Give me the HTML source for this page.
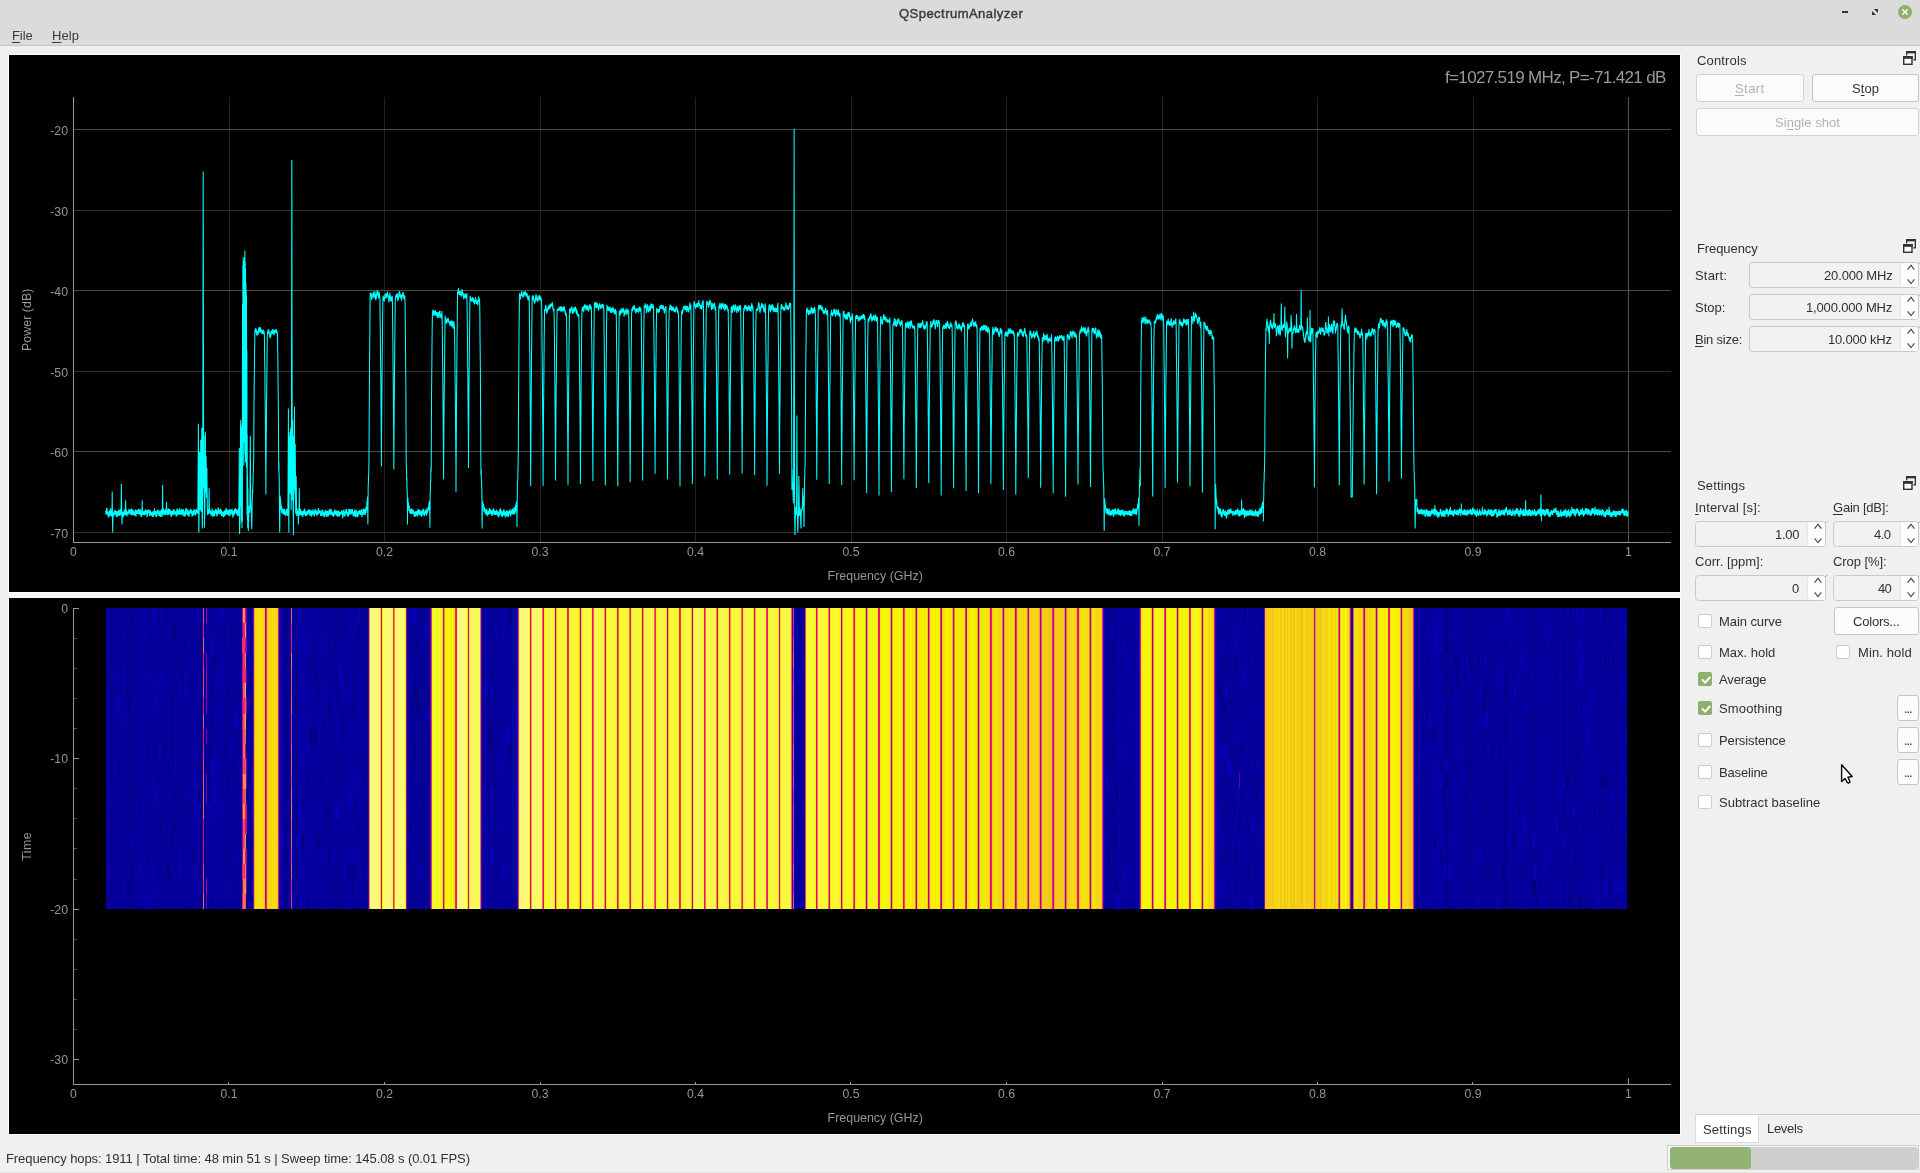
<!DOCTYPE html>
<html lang="en"><head><meta charset="utf-8"><title>QSpectrumAnalyzer</title>
<style>
html,body{margin:0;padding:0}
body{width:1920px;height:1173px;overflow:hidden;background:#f0f0f0;position:relative;font-family:"Liberation Sans", sans-serif;}
.abs,.t,.plot,.btn,.spin,.spinbtn,.cb,.line,.tab,.bar{position:absolute;box-sizing:border-box}
.t{white-space:nowrap;line-height:1;will-change:transform}
.plot{will-change:transform}

.t u{text-decoration:underline;text-underline-offset:1.5px;text-decoration-thickness:1px}
#titlebar{position:absolute;left:0;top:0;width:1920px;height:45px;background:#dbdbdb;border-bottom:1px solid #c5c5c5;box-sizing:content-box}
.btn{background:#fbfbfb;border:1px solid #d2d2d2;border-radius:3px}
.btn.act{border-color:#c4c4c4;background:#fcfcfc}
.spin{background:#f1f1f1;border:1px solid #c9c9c9;border-radius:3.5px}
.spinbtn{background:#fefefe;border-left:1px solid #e4e4e4;border-radius:3px 2px 2px 3px}
.cb{background:#fefefe;border:1px solid #cdcdcd;border-radius:2px}
.cb.on{background:#8fb06d;border-color:#8fb06d}
.line{background:#c9c9c9}
.ttl{-webkit-text-stroke:0.45px #3c3c3c}
</style></head><body>
<div id="titlebar"></div>
<span class="t ttl" id="t1" style="top:7.00px;font-size:13px;color:#3c3c3c;left:898.50px;letter-spacing:0.467px;">QSpectrumAnalyzer</span>
<span class="t " id="t2" style="top:28.70px;font-size:13px;color:#3a3a3a;left:12.30px;letter-spacing:-0.090px;"><u>F</u>ile</span>
<span class="t " id="t3" style="top:28.70px;font-size:13px;color:#3a3a3a;left:52.30px;letter-spacing:0.083px;"><u>H</u>elp</span>
<svg class="abs" style="left:1835px;top:2px" width="85" height="22" viewBox="1835 2 85 22"><rect x="1842" y="11" width="6" height="2" fill="#333"/><path d="M1873.9 9H1878V13.1z M1872 10.9V15H1876.1z" fill="#333"/><circle cx="1905" cy="12" r="7" fill="#8fb06d"/><path d="M1902.3 9.3l5.4 5.4m0-5.4l-5.4 5.4" stroke="#fff" stroke-width="1.4"/></svg>
<div class="abs" style="left:8px;top:54px;width:1673px;height:539px;background:#fff"></div>
<div class="abs" style="left:8px;top:597px;width:1673px;height:538px;background:#fff"></div>
<div class="abs" style="left:8px;top:593px;width:1673px;height:4px;background:repeating-conic-gradient(#fbfbfb 0% 25%,#f0f0f0 0% 50%) 0 0/2px 2px"></div>
<svg class="plot" style="left:9px;top:55px" width="1671" height="537" viewBox="9 55 1671 537">
<rect x="9" y="55" width="1671" height="537" fill="#000"/>
<g shape-rendering="crispEdges" stroke-width="1" fill="none"><path d="M229.5 97V542" stroke="#222222"/><path d="M384.5 97V542" stroke="#222222"/><path d="M540.5 97V542" stroke="#222222"/><path d="M695.5 97V542" stroke="#222222"/><path d="M851.5 97V542" stroke="#222222"/><path d="M1006.5 97V542" stroke="#222222"/><path d="M1162.5 97V542" stroke="#222222"/><path d="M1317.5 97V542" stroke="#222222"/><path d="M1473.5 97V542" stroke="#222222"/><path d="M1628.5 97V542" stroke="#545454"/><path d="M74 129.5H1671" stroke="#4a4a4a"/><path d="M74 210.5H1671" stroke="#2e2e2e"/><path d="M74 290.5H1671" stroke="#4a4a4a"/><path d="M74 371.5H1671" stroke="#2e2e2e"/><path d="M74 451.5H1671" stroke="#4a4a4a"/><path d="M74 532.5H1671" stroke="#2e2e2e"/></g>
<g shape-rendering="crispEdges" stroke="#969696" stroke-width="1" fill="none"><path d="M73.5 97V543"/><path d="M73 542.5H1671"/></g>
<g fill="#969696" font-family='"Liberation Sans", sans-serif'><text x="68.0" y="135.0" font-size="12.3" text-anchor="end">-20</text><text x="68.0" y="216.0" font-size="12.3" text-anchor="end">-30</text><text x="68.0" y="296.0" font-size="12.3" text-anchor="end">-40</text><text x="68.0" y="377.0" font-size="12.3" text-anchor="end">-50</text><text x="68.0" y="457.0" font-size="12.3" text-anchor="end">-60</text><text x="68.0" y="538.0" font-size="12.3" text-anchor="end">-70</text><text x="73.5" y="556.0" font-size="12.2" text-anchor="middle">0</text><text x="229.0" y="556.0" font-size="12.2" text-anchor="middle">0.1</text><text x="384.5" y="556.0" font-size="12.2" text-anchor="middle">0.2</text><text x="540.0" y="556.0" font-size="12.2" text-anchor="middle">0.3</text><text x="695.5" y="556.0" font-size="12.2" text-anchor="middle">0.4</text><text x="851.0" y="556.0" font-size="12.2" text-anchor="middle">0.5</text><text x="1006.5" y="556.0" font-size="12.2" text-anchor="middle">0.6</text><text x="1162.0" y="556.0" font-size="12.2" text-anchor="middle">0.7</text><text x="1317.5" y="556.0" font-size="12.2" text-anchor="middle">0.8</text><text x="1473.0" y="556.0" font-size="12.2" text-anchor="middle">0.9</text><text x="1628.5" y="556.0" font-size="12.2" text-anchor="middle">1</text><text x="875.2" y="580.0" font-size="12.4" text-anchor="middle" textLength="95.2" lengthAdjust="spacing">Frequency (GHz)</text><text transform="translate(30.6 319.8) rotate(-90)" font-size="12.4" text-anchor="middle" textLength="62.4" lengthAdjust="spacing">Power (dB)</text><text x="1666.3" y="83.0" font-size="17" text-anchor="end" textLength="221.3" lengthAdjust="spacing" fill="#9a9a9a">f=1027.519 MHz, P=-71.421 dB</text></g>
<polyline fill="none" stroke="#00ffff" stroke-width="1.05" stroke-linejoin="bevel" points="105.8,510.9 106.0,514.9 106.2,510.3 106.3,514.1 106.5,508.3 106.7,508.3 106.8,508.3 107.0,508.3 107.2,511.8 107.3,513.5 107.5,511.3 107.7,514.1 107.8,512.5 108.0,516.3 108.2,512.0 108.3,517.4 108.5,512.1 108.7,515.4 108.8,511.8 109.0,514.8 109.2,510.6 109.3,514.1 109.5,511.0 109.7,516.5 109.8,512.0 110.0,516.3 110.2,510.3 110.3,512.9 110.5,508.4 110.7,512.3 110.8,508.5 111.0,514.0 111.2,511.6 111.3,516.4 111.5,512.5 111.7,516.0 111.8,513.5 112.0,510.6 112.2,496.1 112.2,491.4 112.3,503.5 112.5,521.2 112.7,532.1 112.7,532.5 112.8,522.6 113.0,515.9 113.2,512.8 113.3,515.8 113.5,512.2 113.7,516.3 113.8,512.3 114.0,513.7 114.2,511.1 114.3,514.6 114.5,510.9 114.7,512.8 114.8,510.2 115.0,514.5 115.2,509.7 115.3,513.4 115.5,511.8 115.7,514.1 115.8,511.3 116.0,515.4 116.2,512.3 116.3,517.1 116.5,512.2 116.7,517.3 116.8,511.2 117.0,515.4 117.2,511.0 117.3,515.5 117.5,513.0 117.7,516.5 117.8,512.5 118.0,513.6 118.2,511.6 118.3,514.1 118.5,509.5 118.7,515.4 118.8,510.9 119.0,514.7 119.2,510.2 119.3,516.0 119.5,511.3 119.7,515.1 119.8,512.1 120.0,513.7 120.2,509.9 120.3,514.1 120.5,509.4 120.7,515.2 120.8,509.2 121.0,513.5 121.2,504.5 121.3,491.1 121.4,484.1 121.5,495.9 121.7,510.4 121.8,516.0 122.0,524.3 122.0,524.4 122.2,517.6 122.3,514.6 122.5,511.7 122.7,516.3 122.8,513.6 123.0,517.2 123.2,512.8 123.3,516.6 123.5,511.7 123.7,515.9 123.8,512.0 124.0,513.5 124.2,509.6 124.3,514.6 124.5,510.2 124.7,513.7 124.8,509.6 125.0,515.2 125.2,511.3 125.3,511.6 125.5,503.2 125.6,500.3 125.7,504.9 125.8,509.1 126.0,515.5 126.2,509.5 126.3,513.8 126.5,510.5 126.7,514.8 126.8,511.4 127.0,516.5 127.2,512.7 127.3,514.3 127.5,511.8 127.7,513.7 127.8,511.9 128.0,513.4 128.2,511.1 128.3,514.5 128.5,512.2 128.7,514.5 128.8,508.9 129.0,513.6 129.2,509.6 129.3,513.5 129.5,509.7 129.7,512.6 129.8,510.1 130.0,512.6 130.2,509.7 130.3,512.9 130.5,510.5 130.7,515.1 130.8,509.2 131.0,514.3 131.2,509.0 131.3,513.2 131.5,508.5 131.7,514.7 131.8,511.2 132.0,515.4 132.2,512.2 132.3,514.5 132.5,510.3 132.7,514.8 132.8,509.5 133.0,515.0 133.2,510.2 133.3,513.5 133.5,512.2 133.7,514.8 133.8,510.7 134.0,514.7 134.2,513.1 134.3,514.6 134.5,513.1 134.7,515.9 134.8,512.4 135.0,513.5 135.2,510.5 135.3,514.5 135.5,509.4 135.7,513.5 135.8,512.7 136.0,516.6 136.2,509.9 136.3,513.3 136.5,510.5 136.7,513.2 136.8,510.2 137.0,513.6 137.2,510.6 137.3,513.9 137.5,512.2 137.7,513.1 137.8,511.1 138.0,512.4 138.2,509.0 138.3,513.6 138.5,510.0 138.7,513.9 138.8,508.8 139.0,512.9 139.2,510.0 139.3,513.3 139.5,509.7 139.7,515.1 139.8,512.1 140.0,513.2 140.2,509.4 140.3,512.9 140.5,509.2 140.7,513.6 140.8,510.7 141.0,516.9 141.2,514.3 141.3,516.8 141.5,513.5 141.7,516.6 141.8,511.3 142.0,512.4 142.2,503.1 142.2,500.3 142.3,506.5 142.5,509.9 142.7,514.9 142.8,512.2 143.0,514.2 143.2,511.4 143.3,514.4 143.5,511.4 143.7,514.6 143.8,512.2 144.0,514.8 144.2,511.1 144.3,515.4 144.5,512.2 144.7,515.1 144.8,511.4 145.0,513.6 145.2,509.9 145.3,514.3 145.5,509.5 145.7,514.5 145.8,510.7 146.0,513.2 146.2,509.8 146.3,513.4 146.5,511.7 146.7,514.2 146.8,511.0 147.0,516.9 147.2,511.9 147.3,516.7 147.5,510.1 147.7,513.3 147.8,509.8 148.0,513.4 148.2,510.3 148.3,513.0 148.5,510.1 148.7,511.6 148.8,509.6 149.0,512.9 149.2,509.5 149.3,515.9 149.5,511.2 149.7,513.8 149.8,511.8 150.0,514.2 150.2,510.5 150.3,514.4 150.5,510.9 150.7,515.8 150.8,511.8 151.0,515.2 151.2,513.7 151.3,515.8 151.5,512.4 151.7,515.3 151.8,511.9 152.0,515.4 152.2,513.1 152.3,516.3 152.5,512.0 152.7,517.0 152.8,512.8 153.0,515.9 153.2,511.1 153.3,516.9 153.5,511.5 153.7,514.3 153.8,511.6 154.0,515.1 154.2,511.2 154.3,512.6 154.5,508.3 154.7,514.5 154.8,511.3 155.0,514.6 155.2,511.3 155.3,515.4 155.5,513.3 155.7,516.4 155.8,511.0 156.0,515.1 156.2,512.7 156.3,515.2 156.5,513.1 156.7,517.2 156.8,513.6 157.0,514.8 157.2,510.1 157.3,512.8 157.5,510.4 157.7,511.7 157.8,510.5 158.0,513.9 158.2,509.6 158.3,513.8 158.5,512.2 158.7,516.1 158.8,512.2 159.0,515.6 159.2,513.5 159.3,515.3 159.5,510.8 159.7,514.6 159.8,512.5 160.0,516.3 160.2,511.0 160.3,516.9 160.5,512.3 160.7,516.8 160.8,510.8 161.0,513.5 161.2,509.8 161.3,513.5 161.5,509.3 161.7,513.3 161.8,512.2 162.0,517.0 162.2,513.5 162.3,512.2 162.5,495.1 162.6,484.9 162.7,495.3 162.8,508.5 163.0,515.4 163.2,509.6 163.3,512.8 163.5,508.3 163.7,512.3 163.8,510.1 164.0,513.7 164.2,510.0 164.3,512.6 164.5,510.3 164.7,515.1 164.8,509.9 165.0,515.2 165.2,512.5 165.3,515.2 165.5,510.1 165.7,514.9 165.8,508.6 166.0,513.0 166.2,508.8 166.3,508.5 166.5,501.9 166.5,503.0 166.7,509.8 166.8,511.0 167.0,514.5 167.2,512.0 167.3,514.4 167.5,511.9 167.7,515.3 167.8,510.0 168.0,513.1 168.2,508.0 168.3,513.6 168.5,510.1 168.7,514.4 168.8,508.9 169.0,514.8 169.2,509.2 169.3,514.3 169.5,509.1 169.7,513.1 169.8,509.9 170.0,513.9 170.2,509.8 170.3,513.7 170.5,511.3 170.7,515.1 170.8,511.4 171.0,516.0 171.2,511.6 171.3,517.0 171.5,511.1 171.7,514.6 171.8,510.4 172.0,515.6 172.2,510.4 172.3,514.6 172.5,511.4 172.7,515.1 172.8,510.5 173.0,514.4 173.2,511.6 173.3,515.3 173.5,509.3 173.7,514.0 173.8,509.3 174.0,511.0 174.2,509.3 174.3,512.2 174.5,510.9 174.7,513.8 174.8,511.0 175.0,514.8 175.2,513.1 175.3,514.5 175.5,511.3 175.7,514.9 175.8,512.1 176.0,515.5 176.2,511.3 176.3,516.7 176.5,511.6 176.7,514.6 176.8,508.8 177.0,512.9 177.2,508.6 177.3,514.4 177.5,511.0 177.7,515.6 177.8,510.6 178.0,513.1 178.2,510.0 178.3,514.6 178.5,509.7 178.7,513.5 178.8,510.2 179.0,514.8 179.2,509.8 179.3,513.0 179.5,510.2 179.7,512.9 179.8,508.0 180.0,513.4 180.2,510.6 180.3,514.9 180.5,511.7 180.7,514.8 180.8,511.0 181.0,514.8 181.2,510.4 181.3,512.5 181.5,509.7 181.7,514.3 181.8,508.9 182.0,513.0 182.2,510.5 182.3,514.4 182.5,509.6 182.7,513.8 182.8,510.2 183.0,516.5 183.2,511.1 183.3,513.7 183.5,509.2 183.7,514.1 183.8,510.5 184.0,513.5 184.2,511.5 184.3,516.1 184.5,513.1 184.7,516.1 184.8,512.3 185.0,516.5 185.2,513.3 185.3,516.6 185.5,509.6 185.7,514.0 185.8,508.6 186.0,511.8 186.2,508.0 186.3,513.1 186.5,508.7 186.7,514.3 186.8,510.0 187.0,514.6 187.2,510.6 187.3,512.2 187.5,510.0 187.7,514.9 187.9,509.2 188.0,515.5 188.2,510.7 188.4,516.0 188.5,511.5 188.7,514.8 188.9,512.2 189.0,517.1 189.2,512.1 189.4,515.3 189.5,511.3 189.7,513.1 189.9,510.0 190.0,513.3 190.2,509.5 190.4,511.8 190.5,510.5 190.7,512.5 190.9,508.7 191.0,513.7 191.2,510.1 191.4,513.0 191.5,510.5 191.7,514.0 191.9,511.5 192.0,516.8 192.2,512.8 192.4,515.8 192.5,511.2 192.7,516.1 192.9,510.9 193.0,515.5 193.2,511.6 193.4,515.3 193.5,509.5 193.7,513.3 193.9,509.7 194.0,514.6 194.2,512.3 194.4,513.3 194.5,509.5 194.7,514.1 194.9,510.4 195.0,513.1 195.2,509.5 195.4,515.4 195.5,511.2 195.7,515.5 195.9,511.3 196.0,513.1 196.2,510.7 196.4,512.9 196.5,508.9 196.7,512.4 196.9,510.2 197.0,512.2 197.2,510.4 197.4,512.5 197.5,510.5 197.7,514.0 197.9,507.8 198.0,487.5 198.2,460.4 198.4,429.2 198.4,423.7 198.5,455.5 198.7,509.7 198.8,532.5 198.9,530.9 199.0,522.3 199.2,507.9 199.4,491.4 199.5,468.6 199.6,451.9 199.7,466.0 199.9,486.1 200.0,508.6 200.2,510.0 200.4,498.0 200.5,473.0 200.7,444.5 200.7,439.8 200.9,468.6 201.0,494.8 201.2,511.8 201.4,511.0 201.5,481.2 201.7,453.2 201.8,427.7 201.9,444.4 202.0,489.7 202.2,522.3 202.3,528.5 202.4,524.2 202.5,512.4 202.7,492.7 202.9,401.8 203.0,305.6 203.2,176.0 203.2,171.4 203.4,302.8 203.5,398.5 203.7,488.5 203.9,484.6 204.0,459.0 204.1,435.8 204.2,467.0 204.4,515.8 204.4,527.7 204.5,520.6 204.7,518.1 204.9,511.9 205.0,498.3 205.2,468.6 205.4,436.4 205.4,431.8 205.5,464.6 205.7,491.4 205.9,492.3 206.0,476.2 206.1,455.9 206.2,464.2 206.4,486.3 206.5,498.0 206.7,494.9 206.9,477.3 206.9,468.0 207.0,481.9 207.2,495.7 207.4,512.1 207.5,509.7 207.7,514.9 207.9,510.7 208.0,513.7 208.2,510.6 208.4,514.1 208.5,509.5 208.7,513.5 208.9,506.9 209.0,496.7 209.1,488.2 209.2,496.5 209.4,511.1 209.5,509.7 209.7,512.6 209.9,509.6 210.0,513.8 210.2,510.2 210.4,513.5 210.5,510.7 210.7,512.6 210.9,511.7 211.0,515.7 211.2,512.8 211.4,515.3 211.5,512.8 211.7,513.9 211.9,509.5 212.0,513.7 212.2,508.4 212.4,515.2 212.5,510.9 212.7,516.6 212.9,513.4 213.0,516.9 213.2,512.0 213.4,514.4 213.5,510.5 213.7,515.9 213.9,511.7 214.0,514.2 214.2,510.8 214.4,516.3 214.5,511.2 214.7,516.1 214.9,512.0 215.0,512.8 215.2,511.1 215.4,512.3 215.5,509.1 215.7,513.5 215.9,510.4 216.0,512.3 216.2,510.5 216.4,513.8 216.5,509.5 216.7,515.4 216.9,511.3 217.0,516.5 217.2,512.1 217.4,515.5 217.5,511.7 217.7,513.1 217.9,507.8 218.0,513.2 218.2,507.5 218.4,511.2 218.5,509.5 218.7,511.6 218.9,509.6 219.0,514.0 219.2,511.3 219.4,514.3 219.5,510.4 219.7,513.0 219.9,510.2 220.0,514.1 220.2,508.9 220.4,512.5 220.5,508.4 220.7,514.0 220.9,511.0 221.0,514.5 221.2,510.0 221.4,516.0 221.5,510.3 221.7,515.4 221.9,512.5 222.0,514.4 222.2,511.9 222.4,515.8 222.5,513.0 222.7,516.4 222.9,511.4 223.0,516.2 223.2,514.0 223.4,517.2 223.5,512.5 223.7,516.1 223.9,511.3 224.0,515.5 224.2,511.5 224.4,516.3 224.5,510.2 224.7,516.4 224.9,511.2 225.0,514.5 225.2,511.5 225.4,514.1 225.5,509.7 225.7,514.9 225.9,509.2 226.0,514.2 226.2,507.8 226.4,513.2 226.5,509.5 226.7,513.4 226.9,509.6 227.0,513.0 227.2,510.6 227.4,515.0 227.5,511.0 227.7,514.7 227.9,510.4 228.0,513.7 228.2,509.5 228.4,514.6 228.5,510.8 228.7,514.8 228.9,510.8 229.0,516.4 229.2,511.9 229.4,515.5 229.5,510.1 229.7,513.1 229.9,509.1 230.0,511.9 230.2,510.5 230.4,513.2 230.5,510.1 230.7,515.2 230.9,510.9 231.0,513.9 231.2,509.7 231.4,513.8 231.5,510.4 231.7,513.1 231.9,509.0 232.0,512.8 232.2,509.6 232.4,513.6 232.5,511.4 232.7,516.5 232.9,511.0 233.0,517.7 233.2,512.5 233.4,515.8 233.5,510.8 233.7,515.7 233.9,511.0 234.0,515.1 234.2,510.2 234.4,514.4 234.5,509.2 234.7,512.0 234.9,508.7 235.0,512.3 235.2,509.2 235.4,512.1 235.5,508.3 235.7,513.4 235.9,508.8 236.0,512.2 236.2,509.1 236.4,512.8 236.5,510.1 236.7,514.0 236.9,511.1 237.0,514.0 237.2,511.9 237.4,515.9 237.5,510.3 237.7,513.3 237.9,510.4 238.0,513.4 238.2,508.6 238.4,514.2 238.5,511.0 238.7,516.1 238.9,506.4 239.0,487.7 239.2,474.9 239.3,447.9 239.4,501.9 239.5,528.9 239.6,534.1 239.7,528.4 239.9,521.1 240.0,523.7 240.2,480.4 240.4,492.5 240.5,430.1 240.7,419.7 240.7,429.6 240.9,425.4 241.0,506.7 241.2,427.1 241.4,519.9 241.5,438.8 241.7,522.9 241.9,432.1 242.0,528.3 242.2,423.5 242.4,521.5 242.5,304.4 242.7,403.9 242.9,265.6 243.0,442.7 243.2,257.3 243.4,441.4 243.5,266.1 243.7,465.8 243.9,274.8 244.0,396.9 244.2,260.9 244.4,442.1 244.5,257.6 244.7,412.6 244.9,250.5 245.0,453.9 245.2,261.6 245.4,462.5 245.5,268.4 245.7,420.1 245.9,282.8 246.0,447.6 246.2,290.0 246.4,467.5 246.5,295.8 246.7,431.9 246.9,351.1 247.0,515.1 247.2,434.6 247.4,520.0 247.5,475.3 247.7,527.8 247.9,488.5 248.0,528.3 248.2,523.0 248.3,530.9 248.4,528.9 248.5,512.8 248.7,521.7 248.9,509.6 249.0,513.2 249.2,505.5 249.4,511.9 249.5,510.1 249.7,512.8 249.9,506.8 250.0,486.8 250.2,459.3 250.3,435.8 250.4,448.7 250.5,475.4 250.7,499.2 250.9,505.7 251.0,509.1 251.2,508.5 251.4,517.1 251.5,521.6 251.7,528.7 251.7,529.3 251.9,521.6 252.0,514.6 252.2,503.4 252.4,498.3 252.5,489.5 252.7,493.2 252.9,483.7 253.0,483.0 253.2,473.1 253.4,472.1 253.5,462.4 253.7,456.8 253.9,423.8 254.0,402.9 254.2,383.6 254.4,369.3 254.5,353.7 254.7,344.0 254.9,330.8 255.0,332.9 255.2,328.9 255.4,331.2 255.5,328.3 255.7,332.0 255.9,328.3 256.0,330.2 256.2,329.7 256.4,333.2 256.5,329.8 256.7,334.8 256.9,333.2 257.0,336.2 257.2,331.4 257.4,333.5 257.5,331.3 257.7,334.1 257.9,331.8 258.0,332.7 258.2,331.0 258.4,334.5 258.5,328.8 258.7,331.7 258.9,327.5 259.0,331.2 259.2,326.7 259.4,331.2 259.5,327.5 259.7,332.4 259.9,328.6 260.0,332.1 260.2,329.1 260.4,330.9 260.5,327.4 260.7,330.1 260.9,328.7 261.0,332.3 261.2,330.0 261.4,333.3 261.5,331.4 261.7,333.9 261.9,330.9 262.0,333.7 262.2,330.4 262.4,332.9 262.5,330.4 262.7,332.8 262.9,329.5 263.0,333.6 263.2,329.6 263.4,333.2 263.5,330.8 263.7,334.4 263.9,330.8 264.0,333.9 264.2,332.0 264.4,334.6 264.5,343.5 264.7,361.3 264.9,373.0 265.0,390.7 265.2,405.4 265.4,424.0 265.5,442.0 265.7,464.0 265.9,494.6 265.9,493.4 266.0,463.6 266.2,441.4 266.4,423.7 266.5,405.6 266.7,391.2 266.9,372.8 267.0,360.7 267.2,342.9 267.4,334.4 267.5,331.4 267.7,332.8 267.9,331.0 268.0,332.5 268.2,329.4 268.4,333.2 268.5,329.5 268.7,333.7 268.9,329.2 269.0,333.1 269.2,332.0 269.4,334.8 269.5,332.8 269.7,337.4 269.9,334.4 270.0,337.5 270.2,335.9 270.4,338.3 270.5,333.8 270.7,337.0 270.9,331.4 271.0,334.9 271.2,330.8 271.4,333.2 271.5,330.5 271.7,333.8 271.9,330.4 272.0,332.0 272.2,330.5 272.4,334.1 272.5,329.6 272.7,332.8 272.9,329.3 273.0,333.7 273.2,329.9 273.4,332.1 273.5,329.6 273.7,333.4 273.9,331.9 274.0,335.4 274.2,331.2 274.4,333.4 274.5,330.0 274.7,332.2 274.9,330.6 275.0,332.3 275.2,329.9 275.4,331.6 275.5,330.0 275.7,333.2 275.9,329.9 276.0,332.8 276.2,329.1 276.4,331.8 276.5,330.9 276.7,333.5 276.9,330.2 277.0,333.3 277.2,332.5 277.4,336.6 277.5,333.4 277.7,349.9 277.9,361.1 278.0,378.0 278.2,392.1 278.4,411.9 278.5,434.6 278.7,470.8 278.9,462.8 279.0,472.5 279.2,475.8 279.4,499.1 279.5,514.4 279.7,532.3 279.7,532.5 279.9,518.0 280.0,507.0 280.2,495.4 280.4,503.8 280.5,498.4 280.7,505.4 280.9,502.6 281.0,509.6 281.2,505.6 281.4,508.4 281.5,505.6 281.7,513.2 281.9,507.8 282.0,510.1 282.2,510.1 282.4,512.6 282.5,509.9 282.7,513.4 282.9,509.3 283.0,513.7 283.2,508.4 283.4,514.6 283.5,510.7 283.7,514.5 283.9,511.9 284.0,513.8 284.2,509.8 284.4,513.8 284.5,509.1 284.7,514.2 284.9,510.6 285.0,515.3 285.2,512.8 285.4,516.0 285.5,511.5 285.7,515.6 285.9,512.3 286.0,514.9 286.2,510.4 286.4,514.1 286.5,508.9 286.7,512.5 286.9,508.8 287.0,512.4 287.2,511.3 287.4,516.0 287.5,510.8 287.7,515.2 287.9,510.7 288.0,497.5 288.2,462.6 288.4,424.1 288.4,408.4 288.5,466.9 288.7,513.0 288.9,531.6 288.9,532.5 289.0,511.0 289.2,435.8 289.2,468.4 289.4,472.9 289.5,492.7 289.7,485.6 289.9,455.2 290.0,431.8 290.0,449.9 290.2,478.8 290.4,493.7 290.5,471.9 290.7,440.5 290.7,427.7 290.9,457.0 291.0,488.2 291.2,510.3 291.4,473.5 291.5,376.9 291.7,274.1 291.8,160.1 291.9,200.1 292.0,321.5 292.2,417.7 292.4,500.6 292.5,471.9 292.7,439.1 292.8,419.7 292.9,447.1 293.0,481.8 293.2,513.1 293.4,520.1 293.5,533.8 293.5,534.9 293.7,435.8 293.7,501.7 293.9,489.6 294.0,494.1 294.2,474.6 294.4,440.5 294.5,406.8 294.5,426.9 294.7,467.8 294.9,490.6 295.0,483.1 295.2,455.5 295.2,443.8 295.4,466.8 295.5,488.7 295.7,513.7 295.9,502.2 296.0,492.6 296.2,476.1 296.2,478.5 296.4,495.6 296.5,505.3 296.7,515.9 296.9,510.5 297.0,511.4 297.2,508.6 297.4,511.4 297.5,510.7 297.7,514.2 297.9,511.9 298.0,513.5 298.2,517.4 298.4,524.4 298.4,524.3 298.5,515.5 298.7,513.9 298.9,508.7 299.0,511.9 299.2,497.0 299.3,488.2 299.4,496.9 299.5,507.5 299.7,515.7 299.9,509.3 300.0,513.9 300.2,509.9 300.4,512.1 300.5,508.7 300.7,514.0 300.9,510.2 301.0,515.3 301.2,511.6 301.4,515.0 301.5,510.9 301.7,515.4 301.9,511.6 302.0,514.9 302.2,511.3 302.4,516.3 302.5,512.2 302.7,516.9 302.9,512.5 303.0,515.5 303.2,511.1 303.4,513.4 303.5,511.0 303.7,514.9 303.9,510.0 304.0,513.3 304.2,509.5 304.4,511.8 304.5,508.6 304.7,513.9 304.9,509.3 305.0,514.5 305.2,512.7 305.4,516.0 305.5,511.8 305.7,516.2 305.9,511.9 306.0,515.0 306.2,511.9 306.4,516.0 306.5,511.4 306.7,515.2 306.9,510.9 307.0,514.5 307.2,511.0 307.4,514.9 307.5,510.7 307.7,513.9 307.9,511.5 308.0,514.5 308.2,510.0 308.4,512.9 308.5,509.4 308.7,512.6 308.9,509.9 309.0,512.2 309.2,509.3 309.4,513.8 309.5,510.4 309.7,515.7 309.9,512.1 310.0,515.8 310.2,512.2 310.4,515.0 310.5,510.4 310.7,514.5 310.9,509.7 311.0,515.3 311.2,510.8 311.4,515.8 311.5,511.6 311.7,516.8 311.9,512.5 312.0,514.0 312.2,511.4 312.4,514.7 312.5,511.7 312.7,513.5 312.9,509.3 313.0,513.9 313.2,511.7 313.4,513.8 313.5,510.9 313.7,514.3 313.9,511.8 314.0,515.9 314.2,512.6 314.4,516.3 314.5,511.0 314.7,513.6 314.9,509.3 315.0,512.7 315.2,510.8 315.4,513.8 315.5,509.1 315.7,513.0 315.9,510.0 316.0,514.3 316.2,511.0 316.4,515.4 316.5,512.4 316.7,515.8 316.9,511.6 317.0,515.4 317.2,512.2 317.4,514.5 317.5,510.9 317.7,514.9 317.9,510.9 318.0,513.1 318.2,508.4 318.4,511.6 318.5,508.0 318.7,513.6 318.9,510.1 319.0,512.0 319.2,510.2 319.4,512.2 319.5,510.3 319.7,513.1 319.9,510.5 320.0,513.2 320.2,510.5 320.4,514.1 320.5,510.4 320.7,516.0 320.9,513.2 321.0,515.6 321.2,513.8 321.4,515.3 321.5,512.8 321.7,515.6 321.9,510.3 322.0,515.9 322.2,511.5 322.4,513.0 322.5,509.6 322.7,514.2 322.9,510.1 323.0,515.3 323.2,512.9 323.4,515.3 323.5,511.7 323.7,516.8 323.9,513.3 324.0,516.8 324.2,512.2 324.4,517.2 324.5,512.2 324.7,514.6 324.9,511.6 325.0,515.8 325.2,510.9 325.4,514.5 325.5,509.8 325.7,514.1 325.9,510.8 326.0,514.6 326.2,512.0 326.4,517.1 326.5,513.4 326.7,515.4 326.9,510.8 327.0,516.7 327.2,513.0 327.4,515.6 327.5,511.1 327.7,516.0 327.9,511.5 328.0,514.3 328.2,512.4 328.4,516.4 328.5,511.6 328.7,514.5 328.9,510.5 329.0,514.4 329.2,509.1 329.4,512.0 329.5,510.4 329.7,514.1 329.9,511.2 330.0,515.2 330.2,512.0 330.4,514.2 330.5,509.6 330.7,512.6 330.9,508.9 331.0,513.2 331.2,509.6 331.4,514.1 331.5,511.7 331.7,514.9 331.9,511.2 332.0,514.9 332.2,511.9 332.4,515.9 332.5,513.4 332.7,516.0 332.9,512.5 333.0,516.0 333.2,513.4 333.4,516.0 333.5,512.6 333.7,516.9 333.9,511.8 334.0,514.4 334.2,511.1 334.4,514.8 334.5,509.9 334.7,514.0 334.9,509.4 335.0,514.1 335.2,510.4 335.4,514.3 335.5,512.1 335.7,513.4 335.9,511.0 336.0,515.6 336.2,511.8 336.4,514.7 336.5,510.6 336.7,514.6 336.9,512.5 337.0,515.4 337.2,511.9 337.4,516.7 337.5,510.8 337.7,515.2 337.9,512.4 338.0,516.4 338.2,514.5 338.4,516.3 338.5,511.0 338.7,514.6 338.9,510.6 339.0,514.8 339.2,512.3 339.4,516.5 339.5,513.2 339.7,515.8 339.9,512.0 340.0,514.8 340.2,512.5 340.4,514.7 340.5,511.9 340.7,514.0 340.9,512.4 341.0,514.3 341.2,512.3 341.4,513.2 341.5,510.9 341.7,513.3 341.9,510.0 342.0,513.8 342.2,510.6 342.4,514.6 342.5,513.5 342.7,518.6 342.9,514.4 343.0,516.6 343.2,512.5 343.4,515.4 343.5,510.4 343.7,514.4 343.9,509.6 344.0,513.5 344.2,512.3 344.4,515.7 344.5,511.7 344.7,516.6 344.9,513.3 345.0,516.2 345.2,512.5 345.4,514.3 345.5,510.6 345.7,513.1 345.9,509.8 346.0,512.4 346.2,509.0 346.4,512.0 346.5,509.0 346.7,514.2 346.9,512.0 347.0,514.6 347.2,512.5 347.4,516.2 347.5,511.8 347.7,515.7 347.9,512.6 348.0,516.8 348.2,512.1 348.4,516.1 348.5,509.5 348.7,515.2 348.9,508.8 349.0,512.9 349.2,508.8 349.4,513.5 349.5,510.3 349.7,514.7 349.9,509.3 350.0,514.3 350.2,509.7 350.4,512.6 350.5,509.3 350.7,513.3 350.9,511.3 351.0,514.6 351.2,511.2 351.4,513.7 351.5,509.3 351.7,512.3 351.9,509.2 352.0,512.1 352.2,509.4 352.4,513.4 352.5,509.1 352.7,512.6 352.9,511.6 353.0,516.3 353.2,512.0 353.4,515.3 353.5,512.1 353.7,516.1 353.9,511.2 354.0,515.7 354.2,511.4 354.4,514.7 354.5,510.3 354.7,513.1 354.9,509.6 355.0,516.4 355.2,511.2 355.4,517.6 355.5,512.3 355.7,516.4 355.9,512.0 356.0,515.2 356.2,510.1 356.4,515.9 356.5,510.4 356.7,516.4 356.9,512.6 357.0,516.7 357.2,512.4 357.4,515.8 357.5,513.1 357.7,517.2 357.9,511.4 358.0,516.6 358.2,511.0 358.4,513.9 358.5,511.8 358.7,514.5 358.9,511.1 359.0,513.4 359.2,511.2 359.4,513.1 359.5,510.0 359.7,513.8 359.9,510.1 360.0,514.5 360.2,510.5 360.4,514.8 360.5,512.5 360.7,515.1 360.9,512.5 361.0,514.2 361.2,510.4 361.4,512.0 361.5,509.3 361.7,514.4 361.9,513.1 362.0,517.5 362.2,513.3 362.4,515.0 362.5,512.6 362.7,513.4 362.9,509.6 363.0,513.5 363.2,508.6 363.4,514.7 363.5,510.7 363.7,512.4 363.9,509.0 364.0,514.4 364.2,508.9 364.4,513.0 364.5,510.3 364.7,514.0 364.9,509.0 365.0,515.0 365.2,508.8 365.4,514.6 365.5,510.1 365.7,513.0 365.9,507.1 366.0,512.9 366.2,506.8 366.4,510.9 366.5,506.6 366.7,509.4 366.9,502.3 367.0,504.3 367.2,500.3 367.4,504.4 367.5,496.7 367.7,510.8 367.9,524.4 367.9,524.2 368.0,506.1 368.2,486.5 368.4,483.9 368.5,475.5 368.7,474.4 368.9,463.4 369.0,458.9 369.2,416.9 369.4,390.1 369.5,365.3 369.7,347.5 369.9,327.0 370.0,312.6 370.2,292.9 370.4,295.6 370.5,293.3 370.7,294.5 370.9,293.2 371.0,293.9 371.2,292.9 371.4,297.5 371.5,294.4 371.7,299.9 371.9,295.8 372.0,299.3 372.2,295.6 372.4,297.3 372.5,295.3 372.7,296.8 372.9,293.3 373.0,294.8 373.2,291.9 373.4,294.5 373.5,292.6 373.7,296.1 373.9,295.0 374.0,298.4 374.2,293.6 374.4,296.6 374.5,293.4 374.7,294.9 374.9,291.0 375.0,297.1 375.2,293.9 375.4,297.7 375.5,296.3 375.7,300.1 375.9,296.7 376.0,299.7 376.2,294.6 376.4,298.4 376.5,294.1 376.7,295.6 376.9,291.8 377.0,293.0 377.2,290.0 377.4,294.0 377.5,291.4 377.7,294.2 377.9,290.9 378.0,296.1 378.2,293.2 378.4,298.4 378.5,295.3 378.7,297.3 378.9,294.5 379.0,296.5 379.2,292.0 379.4,296.7 379.5,293.8 379.7,298.3 379.9,296.5 380.0,311.1 380.2,322.3 380.4,340.7 380.5,354.1 380.7,371.5 380.9,387.6 381.0,408.2 381.2,429.5 381.4,458.4 381.4,466.4 381.5,437.3 381.7,415.4 381.9,394.6 382.0,377.8 382.2,359.9 382.4,345.7 382.5,327.2 382.7,314.7 382.9,297.0 383.0,299.1 383.2,295.6 383.4,300.8 383.5,296.8 383.7,300.8 383.9,298.4 384.0,300.9 384.2,298.3 384.4,301.4 384.5,298.1 384.7,299.3 384.9,294.4 385.0,297.8 385.2,293.8 385.4,295.2 385.5,293.3 385.7,297.8 385.9,295.1 386.0,298.5 386.2,294.9 386.4,297.7 386.5,293.6 386.7,296.5 386.9,294.4 387.0,295.6 387.2,293.5 387.4,294.6 387.5,291.4 387.7,295.8 387.9,294.2 388.0,297.8 388.2,295.0 388.4,298.1 388.5,296.1 388.7,301.4 388.9,299.2 389.0,302.6 389.2,296.5 389.4,298.1 389.5,295.3 389.7,296.4 389.9,292.6 390.0,296.6 390.2,295.0 390.4,300.3 390.5,297.2 390.7,301.2 390.9,296.4 391.0,300.1 391.2,296.8 391.4,301.4 391.5,297.9 391.7,300.8 391.9,297.0 392.0,300.7 392.2,295.7 392.4,298.3 392.5,310.4 392.7,327.2 392.9,342.2 393.0,361.6 393.2,377.1 393.4,397.9 393.5,417.4 393.7,441.9 393.8,469.6 393.9,459.2 394.0,431.2 394.2,407.6 394.4,388.9 394.5,369.6 394.7,353.3 394.9,334.5 395.0,321.7 395.2,303.7 395.4,297.4 395.5,296.6 395.7,298.9 395.9,294.7 396.0,297.1 396.2,295.0 396.4,296.9 396.5,293.9 396.7,296.4 396.9,294.0 397.0,295.5 397.2,292.9 397.4,298.4 397.5,296.2 397.7,300.2 397.9,299.8 398.0,301.3 398.2,298.2 398.4,300.1 398.5,295.0 398.7,298.0 398.9,293.2 399.0,295.6 399.2,291.9 399.4,292.7 399.5,291.0 399.7,294.4 399.9,292.8 400.0,297.0 400.2,296.2 400.4,298.0 400.5,294.4 400.7,298.1 400.9,294.5 401.0,297.5 401.2,294.7 401.4,300.2 401.5,297.2 401.7,300.6 401.9,295.6 402.0,297.8 402.2,294.8 402.4,295.3 402.5,292.9 402.7,296.4 402.9,293.6 403.0,295.7 403.2,291.9 403.4,296.6 403.5,294.6 403.7,298.7 403.9,294.8 404.0,298.5 404.2,296.7 404.4,299.1 404.5,295.3 404.7,299.9 404.9,296.1 405.0,300.0 405.2,312.9 405.4,331.7 405.5,346.9 405.7,368.2 405.9,388.4 406.0,419.2 406.2,460.5 406.4,468.7 406.5,467.9 406.7,481.0 406.9,478.5 407.0,490.2 407.2,488.9 407.4,506.7 407.5,524.4 407.5,506.7 407.7,509.5 407.9,497.7 408.0,506.3 408.2,502.3 408.4,507.4 408.5,502.4 408.7,508.6 408.9,507.7 409.0,511.0 409.2,505.2 409.4,511.1 409.5,509.4 409.7,512.9 409.9,509.1 410.0,512.4 410.2,509.5 410.4,513.8 410.5,511.5 410.7,513.3 410.9,508.4 411.0,514.0 411.2,510.0 411.4,512.4 411.5,509.6 411.7,513.9 411.9,509.1 412.0,512.8 412.2,509.9 412.4,512.7 412.5,510.7 412.7,512.9 412.9,509.5 413.0,514.1 413.2,510.5 413.4,513.3 413.5,510.3 413.7,512.7 413.9,511.4 414.0,515.7 414.2,511.9 414.4,516.7 414.5,512.7 414.7,516.7 414.9,511.7 415.0,515.9 415.2,512.0 415.4,515.5 415.5,512.4 415.7,516.5 415.9,511.0 416.0,515.4 416.2,511.4 416.4,514.5 416.5,512.5 416.7,515.1 416.9,511.1 417.0,514.4 417.2,512.1 417.4,516.6 417.5,510.5 417.7,515.0 417.9,510.7 418.0,512.5 418.2,509.1 418.4,513.3 418.5,510.1 418.7,514.5 418.9,510.8 419.0,514.8 419.2,509.4 419.4,514.7 419.5,509.4 419.7,514.4 419.9,511.4 420.0,515.5 420.2,512.7 420.4,515.7 420.5,511.8 420.7,515.6 420.9,511.3 421.0,513.3 421.2,510.0 421.4,515.4 421.5,511.5 421.7,516.6 421.9,514.5 422.0,516.8 422.2,512.3 422.4,514.3 422.5,511.1 422.7,512.6 422.9,509.0 423.0,513.8 423.2,508.9 423.4,513.0 423.5,509.3 423.7,514.7 423.9,511.9 424.0,515.5 424.2,511.5 424.4,516.2 424.5,512.8 424.7,515.3 424.9,512.4 425.0,514.0 425.2,510.2 425.4,513.6 425.5,509.4 425.7,512.8 425.9,510.3 426.0,514.3 426.2,510.3 426.4,514.9 426.5,511.0 426.7,515.7 426.9,510.4 427.0,512.4 427.2,507.7 427.4,513.0 427.5,510.8 427.7,511.6 427.9,509.7 428.0,510.2 428.2,508.3 428.4,510.5 428.5,505.9 428.7,510.1 428.9,502.6 429.0,507.5 429.2,502.7 429.4,506.1 429.5,500.5 429.7,511.1 429.9,523.5 429.9,527.7 430.0,514.6 430.2,491.4 430.4,489.9 430.5,480.5 430.7,482.0 430.9,469.5 431.0,466.7 431.2,471.6 431.4,428.2 431.5,398.9 431.7,378.4 431.9,357.7 432.0,343.5 432.2,326.6 432.4,316.6 432.5,311.5 432.7,312.9 432.9,309.8 433.0,313.3 433.2,309.7 433.4,313.6 433.5,311.5 433.7,315.5 433.9,312.0 434.0,315.7 434.2,311.0 434.4,314.2 434.5,311.8 434.7,315.4 434.9,311.9 435.0,314.4 435.2,309.7 435.4,314.2 435.5,311.2 435.7,314.3 435.9,312.0 436.0,315.6 436.2,312.3 436.4,315.9 436.5,312.3 436.7,314.7 436.9,312.0 437.0,316.1 437.2,314.4 437.4,318.1 437.5,314.8 437.7,317.5 437.9,313.2 438.0,316.0 438.2,312.1 438.4,315.1 438.5,313.8 438.7,316.4 438.9,315.2 439.0,318.3 439.2,313.3 439.4,315.7 439.5,311.0 439.7,315.2 439.9,310.7 440.0,314.4 440.2,312.7 440.4,317.3 440.5,314.2 440.7,316.7 440.9,314.3 441.0,318.4 441.2,315.7 441.4,318.7 441.5,314.5 441.7,314.8 441.9,310.9 442.0,314.3 442.2,322.1 442.4,339.0 442.5,352.5 442.7,372.2 442.9,386.2 443.0,403.7 443.2,420.4 443.4,441.7 443.5,465.9 443.6,479.3 443.7,456.4 443.9,433.1 444.0,414.8 444.2,395.5 444.4,380.0 444.5,363.2 444.7,350.9 444.9,334.0 445.0,323.1 445.2,315.8 445.4,320.0 445.5,317.6 445.7,319.9 445.9,317.7 446.0,321.7 446.2,320.7 446.4,324.0 446.5,320.7 446.7,323.1 446.9,319.6 447.0,322.8 447.2,320.0 447.4,321.5 447.5,318.8 447.7,321.6 447.9,317.7 448.0,321.8 448.2,318.5 448.4,322.0 448.5,318.5 448.7,322.4 448.9,321.4 449.0,323.3 449.2,321.4 449.4,323.4 449.5,321.8 449.7,324.0 449.9,321.6 450.0,325.9 450.2,322.5 450.4,325.9 450.5,321.2 450.7,324.5 450.9,320.6 451.0,323.8 451.2,321.8 451.4,325.0 451.5,322.5 451.7,326.8 451.9,323.4 452.0,324.8 452.2,320.9 452.4,324.7 452.5,320.8 452.7,325.3 452.9,325.2 453.0,328.1 453.2,326.3 453.4,328.8 453.5,323.5 453.7,325.9 453.9,320.9 454.0,325.0 454.2,322.9 454.4,329.0 454.5,327.3 454.7,344.6 454.9,355.9 455.0,373.4 455.2,386.1 455.4,403.8 455.5,420.1 455.7,440.0 455.9,461.1 456.0,492.2 456.0,488.8 456.2,451.6 456.4,425.9 456.5,401.9 456.7,382.3 456.9,360.5 457.0,343.7 457.2,324.7 457.4,309.4 457.5,292.2 457.7,294.5 457.9,290.5 458.0,292.5 458.2,289.6 458.4,290.1 458.5,288.1 458.7,293.8 458.9,291.4 459.0,294.8 459.2,292.8 459.4,294.1 459.5,291.0 459.7,295.3 459.9,292.0 460.0,293.9 460.2,291.1 460.4,295.2 460.5,291.8 460.7,294.6 460.9,292.7 461.0,296.0 461.2,291.9 461.4,296.7 461.5,293.0 461.7,294.4 461.9,289.3 462.0,293.0 462.2,289.4 462.4,292.1 462.5,291.5 462.7,294.5 462.9,292.6 463.0,296.1 463.2,292.9 463.4,297.1 463.5,294.1 463.7,299.3 463.9,295.1 464.0,297.5 464.2,295.2 464.4,298.1 464.5,295.4 464.7,298.2 464.9,293.3 465.0,295.4 465.2,293.9 465.4,296.4 465.5,294.1 465.7,297.3 465.9,295.2 466.0,298.5 466.2,295.3 466.4,297.7 466.5,294.4 466.7,297.9 466.9,293.0 467.0,300.4 467.2,312.8 467.4,330.3 467.5,345.3 467.7,364.3 467.9,380.2 468.0,400.6 468.2,420.8 468.4,445.6 468.5,468.0 468.5,451.1 468.7,425.3 468.9,403.3 469.0,385.7 469.2,366.0 469.4,352.2 469.5,335.0 469.7,321.6 469.9,303.8 470.0,299.4 470.2,295.8 470.4,297.1 470.5,295.7 470.7,300.3 470.9,298.1 471.0,300.6 471.2,299.4 471.4,301.1 471.5,299.3 471.7,301.8 471.9,298.5 472.0,301.4 472.2,298.3 472.4,300.6 472.5,296.9 472.7,301.3 472.9,297.6 473.0,301.4 473.2,298.1 473.4,301.8 473.5,298.4 473.7,302.4 473.9,300.0 474.0,302.9 474.2,301.3 474.4,304.4 474.5,300.9 474.7,304.0 474.9,300.4 475.0,302.4 475.2,299.1 475.4,299.8 475.5,297.0 475.7,300.8 475.9,298.5 476.0,301.6 476.2,300.4 476.4,304.3 476.5,302.0 476.7,303.2 476.9,301.0 477.0,303.7 477.2,300.5 477.4,304.0 477.5,302.7 477.7,305.5 477.9,303.3 478.0,304.0 478.2,299.3 478.4,302.1 478.5,296.6 478.7,301.2 478.9,297.4 479.0,300.2 479.2,299.5 479.4,300.9 479.5,299.1 479.7,304.8 479.9,316.3 480.0,335.9 480.2,351.6 480.4,373.5 480.5,395.3 480.7,427.5 480.9,475.5 481.0,470.1 481.2,469.4 481.4,481.1 481.5,479.8 481.7,487.9 481.9,491.6 482.0,516.7 482.2,528.5 482.2,523.1 482.4,508.1 482.5,500.8 482.7,504.1 482.9,502.4 483.0,504.3 483.2,503.9 483.4,504.3 483.5,504.5 483.7,509.4 483.9,507.2 484.0,512.0 484.2,506.6 484.4,510.7 484.5,510.8 484.7,511.7 484.9,508.2 485.0,512.8 485.2,509.0 485.4,514.5 485.5,510.4 485.7,513.2 485.9,510.3 486.0,512.1 486.2,510.8 486.4,514.3 486.5,509.2 486.7,513.8 486.9,509.1 487.0,515.6 487.2,511.6 487.4,516.2 487.5,511.5 487.7,514.4 487.9,512.6 488.0,514.6 488.2,511.1 488.4,514.9 488.5,511.3 488.7,514.1 488.9,510.7 489.0,513.4 489.2,508.4 489.4,513.7 489.5,508.2 489.7,512.5 489.9,510.4 490.0,513.9 490.2,509.1 490.4,513.0 490.5,510.2 490.7,512.8 490.9,509.4 491.0,514.1 491.2,509.9 491.4,514.2 491.5,511.5 491.7,515.0 491.9,510.7 492.0,516.1 492.2,511.6 492.4,515.2 492.5,511.0 492.7,515.3 492.9,509.6 493.0,513.9 493.2,510.2 493.4,512.6 493.5,508.3 493.7,513.8 493.9,509.7 494.0,511.6 494.2,509.8 494.4,514.4 494.5,511.2 494.7,515.0 494.9,510.9 495.0,515.2 495.2,511.4 495.4,515.1 495.5,511.6 495.7,514.4 495.9,510.4 496.0,513.8 496.2,511.9 496.4,514.8 496.5,510.0 496.7,514.8 496.9,509.6 497.0,514.8 497.2,511.1 497.4,512.7 497.5,511.6 497.7,515.9 497.9,512.9 498.0,516.1 498.2,511.6 498.4,515.3 498.5,512.5 498.7,517.5 498.9,511.8 499.0,515.8 499.2,512.2 499.4,515.1 499.5,510.3 499.7,515.3 499.9,509.7 500.0,512.7 500.2,508.3 500.4,512.9 500.5,508.7 500.7,513.2 500.9,509.1 501.0,514.8 501.2,511.3 501.4,515.7 501.5,511.6 501.7,516.7 501.9,511.5 502.0,515.0 502.2,511.4 502.4,516.7 502.5,512.2 502.7,516.6 502.9,512.6 503.0,514.6 503.2,510.5 503.4,515.3 503.5,510.6 503.7,514.9 503.9,509.0 504.0,512.2 504.2,511.4 504.4,513.5 504.5,511.3 504.7,515.3 504.9,512.9 505.0,516.0 505.2,513.7 505.4,517.6 505.5,511.7 505.7,516.2 505.9,512.2 506.0,514.9 506.2,511.2 506.4,514.8 506.5,510.2 506.7,516.4 506.9,510.9 507.0,515.9 507.2,512.3 507.4,513.6 507.5,511.1 507.7,513.3 507.9,511.2 508.0,516.4 508.2,510.8 508.4,517.0 508.5,512.7 508.7,514.6 508.9,512.7 509.0,514.2 509.2,512.1 509.4,514.2 509.5,510.6 509.7,513.8 509.9,509.0 510.0,513.7 510.2,511.0 510.4,515.5 510.5,511.4 510.7,516.4 510.9,511.8 511.0,514.9 511.2,511.4 511.4,512.8 511.5,510.2 511.7,513.8 511.9,510.4 512.0,513.9 512.2,508.4 512.4,513.2 512.5,509.5 512.7,512.9 512.9,510.9 513.0,514.7 513.2,508.8 513.4,514.1 513.5,510.8 513.7,513.3 513.9,508.5 514.0,513.5 514.2,507.5 514.4,511.7 514.5,507.0 514.7,514.5 514.9,510.2 515.0,511.0 515.2,508.0 515.4,512.7 515.5,504.8 515.7,510.9 515.9,505.1 516.0,506.8 516.2,502.2 516.4,506.1 516.5,501.3 516.7,502.9 516.9,515.9 517.0,526.9 517.0,521.3 517.2,499.9 517.4,492.1 517.5,481.2 517.7,481.4 517.9,471.0 518.0,471.4 518.2,459.8 518.4,439.2 518.5,402.4 518.7,377.4 518.9,352.8 519.0,335.7 519.2,316.9 519.4,304.2 519.5,293.2 519.7,297.0 519.9,294.1 520.0,297.2 520.2,296.0 520.4,299.5 520.5,295.5 520.7,296.2 520.9,294.2 521.0,295.8 521.2,292.8 521.4,294.4 521.5,291.3 521.7,295.7 521.9,291.2 522.0,294.9 522.2,294.5 522.4,297.6 522.5,294.5 522.7,297.5 522.9,295.7 523.0,297.3 523.2,294.9 523.4,297.1 523.5,292.1 523.7,294.7 523.9,292.4 524.0,294.1 524.2,291.6 524.4,293.4 524.5,291.4 524.7,295.6 524.9,292.1 525.0,294.1 525.2,291.5 525.4,293.5 525.5,291.4 525.7,295.0 525.9,292.6 526.0,296.4 526.2,294.1 526.4,295.9 526.5,293.6 526.7,296.8 526.9,293.1 527.0,296.2 527.2,294.0 527.4,298.5 527.5,296.0 527.7,298.4 527.9,296.4 528.0,300.4 528.2,297.1 528.4,300.1 528.5,296.9 528.7,299.7 528.9,295.7 529.0,296.9 529.2,295.3 529.4,314.1 529.5,327.7 529.7,349.1 529.9,364.7 530.0,385.7 530.2,406.0 530.4,429.9 530.5,455.5 530.7,486.0 530.7,473.9 530.9,442.9 531.0,420.2 531.2,397.2 531.4,379.3 531.5,358.2 531.7,342.6 531.9,322.0 532.0,308.1 532.2,295.9 532.4,299.4 532.5,296.2 532.7,297.7 532.9,295.0 533.0,298.4 533.2,295.5 533.4,300.6 533.5,297.2 533.7,300.3 533.9,300.1 534.0,301.6 534.2,300.3 534.4,302.6 534.5,301.0 534.7,303.6 534.9,300.3 535.0,302.7 535.2,298.5 535.4,301.4 535.5,296.8 535.7,298.8 535.9,294.5 536.0,296.3 536.2,294.2 536.4,297.7 536.5,297.3 536.7,300.3 536.9,297.3 537.0,301.4 537.2,299.6 537.4,301.4 537.5,298.6 537.7,301.6 537.9,297.9 538.0,299.7 538.2,295.5 538.4,298.3 538.5,295.8 538.7,298.9 538.9,295.4 539.0,300.6 539.2,295.5 539.4,299.6 539.5,295.3 539.7,297.6 539.9,296.6 540.0,299.6 540.2,296.0 540.4,300.1 540.5,297.7 540.7,300.0 540.9,296.9 541.0,301.1 541.2,299.4 541.4,301.4 541.5,299.6 541.7,308.9 541.9,322.7 542.0,343.8 542.2,358.3 542.4,378.5 542.5,396.9 542.7,418.4 542.9,440.1 543.0,468.2 543.1,485.7 543.2,461.6 543.4,436.4 543.5,413.5 543.7,393.9 543.9,374.6 544.0,358.8 544.2,338.4 544.4,326.3 544.5,309.9 544.7,310.5 544.9,309.0 545.0,311.2 545.2,308.6 545.4,310.4 545.5,305.5 545.7,307.7 545.9,304.7 546.0,309.8 546.2,306.9 546.4,312.7 546.5,308.8 546.7,313.8 546.9,310.8 547.0,313.5 547.2,310.7 547.4,311.8 547.5,308.7 547.7,311.5 547.9,307.5 548.0,308.8 548.2,306.6 548.4,309.7 548.5,305.4 548.7,308.7 548.9,305.4 549.0,309.2 549.2,306.1 549.4,308.7 549.5,305.3 549.7,308.9 549.9,304.3 550.0,307.4 550.2,303.7 550.4,307.8 550.5,304.1 550.7,306.9 550.9,303.8 551.0,306.0 551.2,304.8 551.4,306.5 551.5,304.8 551.7,306.0 551.9,303.0 552.0,306.5 552.2,302.2 552.4,304.3 552.5,302.2 552.7,307.8 552.9,305.4 553.0,309.4 553.2,308.2 553.4,311.4 553.5,309.4 553.7,311.4 553.9,308.6 554.0,312.0 554.2,319.0 554.4,336.1 554.5,349.7 554.7,367.3 554.9,383.5 555.0,402.9 555.2,422.1 555.4,445.9 555.5,477.5 555.5,480.4 555.7,448.1 555.9,424.3 556.0,405.9 556.2,386.0 556.4,370.9 556.5,353.7 556.7,340.8 556.9,321.9 557.0,311.4 557.2,309.9 557.4,311.3 557.5,308.4 557.7,310.7 557.9,309.3 558.0,310.9 558.2,308.8 558.4,309.8 558.5,307.8 558.7,310.1 558.9,309.2 559.0,310.8 559.2,308.9 559.4,310.3 559.5,307.2 559.7,309.1 559.9,306.2 560.0,308.1 560.2,306.1 560.4,310.9 560.5,308.0 560.7,310.2 560.9,308.7 561.0,311.7 561.2,307.8 561.4,309.8 561.5,306.6 561.7,311.1 561.9,308.0 562.0,310.0 562.2,307.0 562.4,309.6 562.5,308.2 562.7,311.4 562.9,308.1 563.0,311.4 563.2,307.4 563.4,309.9 563.5,307.7 563.7,308.5 563.9,306.0 564.0,310.7 564.2,306.2 564.4,309.3 564.5,307.5 564.7,311.1 564.9,310.0 565.0,312.7 565.2,310.4 565.4,315.4 565.5,311.7 565.7,315.7 565.9,312.7 566.0,315.7 566.2,312.8 566.4,315.9 566.5,315.6 566.7,332.2 566.9,346.0 567.0,363.9 567.2,378.5 567.4,396.9 567.5,414.5 567.7,435.8 567.9,459.5 568.0,484.8 568.0,470.2 568.2,442.1 568.4,421.6 568.5,401.0 568.7,384.5 568.9,366.3 569.0,350.9 569.2,333.4 569.4,318.9 569.5,308.8 569.7,312.3 569.9,308.5 570.0,311.3 570.2,310.2 570.4,313.0 570.5,309.3 570.7,310.7 570.9,309.1 571.0,310.8 571.2,307.2 571.4,309.3 571.5,306.4 571.7,309.2 571.9,306.7 572.0,310.9 572.2,309.2 572.4,313.9 572.5,311.2 572.7,313.7 572.9,310.4 573.0,313.8 573.2,308.6 573.4,312.8 573.5,308.9 573.7,312.3 573.9,308.3 574.0,312.4 574.2,307.1 574.4,311.5 574.5,308.3 574.7,310.6 574.9,307.5 575.0,309.7 575.2,306.7 575.4,309.7 575.5,306.9 575.7,310.8 575.9,308.6 576.0,312.5 576.2,309.2 576.4,314.2 576.5,309.0 576.7,313.6 576.9,310.5 577.0,313.3 577.2,310.6 577.4,315.4 577.5,312.4 577.7,315.8 577.9,314.7 578.0,316.8 578.2,314.0 578.4,316.7 578.5,315.2 578.7,316.7 578.9,314.0 579.0,322.6 579.2,335.0 579.4,352.1 579.5,366.1 579.7,384.8 579.9,401.2 580.0,421.4 580.2,442.8 580.4,470.2 580.4,484.0 580.5,457.9 580.7,433.8 580.9,411.9 581.0,394.1 581.2,374.7 581.4,360.5 581.5,342.0 581.7,328.2 581.9,311.6 582.0,310.0 582.2,307.5 582.4,309.7 582.5,307.2 582.7,311.0 582.9,307.2 583.0,310.2 583.2,306.4 583.4,311.0 583.5,307.9 583.7,312.2 583.9,308.5 584.0,309.3 584.2,305.5 584.4,308.7 584.5,304.7 584.7,306.9 584.9,304.4 585.0,307.7 585.2,304.8 585.4,307.8 585.5,304.7 585.7,308.7 585.9,306.8 586.0,310.5 586.2,307.0 586.4,308.5 586.5,305.8 586.7,309.5 586.9,306.3 587.0,307.9 587.2,305.0 587.4,307.8 587.5,306.1 587.7,310.0 587.9,306.4 588.0,311.0 588.2,308.7 588.4,311.6 588.5,307.7 588.7,310.7 588.9,306.7 589.0,310.0 589.2,305.4 589.4,307.0 589.5,304.5 589.7,305.8 589.9,304.3 590.0,306.5 590.2,304.4 590.4,309.3 590.5,306.0 590.7,308.8 590.9,306.3 591.0,308.9 591.2,306.6 591.4,308.3 591.5,319.0 591.7,338.4 591.9,351.7 592.0,370.6 592.2,385.6 592.4,406.5 592.5,425.1 592.7,448.9 592.9,481.0 592.9,476.9 593.0,445.6 593.2,421.9 593.4,401.7 593.5,381.3 593.7,365.3 593.9,346.2 594.0,332.0 594.2,314.3 594.4,305.3 594.5,302.6 594.7,306.0 594.9,303.6 595.0,308.4 595.2,302.7 595.4,306.8 595.5,302.9 595.7,303.8 595.9,301.8 596.0,304.9 596.2,302.7 596.4,307.9 596.5,305.2 596.7,307.1 596.9,302.8 597.0,307.3 597.2,303.3 597.4,305.9 597.5,304.5 597.7,308.1 597.9,305.1 598.0,308.5 598.2,307.0 598.4,310.8 598.5,308.1 598.7,310.5 598.9,307.2 599.0,308.7 599.2,304.3 599.4,307.0 599.5,303.4 599.7,307.0 599.9,304.3 600.0,306.1 600.2,305.5 600.4,306.8 600.5,305.1 600.7,308.9 600.9,305.3 601.0,308.4 601.2,305.9 601.4,307.7 601.5,304.5 601.7,306.5 601.9,304.1 602.0,307.0 602.2,304.4 602.4,307.5 602.5,303.7 602.7,306.9 602.9,306.2 603.0,307.9 603.2,306.9 603.4,309.2 603.5,304.4 603.7,309.0 603.9,308.2 604.0,326.9 604.2,341.4 604.4,361.7 604.5,377.2 604.7,397.8 604.9,415.0 605.0,437.2 605.2,462.6 605.3,485.6 605.4,467.4 605.5,439.7 605.7,418.5 605.9,396.8 606.0,379.8 606.2,361.9 606.4,347.5 606.5,328.6 606.7,314.9 606.9,305.1 607.0,308.3 607.2,305.9 607.4,310.7 607.5,307.1 607.7,310.7 607.9,308.4 608.0,310.3 608.2,306.6 608.4,310.3 608.5,306.9 608.7,309.4 608.9,308.2 609.0,311.3 609.2,309.1 609.4,309.9 609.5,308.0 609.7,310.7 609.9,306.6 610.0,309.9 610.2,307.0 610.4,311.9 610.5,310.1 610.7,313.0 610.9,308.9 611.0,312.2 611.2,309.4 611.4,312.2 611.5,308.1 611.7,312.6 611.9,310.2 612.0,312.8 612.2,309.9 612.4,311.7 612.5,307.7 612.7,309.4 612.9,306.8 613.0,309.8 613.2,307.5 613.4,311.9 613.5,308.8 613.7,312.5 613.9,310.2 614.0,312.7 614.2,310.7 614.4,314.2 614.5,311.2 614.7,313.4 614.9,309.1 615.0,311.0 615.2,308.9 615.4,312.8 615.5,309.0 615.7,314.5 615.9,311.9 616.0,313.2 616.2,310.7 616.4,322.4 616.5,335.1 616.7,354.4 616.9,369.0 617.0,388.1 617.2,404.9 617.4,425.9 617.5,447.5 617.7,476.1 617.8,486.4 617.9,458.1 618.0,435.0 618.2,413.7 618.4,395.5 618.5,376.7 618.7,360.7 618.9,342.7 619.0,330.2 619.2,311.3 619.4,314.3 619.5,310.3 619.7,314.2 619.9,311.3 620.0,313.9 620.2,311.6 620.4,315.4 620.5,310.8 620.7,312.0 620.9,309.8 621.0,311.1 621.2,308.4 621.4,312.0 621.5,309.4 621.7,313.5 621.9,309.3 622.0,311.8 622.2,310.6 622.4,312.8 622.5,309.0 622.7,312.2 622.9,308.5 623.0,310.1 623.2,307.9 623.4,311.4 623.5,308.8 623.7,312.3 623.9,312.4 624.0,316.7 624.2,312.8 624.4,314.5 624.5,311.3 624.7,315.2 624.9,310.0 625.0,314.1 625.2,310.0 625.4,312.7 625.5,310.7 625.7,313.9 625.9,310.2 626.0,311.6 626.2,308.2 626.4,312.3 626.5,310.5 626.7,312.1 626.9,310.6 627.0,315.3 627.2,310.6 627.4,313.9 627.5,310.3 627.7,311.9 627.9,309.1 628.0,311.3 628.2,309.7 628.4,312.1 628.5,310.6 628.7,312.9 628.9,323.8 629.0,342.3 629.2,354.4 629.4,372.9 629.5,389.3 629.7,410.1 629.9,429.1 630.0,453.4 630.2,482.1 630.2,474.0 630.4,445.6 630.5,422.6 630.7,404.0 630.9,383.4 631.0,368.8 631.2,349.8 631.4,336.3 631.5,318.6 631.7,311.9 631.9,308.5 632.0,310.9 632.2,308.7 632.4,311.6 632.5,308.1 632.7,309.1 632.9,306.3 633.0,308.9 633.2,306.9 633.4,308.9 633.5,305.8 633.7,309.7 633.9,306.6 634.0,309.5 634.2,307.5 634.4,309.2 634.5,305.2 634.7,310.3 634.9,308.4 635.0,311.6 635.2,308.6 635.4,312.2 635.5,309.1 635.7,312.7 635.9,310.6 636.0,313.5 636.2,310.5 636.4,311.9 636.5,308.2 636.7,311.7 636.9,308.5 637.0,312.0 637.2,308.7 637.4,311.5 637.5,308.8 637.7,310.8 637.9,309.2 638.0,310.9 638.2,307.8 638.4,312.8 638.5,308.7 638.7,311.4 638.9,308.5 639.0,311.7 639.2,307.7 639.4,310.9 639.5,306.6 639.7,309.6 639.9,306.8 640.0,310.7 640.2,307.6 640.4,311.9 640.5,308.1 640.7,311.0 640.9,308.4 641.0,310.6 641.2,314.1 641.4,331.4 641.5,343.2 641.7,361.6 641.9,376.4 642.1,396.3 642.2,414.3 642.4,436.1 642.6,461.2 642.6,480.6 642.7,460.4 642.9,434.5 643.1,413.8 643.2,393.3 643.4,376.3 643.6,356.9 643.7,343.5 643.9,324.0 644.1,313.7 644.2,305.5 644.4,307.8 644.6,305.5 644.7,307.1 644.9,305.1 645.1,307.1 645.2,303.2 645.4,307.9 645.6,304.9 645.7,307.2 645.9,304.8 646.1,308.9 646.2,307.3 646.4,313.0 646.6,310.3 646.7,312.0 646.9,306.4 647.1,308.0 647.2,304.1 647.4,308.0 647.6,305.7 647.7,310.5 647.9,306.9 648.1,311.0 648.2,309.7 648.4,312.3 648.6,308.6 648.7,312.4 648.9,309.2 649.1,309.4 649.2,305.6 649.4,308.2 649.6,305.5 649.7,310.4 649.9,308.0 650.1,311.5 650.2,310.1 650.4,311.1 650.6,306.4 650.7,308.0 650.9,304.0 651.1,308.1 651.2,303.5 651.4,308.0 651.6,303.6 651.7,308.1 651.9,304.8 652.1,308.8 652.2,304.6 652.4,308.8 652.6,305.2 652.7,307.7 652.9,305.7 653.1,307.8 653.2,304.3 653.4,308.8 653.6,305.9 653.7,320.1 653.9,332.1 654.1,348.3 654.2,363.1 654.4,380.9 654.6,397.2 654.7,417.8 654.9,438.7 655.1,467.6 655.1,473.8 655.2,444.1 655.4,422.5 655.6,401.8 655.7,385.1 655.9,365.8 656.1,352.0 656.2,334.6 656.4,323.1 656.6,308.0 656.7,310.3 656.9,308.9 657.1,312.9 657.2,309.5 657.4,311.5 657.6,308.7 657.7,311.9 657.9,309.0 658.1,311.9 658.2,309.6 658.4,312.2 658.6,310.5 658.7,312.6 658.9,309.1 659.1,312.3 659.2,309.4 659.4,311.4 659.6,308.1 659.7,310.1 659.9,306.1 660.1,308.8 660.2,306.8 660.4,308.5 660.6,305.2 660.7,308.0 660.9,305.5 661.1,307.9 661.2,304.9 661.4,308.5 661.6,305.3 661.7,308.1 661.9,306.1 662.1,309.1 662.2,306.7 662.4,309.1 662.6,305.6 662.7,308.4 662.9,305.1 663.1,308.0 663.2,305.6 663.4,309.8 663.6,306.6 663.7,310.5 663.9,309.4 664.1,311.5 664.2,311.1 664.4,313.4 664.6,310.9 664.7,312.4 664.9,308.2 665.1,310.6 665.2,306.7 665.4,308.6 665.6,307.0 665.7,308.5 665.9,306.0 666.1,310.8 666.2,322.8 666.4,340.4 666.6,352.9 666.7,371.7 666.9,387.6 667.1,408.1 667.2,427.7 667.4,452.3 667.5,479.3 667.6,467.3 667.7,440.3 667.9,417.7 668.1,399.8 668.2,381.2 668.4,366.9 668.6,348.6 668.7,337.1 668.9,321.2 669.1,314.0 669.2,310.2 669.4,310.8 669.6,308.0 669.7,309.8 669.9,306.1 670.1,309.7 670.2,304.4 670.4,309.0 670.6,304.8 670.7,310.0 670.9,307.9 671.1,309.6 671.2,306.4 671.4,310.8 671.6,306.4 671.7,309.4 671.9,306.1 672.1,309.2 672.2,307.7 672.4,310.5 672.6,308.5 672.7,310.2 672.9,307.1 673.1,310.9 673.2,306.8 673.4,310.1 673.6,307.9 673.7,310.9 673.9,308.2 674.1,311.6 674.2,309.0 674.4,312.3 674.6,309.5 674.7,311.1 674.9,309.0 675.1,312.3 675.2,308.8 675.4,312.1 675.6,310.7 675.7,311.9 675.9,307.7 676.1,309.8 676.2,306.2 676.4,307.8 676.6,307.1 676.7,310.0 676.9,306.9 677.1,309.4 677.2,308.0 677.4,312.6 677.6,309.7 677.7,313.3 677.9,310.8 678.1,313.3 678.2,311.1 678.4,313.6 678.6,316.5 678.7,334.3 678.9,348.2 679.1,365.9 679.2,381.1 679.4,401.9 679.6,420.2 679.7,443.2 679.9,469.6 680.0,486.3 680.1,462.7 680.2,437.3 680.4,416.9 680.6,396.5 680.7,379.9 680.9,361.7 681.1,346.3 681.2,329.8 681.4,317.4 681.6,310.5 681.7,314.9 681.9,310.5 682.1,313.9 682.2,312.0 682.4,314.6 682.6,309.8 682.7,312.8 682.9,309.2 683.1,311.1 683.2,307.2 683.4,309.2 683.6,306.8 683.7,308.3 683.9,306.0 684.1,308.6 684.2,305.9 684.4,308.6 684.6,306.0 684.7,309.7 684.9,305.9 685.1,310.4 685.2,306.8 685.4,309.7 685.6,306.6 685.7,310.1 685.9,305.5 686.1,309.8 686.2,306.5 686.4,309.6 686.6,306.8 686.7,312.2 686.9,307.1 687.1,310.3 687.2,306.6 687.4,310.2 687.6,305.8 687.7,310.6 687.9,307.5 688.1,310.6 688.2,307.7 688.4,311.9 688.6,308.5 688.7,312.4 688.9,309.7 689.1,310.4 689.2,307.3 689.4,308.0 689.6,303.9 689.7,305.4 689.9,302.5 690.1,306.5 690.2,305.7 690.4,309.1 690.6,305.7 690.7,308.3 690.9,304.7 691.1,320.1 691.2,331.8 691.4,351.6 691.6,367.0 691.7,387.1 691.9,405.0 692.1,426.8 692.2,449.3 692.4,482.5 692.4,484.1 692.6,449.8 692.7,427.3 692.9,405.2 693.1,387.5 693.2,368.6 693.4,352.4 693.6,334.2 693.7,321.2 693.9,302.5 694.1,304.7 694.2,301.1 694.4,305.5 694.6,302.4 694.7,306.5 694.9,303.9 695.1,306.4 695.2,304.3 695.4,308.4 695.6,305.6 695.7,308.7 695.9,304.8 696.1,307.7 696.2,304.4 696.4,305.9 696.6,303.2 696.7,306.8 696.9,303.8 697.1,307.0 697.2,303.9 697.4,305.8 697.6,302.9 697.7,306.5 697.9,303.9 698.1,307.6 698.2,303.5 698.4,304.0 698.6,301.8 698.7,302.6 698.9,300.2 699.1,304.6 699.2,303.3 699.4,305.4 699.6,303.5 699.7,306.3 699.9,305.0 700.1,308.9 700.2,305.7 700.4,307.8 700.6,305.1 700.7,307.2 700.9,304.9 701.1,308.3 701.2,306.2 701.4,308.7 701.6,306.3 701.7,309.7 701.9,305.0 702.1,308.1 702.2,303.1 702.4,304.6 702.6,302.4 702.7,304.7 702.9,300.3 703.1,302.6 703.2,300.4 703.4,306.0 703.6,319.0 703.7,337.8 703.9,351.1 704.1,370.9 704.2,387.0 704.4,407.9 704.6,428.0 704.7,453.0 704.8,476.6 704.9,461.6 705.1,435.8 705.2,413.4 705.4,395.2 705.6,375.7 705.7,360.8 705.9,343.5 706.1,331.0 706.2,311.8 706.4,307.1 706.6,302.5 706.7,304.6 706.9,300.8 707.1,303.7 707.2,302.3 707.4,304.7 707.6,301.8 707.7,304.7 707.9,303.3 708.1,305.5 708.2,304.8 708.4,307.7 708.6,305.4 708.7,307.0 708.9,303.0 709.1,305.6 709.2,300.9 709.4,305.3 709.6,302.0 709.7,304.9 709.9,299.8 710.1,303.7 710.2,300.5 710.4,302.8 710.6,300.9 710.7,303.2 710.9,302.9 711.1,306.9 711.2,305.5 711.4,310.1 711.6,305.9 711.7,308.9 711.9,305.2 712.1,307.2 712.2,303.1 712.4,307.2 712.6,305.4 712.7,309.1 712.9,306.8 713.1,309.4 713.2,304.9 713.4,306.4 713.6,303.8 713.7,306.3 713.9,303.7 714.1,305.7 714.2,302.3 714.4,305.7 714.6,303.7 714.7,307.4 714.9,305.8 715.1,310.5 715.2,308.4 715.4,309.8 715.6,306.6 715.7,308.6 715.9,313.9 716.1,330.6 716.2,344.8 716.4,363.3 716.6,378.1 716.7,398.0 716.9,415.8 717.1,438.7 717.2,465.9 717.3,479.2 717.4,453.1 717.6,428.0 717.7,408.7 717.9,388.8 718.1,372.5 718.2,354.0 718.4,340.8 718.6,323.3 718.7,312.1 718.9,306.1 719.1,307.9 719.2,304.6 719.4,308.6 719.6,304.7 719.7,307.3 719.9,302.8 720.1,307.2 720.2,304.1 720.4,306.7 720.6,304.5 720.7,308.5 720.9,305.5 721.1,309.7 721.2,305.8 721.4,309.4 721.6,303.7 721.7,307.8 721.9,302.8 722.1,306.7 722.2,303.1 722.4,306.5 722.6,304.0 722.7,307.3 722.9,305.3 723.1,307.4 723.2,304.6 723.4,309.3 723.6,304.6 723.7,307.8 723.9,303.9 724.1,306.5 724.2,303.5 724.4,306.8 724.6,306.2 724.7,311.1 724.9,308.5 725.1,310.0 725.2,307.3 725.4,308.0 725.6,304.1 725.7,306.8 725.9,304.5 726.1,309.1 726.2,305.1 726.4,308.6 726.6,304.9 726.7,308.3 726.9,305.5 727.1,309.2 727.2,305.8 727.4,310.2 727.6,308.7 727.7,310.7 727.9,310.0 728.1,311.7 728.2,309.1 728.4,325.4 728.6,337.1 728.7,355.3 728.9,368.8 729.1,386.7 729.2,402.7 729.4,422.9 729.6,444.4 729.7,474.7 729.7,470.0 729.9,440.1 730.1,419.2 730.2,398.5 730.4,382.2 730.6,364.5 730.7,349.9 730.9,332.1 731.1,320.6 731.2,307.0 731.4,308.5 731.6,306.0 731.7,308.6 731.9,308.4 732.1,311.1 732.2,309.8 732.4,313.0 732.6,309.2 732.7,311.0 732.9,306.1 733.1,308.4 733.2,305.5 733.4,309.5 733.6,305.0 733.7,307.8 733.9,304.4 734.1,309.0 734.2,306.8 734.4,311.5 734.6,310.2 734.7,311.6 734.9,307.7 735.1,310.8 735.2,305.5 735.4,307.7 735.6,304.4 735.7,308.9 735.9,305.5 736.1,309.3 736.2,307.4 736.4,310.7 736.6,307.8 736.7,313.0 736.9,309.0 737.1,310.5 737.2,307.7 737.4,309.2 737.6,305.7 737.7,309.4 737.9,307.4 738.1,311.0 738.2,308.5 738.4,312.3 738.6,308.2 738.7,309.4 738.9,306.8 739.1,307.6 739.2,305.2 739.4,310.2 739.6,307.6 739.7,309.9 739.9,306.2 740.1,310.4 740.2,305.1 740.4,309.7 740.6,305.8 740.7,312.6 740.9,326.4 741.1,343.8 741.2,358.2 741.4,374.8 741.6,389.9 741.7,409.2 741.9,428.2 742.1,452.6 742.1,473.4 742.2,455.7 742.4,431.1 742.6,410.3 742.7,392.5 742.9,373.9 743.1,360.5 743.2,342.9 743.4,330.2 743.6,311.7 743.7,310.3 743.9,307.9 744.1,311.6 744.2,309.4 744.4,310.0 744.6,306.2 744.7,308.8 744.9,304.7 745.1,308.6 745.2,306.2 745.4,307.5 745.6,305.2 745.7,307.9 745.9,305.4 746.1,309.1 746.2,306.4 746.4,308.7 746.6,306.6 746.7,310.4 746.9,307.0 747.1,311.3 747.2,308.3 747.4,310.4 747.6,307.1 747.7,311.1 747.9,307.1 748.1,309.9 748.2,306.3 748.4,309.3 748.6,305.2 748.7,307.2 748.9,305.2 749.1,308.3 749.2,307.7 749.4,310.3 749.6,306.8 749.7,310.7 749.9,307.6 750.1,309.7 750.2,306.3 750.4,310.0 750.6,307.4 750.7,310.8 750.9,307.9 751.1,311.7 751.2,306.5 751.4,308.7 751.6,303.3 751.7,304.5 751.9,303.6 752.1,306.4 752.2,304.9 752.4,308.3 752.6,306.3 752.7,310.3 752.9,306.0 753.1,309.6 753.2,316.4 753.4,334.7 753.6,347.1 753.7,364.5 753.9,378.3 754.1,397.7 754.2,415.2 754.4,438.0 754.6,465.4 754.6,474.9 754.7,446.8 754.9,422.6 755.1,403.5 755.2,383.8 755.4,368.0 755.6,349.8 755.7,338.6 755.9,320.7 756.1,311.8 756.2,309.4 756.4,311.2 756.6,309.3 756.7,310.3 756.9,308.2 757.1,310.1 757.2,308.1 757.4,310.4 757.6,308.1 757.7,311.1 757.9,307.8 758.1,309.4 758.2,305.2 758.4,305.6 758.6,302.5 758.7,306.6 758.9,302.2 759.1,305.4 759.2,303.7 759.4,308.2 759.6,307.3 759.7,312.2 759.9,309.5 760.1,312.8 760.2,309.9 760.4,310.6 760.6,307.4 760.7,310.5 760.9,306.4 761.1,308.0 761.2,305.0 761.4,307.3 761.6,303.1 761.7,307.9 761.9,304.3 762.1,307.7 762.2,306.3 762.4,307.2 762.6,304.6 762.7,306.2 762.9,304.4 763.1,306.5 763.2,304.2 763.4,309.6 763.6,307.3 763.7,311.6 763.9,308.7 764.1,310.6 764.2,309.1 764.4,312.8 764.6,308.8 764.7,310.0 764.9,304.8 765.1,306.9 765.2,303.4 765.4,306.9 765.6,308.3 765.7,327.6 765.9,341.7 766.1,360.4 766.2,374.9 766.4,393.4 766.6,411.3 766.7,432.8 766.9,455.7 767.0,485.8 767.1,476.5 767.2,446.1 767.4,423.2 767.6,402.4 767.7,385.5 767.9,367.0 768.1,354.3 768.2,335.7 768.4,321.8 768.6,309.3 768.7,310.5 768.9,305.8 769.1,307.6 769.2,304.5 769.4,308.6 769.6,304.6 769.7,307.7 769.9,305.5 770.1,310.9 770.2,307.8 770.4,312.3 770.6,307.5 770.7,309.8 770.9,306.7 771.1,307.6 771.2,304.6 771.4,307.9 771.6,306.4 771.7,309.4 771.9,308.3 772.1,310.7 772.2,305.6 772.4,308.7 772.6,304.3 772.7,307.3 772.9,305.7 773.1,309.9 773.2,306.4 773.4,310.3 773.6,308.5 773.7,312.0 773.9,308.1 774.1,311.9 774.2,309.0 774.4,310.7 774.6,308.4 774.7,311.2 774.9,307.5 775.1,311.7 775.2,307.9 775.4,311.6 775.6,308.0 775.7,310.8 775.9,307.8 776.1,312.2 776.2,309.0 776.4,311.6 776.6,310.0 776.7,312.3 776.9,308.1 777.1,311.7 777.2,308.1 777.4,309.5 777.6,304.9 777.7,307.7 777.9,302.8 778.1,311.6 778.2,323.8 778.4,341.2 778.6,355.4 778.7,373.9 778.9,390.1 779.1,409.6 779.2,429.5 779.4,455.6 779.5,473.7 779.6,453.0 779.7,429.1 779.9,407.7 780.1,390.9 780.2,371.8 780.4,358.2 780.6,339.4 780.7,325.4 780.9,309.0 781.1,306.3 781.2,304.5 781.4,308.1 781.6,304.1 781.7,308.5 781.9,304.8 782.1,309.0 782.2,306.2 782.4,308.5 782.6,306.6 782.7,308.1 782.9,306.8 783.1,309.4 783.2,306.9 783.4,309.1 783.6,306.9 783.7,310.5 783.9,308.8 784.1,309.9 784.2,307.5 784.4,310.8 784.6,309.0 784.7,310.4 784.9,307.0 785.1,310.0 785.2,306.2 785.4,306.9 785.6,305.1 785.7,306.8 785.9,302.2 786.1,306.3 786.2,304.3 786.4,307.1 786.6,305.0 786.7,309.4 786.9,305.4 787.1,309.2 787.2,306.8 787.4,309.3 787.6,306.6 787.7,309.2 787.9,306.3 788.1,308.5 788.2,306.5 788.4,310.2 788.6,306.2 788.7,308.7 788.9,305.0 789.1,309.0 789.2,304.2 789.4,306.9 789.6,303.1 789.7,305.4 789.9,302.5 790.1,304.6 790.2,303.3 790.4,304.8 790.6,302.9 790.7,311.4 790.9,324.1 791.1,342.7 791.2,358.3 791.4,380.9 791.6,402.3 791.7,434.9 791.9,489.7 792.1,469.0 792.2,473.5 792.4,481.8 792.6,483.3 792.7,490.1 792.9,488.8 793.1,496.8 793.2,496.1 793.4,503.2 793.6,489.4 793.7,398.4 793.9,292.1 794.1,161.6 794.1,128.7 794.2,256.3 794.4,370.0 794.6,466.5 794.7,519.7 794.9,527.4 795.0,534.9 795.1,532.9 795.2,522.8 795.4,516.8 795.6,507.0 795.7,512.6 795.9,507.6 796.1,513.9 796.2,508.6 796.4,515.0 796.6,509.5 796.7,473.0 796.9,415.6 796.9,421.1 797.1,477.2 797.2,510.5 797.4,515.8 797.6,520.1 797.7,528.8 797.8,532.5 797.9,528.7 798.1,523.6 798.2,515.4 798.4,516.4 798.6,504.7 798.7,493.7 798.9,478.1 798.9,476.1 799.1,491.7 799.2,502.0 799.4,515.7 799.6,510.5 799.7,515.8 799.9,511.4 800.1,513.7 800.2,508.3 800.4,513.7 800.6,514.7 800.7,522.2 800.9,527.0 800.9,528.5 801.1,523.9 801.2,514.9 801.4,512.1 801.6,509.4 801.7,510.5 801.9,508.8 802.1,510.0 802.2,505.5 802.4,509.0 802.6,498.3 802.7,492.2 802.8,488.2 802.9,492.5 803.1,499.2 803.2,502.5 803.4,505.1 803.6,496.4 803.7,508.4 803.9,517.1 804.0,526.9 804.1,525.3 804.2,510.5 804.4,496.6 804.6,477.8 804.7,478.4 804.9,467.4 805.1,466.8 805.2,455.2 805.4,420.8 805.6,393.2 805.7,374.7 805.9,353.6 806.1,341.5 806.2,324.1 806.4,313.1 806.6,309.3 806.7,311.5 806.9,307.7 807.1,312.3 807.2,308.2 807.4,312.6 807.6,308.5 807.7,312.5 807.9,309.5 808.1,312.7 808.2,312.0 808.4,315.2 808.6,311.8 808.7,313.2 808.9,310.4 809.1,312.5 809.2,310.2 809.4,313.9 809.6,310.3 809.7,314.6 809.9,310.9 810.1,314.2 810.2,311.1 810.4,313.3 810.6,310.4 810.7,313.2 810.9,308.0 811.1,310.5 811.2,306.8 811.4,308.8 811.6,308.2 811.7,311.7 811.9,308.9 812.1,313.3 812.2,310.4 812.4,314.3 812.6,310.6 812.7,313.1 812.9,308.1 813.1,311.3 813.2,308.7 813.4,312.9 813.6,311.1 813.7,313.3 813.9,309.5 814.1,311.6 814.2,308.0 814.4,308.6 814.6,306.9 814.7,311.6 814.9,308.7 815.1,312.9 815.2,309.8 815.4,319.1 815.6,332.2 815.7,347.9 815.9,362.0 816.1,380.8 816.2,397.2 816.4,417.4 816.6,438.1 816.7,464.4 816.8,479.7 816.9,455.9 817.1,432.7 817.2,411.2 817.4,393.7 817.6,374.2 817.7,359.5 817.9,340.4 818.1,328.2 818.2,309.1 818.4,309.8 818.6,305.2 818.7,307.9 818.9,304.8 819.1,308.2 819.2,304.9 819.4,309.6 819.6,305.1 819.7,309.7 819.9,306.3 820.1,309.0 820.2,305.3 820.4,307.9 820.6,305.7 820.7,308.7 820.9,305.0 821.1,307.9 821.2,305.3 821.4,309.6 821.6,306.9 821.7,310.6 821.9,306.9 822.1,310.5 822.2,307.7 822.4,310.7 822.6,307.0 822.7,310.6 822.9,309.4 823.1,312.4 823.2,310.1 823.4,313.4 823.6,310.1 823.7,314.1 823.9,310.7 824.1,313.9 824.2,312.2 824.4,313.9 824.6,311.0 824.7,313.2 824.9,310.0 825.1,313.2 825.2,309.2 825.4,310.1 825.6,307.7 825.7,310.2 825.9,308.3 826.1,312.0 826.2,310.9 826.4,314.3 826.6,311.6 826.7,315.0 826.9,311.6 827.1,315.1 827.2,310.9 827.4,312.8 827.6,309.9 827.7,312.7 827.9,321.8 828.1,341.2 828.2,354.3 828.4,373.2 828.6,388.7 828.7,408.6 828.9,427.9 829.1,451.3 829.2,483.9 829.2,483.5 829.4,451.2 829.6,427.6 829.7,408.3 829.9,388.4 830.1,372.1 830.2,353.4 830.4,340.1 830.6,324.5 830.7,316.3 830.9,313.4 831.1,314.9 831.2,311.7 831.4,314.0 831.6,309.8 831.7,315.1 831.9,312.5 832.1,314.6 832.2,313.5 832.4,316.0 832.6,313.6 832.7,316.5 832.9,312.3 833.1,315.1 833.2,313.3 833.4,313.3 833.6,310.6 833.7,311.3 833.9,308.9 834.1,311.8 834.2,309.1 834.4,314.0 834.6,309.5 834.7,313.9 834.9,311.4 835.1,314.5 835.2,312.8 835.4,316.7 835.6,311.0 835.7,312.9 835.9,310.4 836.1,312.5 836.2,308.9 836.4,313.7 836.6,311.9 836.7,314.9 836.9,313.1 837.1,315.5 837.2,311.3 837.4,314.4 837.6,312.8 837.7,314.7 837.9,309.6 838.1,313.4 838.2,309.9 838.4,312.4 838.6,310.1 838.7,315.7 838.9,313.0 839.1,315.9 839.2,312.6 839.4,316.6 839.6,314.0 839.7,316.5 839.9,313.0 840.1,316.7 840.2,315.3 840.4,332.8 840.6,344.6 840.7,362.8 840.9,377.4 841.1,397.9 841.2,414.8 841.4,437.1 841.6,460.9 841.7,484.9 841.7,469.3 841.9,442.0 842.1,421.8 842.2,401.5 842.4,384.8 842.6,367.0 842.7,353.3 842.9,336.4 843.1,323.4 843.2,311.6 843.4,314.1 843.6,310.7 843.7,313.4 843.9,311.2 844.1,316.3 844.2,313.7 844.4,317.4 844.6,315.4 844.7,318.3 844.9,314.2 845.1,317.8 845.2,315.2 845.4,319.4 845.6,316.3 845.7,319.6 845.9,316.4 846.1,319.2 846.2,314.6 846.4,317.2 846.6,313.7 846.7,317.5 846.9,315.0 847.1,318.6 847.2,315.6 847.4,319.7 847.6,314.0 847.7,316.2 847.9,312.7 848.1,314.6 848.2,311.9 848.4,314.4 848.6,312.8 848.7,317.2 848.9,314.1 849.1,316.8 849.2,312.6 849.4,316.6 849.6,312.6 849.7,318.2 849.9,315.9 850.1,320.9 850.2,320.6 850.4,323.2 850.6,317.9 850.7,321.6 850.9,318.1 851.1,320.0 851.2,317.1 851.4,319.8 851.6,317.2 851.7,320.1 851.9,315.3 852.1,318.7 852.2,313.6 852.4,317.6 852.6,314.4 852.7,326.5 852.9,338.8 853.1,356.7 853.2,370.3 853.4,388.4 853.6,403.5 853.7,423.0 853.9,442.5 854.1,468.8 854.1,480.3 854.2,455.2 854.4,433.6 854.6,412.9 854.7,397.1 854.9,379.5 855.1,365.4 855.2,346.9 855.4,334.6 855.6,316.4 855.7,319.1 855.9,315.6 856.1,319.4 856.2,315.7 856.4,319.0 856.6,314.8 856.7,318.3 856.9,315.9 857.1,318.5 857.2,316.2 857.4,318.7 857.6,315.2 857.7,318.1 857.9,315.4 858.1,320.5 858.2,317.3 858.4,321.1 858.6,318.5 858.7,321.6 858.9,317.2 859.1,320.8 859.2,318.0 859.4,320.0 859.6,317.8 859.7,320.6 859.9,316.1 860.1,319.3 860.2,316.4 860.4,319.2 860.6,318.3 860.7,320.0 860.9,316.7 861.1,318.8 861.2,316.0 861.4,318.2 861.6,316.0 861.7,318.9 861.9,315.6 862.1,318.8 862.2,314.7 862.4,317.9 862.6,316.2 862.7,318.8 862.9,315.0 863.1,318.2 863.2,314.6 863.4,318.0 863.6,314.0 863.7,316.8 863.9,314.2 864.1,318.7 864.2,316.0 864.4,319.9 864.6,315.4 864.7,319.6 864.9,317.7 865.1,320.0 865.2,331.7 865.4,350.1 865.6,363.4 865.7,382.3 865.9,398.4 866.1,418.6 866.2,438.1 866.4,461.8 866.6,492.9 866.6,486.9 866.7,456.7 866.9,433.2 867.1,414.7 867.2,394.5 867.4,378.0 867.6,360.0 867.7,346.7 867.9,329.1 868.1,320.9 868.2,318.6 868.4,320.2 868.6,318.4 868.7,322.4 868.9,320.1 869.1,320.7 869.2,317.8 869.4,319.5 869.6,316.0 869.7,319.6 869.9,316.2 870.1,317.5 870.2,315.0 870.4,315.4 870.6,313.9 870.7,317.7 870.9,313.3 871.1,318.0 871.2,314.8 871.4,319.3 871.6,317.1 871.7,321.4 871.9,319.2 872.1,321.4 872.2,317.4 872.4,320.2 872.6,317.4 872.7,320.4 872.9,316.0 873.1,319.7 873.2,317.3 873.4,319.9 873.6,317.3 873.7,318.8 873.9,315.0 874.1,317.5 874.2,315.5 874.4,318.7 874.6,316.8 874.7,321.3 874.9,319.1 875.1,320.3 875.2,317.2 875.4,318.8 875.6,314.3 875.7,317.2 875.9,316.2 876.1,319.0 876.2,317.7 876.4,321.8 876.6,316.7 876.7,320.7 876.9,316.9 877.1,319.1 877.2,316.6 877.4,318.6 877.6,319.6 877.7,337.8 877.9,352.3 878.1,370.9 878.2,386.7 878.4,407.2 878.6,425.9 878.7,448.2 878.9,473.7 879.0,495.4 879.1,476.2 879.2,448.9 879.4,428.2 879.6,406.8 879.7,390.2 879.9,371.9 880.1,357.6 880.2,339.8 880.4,326.9 880.6,316.2 880.7,319.3 880.9,316.6 881.1,319.5 881.2,318.5 881.4,323.3 881.6,321.7 881.7,323.4 881.9,321.1 882.1,324.7 882.2,321.4 882.4,324.7 882.6,319.6 882.7,323.2 882.9,318.6 883.1,320.0 883.2,316.1 883.4,318.7 883.6,314.6 883.7,318.2 883.9,314.1 884.1,318.0 884.2,316.4 884.4,320.3 884.6,317.9 884.7,319.5 884.9,316.4 885.1,319.3 885.2,316.6 885.4,319.5 885.6,316.4 885.7,320.8 885.9,317.5 886.1,322.1 886.2,317.9 886.4,320.8 886.6,319.1 886.7,320.9 886.9,318.5 887.1,321.5 887.2,320.5 887.4,321.9 887.6,320.8 887.7,322.8 887.9,319.6 888.1,322.1 888.2,319.9 888.4,322.0 888.6,319.9 888.7,321.8 888.9,321.2 889.1,322.8 889.2,320.2 889.4,321.5 889.6,318.7 889.7,320.2 889.9,317.5 890.1,332.5 890.2,345.1 890.4,362.5 890.6,377.0 890.7,396.1 890.9,412.9 891.1,433.9 891.2,454.8 891.4,483.4 891.4,491.9 891.6,463.3 891.7,440.7 891.9,418.9 892.1,402.6 892.2,383.2 892.4,369.8 892.6,352.7 892.7,341.7 892.9,324.2 893.1,325.7 893.2,324.1 893.4,325.2 893.6,323.4 893.7,325.6 893.9,321.3 894.1,322.6 894.2,318.1 894.4,323.0 894.6,320.9 894.7,324.1 894.9,323.5 895.1,326.4 895.2,321.7 895.4,324.2 895.6,319.1 895.7,321.4 895.9,320.5 896.1,324.6 896.2,323.0 896.4,326.9 896.6,324.0 896.7,326.1 896.9,322.2 897.1,325.2 897.2,320.7 897.4,324.3 897.6,319.6 897.7,323.9 897.9,319.7 898.1,322.3 898.2,318.4 898.4,322.1 898.6,319.8 898.7,322.1 898.9,318.7 899.1,322.3 899.2,321.6 899.4,323.5 899.6,322.0 899.7,324.4 899.9,321.7 900.1,325.5 900.2,321.9 900.4,326.3 900.6,322.7 900.7,324.6 900.9,322.3 901.1,325.0 901.2,320.5 901.4,324.7 901.6,320.8 901.7,321.9 901.9,320.2 902.1,324.6 902.2,321.6 902.4,327.0 902.6,336.7 902.7,354.1 902.9,365.5 903.1,382.6 903.2,396.6 903.4,415.2 903.6,432.5 903.7,453.9 903.9,479.2 903.9,470.3 904.1,445.1 904.2,424.0 904.4,407.4 904.6,389.4 904.7,375.4 904.9,358.1 905.1,347.2 905.2,331.0 905.4,326.9 905.6,323.4 905.7,327.3 905.9,322.3 906.1,326.4 906.2,322.6 906.4,325.2 906.6,324.3 906.7,327.6 906.9,325.6 907.1,327.9 907.2,324.1 907.4,325.7 907.6,321.4 907.7,325.1 907.9,321.6 908.1,325.7 908.2,323.5 908.4,328.4 908.6,323.1 908.7,326.2 908.9,323.0 909.1,324.9 909.2,321.3 909.4,323.7 909.6,322.6 909.7,326.6 909.9,325.1 910.1,328.9 910.2,325.3 910.4,327.4 910.6,321.5 910.7,325.1 910.9,320.5 911.1,324.9 911.2,321.1 911.4,324.5 911.6,320.4 911.7,325.7 911.9,324.1 912.1,326.8 912.2,324.5 912.4,327.8 912.6,326.0 912.7,328.3 912.9,326.4 913.1,328.4 913.2,326.1 913.4,328.4 913.6,325.3 913.7,328.5 913.9,325.9 914.1,328.8 914.2,325.7 914.4,328.9 914.6,326.0 914.7,328.8 914.9,330.8 915.1,346.7 915.2,359.0 915.4,376.6 915.6,389.7 915.7,407.9 915.9,425.2 916.1,446.9 916.2,471.1 916.3,488.1 916.4,468.0 916.6,444.4 916.7,426.0 916.9,407.1 917.1,390.5 917.2,372.0 917.4,358.7 917.6,341.9 917.7,330.0 917.9,324.1 918.1,325.2 918.2,322.7 918.4,327.4 918.6,325.1 918.7,327.5 918.9,326.3 919.1,327.6 919.2,324.6 919.4,327.7 919.6,323.7 919.7,327.4 919.9,323.1 920.1,327.8 920.2,326.3 920.4,328.0 920.6,324.9 920.7,326.9 920.9,323.4 921.1,325.7 921.2,324.3 921.4,327.2 921.6,323.2 921.7,326.0 921.9,322.5 922.1,324.4 922.2,322.1 922.4,323.9 922.6,320.2 922.7,324.4 922.9,321.2 923.1,324.8 923.2,323.4 923.4,328.1 923.6,325.3 923.7,327.6 923.9,325.0 924.1,329.7 924.2,326.9 924.4,329.3 924.6,326.1 924.7,329.2 924.9,325.5 925.1,328.2 925.2,325.8 925.4,328.5 925.6,325.3 925.7,328.8 925.9,324.6 926.1,325.7 926.2,322.0 926.4,325.2 926.6,321.7 926.7,325.4 926.9,321.0 927.1,324.5 927.2,322.4 927.4,338.1 927.6,350.2 927.7,367.9 927.9,380.8 928.1,398.1 928.2,412.2 928.4,431.6 928.6,450.5 928.7,478.7 928.8,482.9 928.9,454.1 929.1,433.7 929.2,414.2 929.4,399.3 929.6,381.6 929.7,369.2 929.9,352.5 930.1,340.9 930.2,325.6 930.4,326.0 930.6,323.3 930.7,323.8 930.9,321.1 931.1,325.3 931.2,323.0 931.4,327.2 931.6,324.2 931.7,327.8 931.9,325.2 932.1,326.8 932.2,325.2 932.4,326.1 932.6,322.3 932.7,324.5 932.9,321.4 933.1,323.5 933.2,320.2 933.4,324.2 933.6,319.6 933.7,324.2 933.9,319.3 934.1,323.5 934.2,320.1 934.4,325.2 934.6,322.7 934.7,325.5 934.9,323.7 935.1,328.3 935.2,326.3 935.4,329.2 935.6,323.5 935.7,325.6 935.9,321.1 936.1,322.2 936.2,319.7 936.4,323.2 936.6,320.1 936.7,323.7 936.9,320.0 937.1,323.7 937.2,323.6 937.4,327.3 937.6,324.9 937.7,327.1 937.9,322.7 938.1,324.0 938.2,321.7 938.4,323.0 938.6,320.0 938.7,322.3 938.9,321.4 939.1,322.9 939.2,320.4 939.4,325.6 939.6,323.4 939.7,328.7 939.9,341.5 940.1,359.6 940.2,373.2 940.4,391.3 940.6,407.1 940.7,426.3 940.9,445.7 941.1,470.2 941.2,495.6 941.2,482.2 941.4,455.0 941.6,432.6 941.7,414.3 941.9,395.0 942.1,379.3 942.2,361.7 942.4,349.1 942.6,333.2 942.7,328.8 942.9,326.2 943.1,329.1 943.2,326.0 943.4,328.2 943.6,324.9 943.7,327.8 943.9,324.7 944.1,328.8 944.2,325.3 944.4,327.0 944.6,325.7 944.7,328.9 944.9,325.0 945.1,328.7 945.2,325.0 945.4,327.0 945.6,323.6 945.7,326.7 945.9,322.9 946.1,326.5 946.2,325.1 946.4,328.6 946.6,324.5 946.7,327.2 946.9,322.5 947.1,324.2 947.2,320.7 947.4,323.9 947.6,321.8 947.7,325.6 947.9,324.6 948.1,327.0 948.2,324.0 948.4,327.9 948.6,323.5 948.7,327.2 948.9,325.7 949.1,328.7 949.2,326.0 949.4,329.3 949.6,326.1 949.7,328.5 949.9,326.3 950.1,327.2 950.2,323.9 950.4,326.9 950.6,322.7 950.7,326.7 950.9,322.5 951.1,326.5 951.2,324.3 951.4,326.6 951.6,324.5 951.7,327.2 951.9,324.8 952.1,328.0 952.2,333.2 952.4,349.9 952.6,362.4 952.7,378.8 952.9,392.6 953.1,410.0 953.2,427.1 953.4,449.1 953.6,474.1 953.6,488.3 953.7,465.7 953.9,442.5 954.1,423.7 954.2,404.8 954.4,389.0 954.6,370.9 954.7,358.1 954.9,340.6 955.1,328.2 955.2,321.6 955.4,323.9 955.6,321.6 955.7,324.1 955.9,320.4 956.1,324.8 956.2,321.3 956.4,324.2 956.6,323.6 956.7,327.9 956.9,325.5 957.1,328.6 957.2,325.7 957.4,328.1 957.6,325.9 957.7,329.8 957.9,327.1 958.1,328.8 958.2,325.1 958.4,328.1 958.6,325.2 958.7,327.4 958.9,324.1 959.1,326.4 959.2,323.5 959.4,327.7 959.6,323.9 959.7,329.0 959.9,325.9 960.1,328.7 960.2,326.1 960.4,329.6 960.6,326.2 960.7,329.3 960.9,327.1 961.1,329.9 961.2,327.8 961.4,331.6 961.6,327.6 961.7,330.3 961.9,325.3 962.1,327.2 962.2,323.6 962.4,327.3 962.6,322.6 962.7,326.4 962.9,322.3 963.1,325.7 963.2,323.4 963.4,326.5 963.6,322.7 963.7,326.5 963.9,324.2 964.1,327.8 964.2,324.8 964.4,327.9 964.6,324.7 964.7,341.9 964.9,353.2 965.1,371.6 965.2,384.2 965.4,401.9 965.6,417.2 965.7,437.9 965.9,458.7 966.1,490.9 966.1,489.0 966.2,457.7 966.4,436.2 966.6,415.7 966.7,400.3 966.9,381.4 967.1,367.8 967.2,349.8 967.4,337.5 967.6,323.9 967.7,326.1 967.9,323.5 968.1,326.4 968.2,323.7 968.4,328.4 968.6,325.3 968.7,327.8 968.9,327.3 969.1,329.8 969.2,325.9 969.4,328.3 969.6,326.3 969.7,326.9 969.9,325.1 970.1,327.1 970.2,323.5 970.4,324.4 970.6,322.2 970.7,325.6 970.9,323.5 971.1,326.6 971.2,323.0 971.4,326.5 971.6,322.6 971.7,323.4 971.9,320.9 972.1,322.3 972.2,320.2 972.4,321.3 972.6,318.5 972.7,322.1 972.9,320.2 973.1,325.5 973.2,322.4 973.4,326.1 973.6,323.4 973.7,326.8 973.9,322.2 974.1,325.1 974.2,322.0 974.4,326.0 974.6,322.7 974.7,325.9 974.9,323.7 975.1,326.2 975.2,323.5 975.4,325.8 975.6,321.3 975.7,325.6 975.9,324.0 976.1,326.4 976.2,323.8 976.4,327.2 976.6,324.9 976.7,328.3 976.9,324.8 977.1,331.0 977.2,344.1 977.4,361.2 977.6,374.9 977.7,392.8 977.9,408.0 978.1,427.4 978.2,446.4 978.4,470.8 978.5,493.1 978.6,476.7 978.7,451.6 978.9,429.6 979.1,412.1 979.2,393.0 979.4,378.8 979.6,361.0 979.7,349.4 979.9,332.4 980.1,330.4 980.2,327.8 980.4,330.9 980.6,328.0 980.7,330.9 980.9,327.2 981.1,330.4 981.2,327.1 981.4,328.3 981.6,325.7 981.7,328.3 981.9,326.2 982.1,328.5 982.2,325.8 982.4,330.0 982.6,326.3 982.7,329.1 982.9,328.2 983.1,330.5 983.2,328.0 983.4,330.0 983.6,325.9 983.7,329.4 983.9,324.6 984.1,329.1 984.2,325.6 984.4,329.8 984.6,327.8 984.7,329.0 984.9,326.0 985.1,329.2 985.2,325.0 985.4,328.3 985.6,326.4 985.7,331.3 985.9,328.7 986.1,331.7 986.2,327.8 986.4,331.3 986.6,325.8 986.7,329.7 986.9,325.6 987.1,328.8 987.2,327.7 987.4,331.8 987.6,330.3 987.7,333.1 987.9,329.3 988.1,332.0 988.2,327.9 988.4,329.6 988.6,327.1 988.7,330.8 988.9,328.5 989.1,332.1 989.2,329.3 989.4,331.3 989.6,336.5 989.7,352.2 989.9,362.3 990.1,380.5 990.2,393.9 990.4,410.9 990.6,428.0 990.7,449.1 990.9,473.7 990.9,484.2 991.1,460.6 991.2,438.6 991.4,422.2 991.6,404.2 991.7,389.8 991.9,373.6 992.1,360.6 992.2,343.5 992.4,332.5 992.6,328.6 992.7,330.3 992.9,326.7 993.1,331.9 993.2,330.5 993.4,333.6 993.6,332.3 993.7,334.9 993.9,331.0 994.1,333.3 994.2,329.2 994.4,332.0 994.6,329.0 994.7,332.3 994.9,328.1 995.1,330.2 995.2,326.8 995.4,329.7 995.6,326.8 995.7,329.9 995.9,326.7 996.1,331.1 996.2,328.1 996.4,332.3 996.6,329.1 996.7,332.0 996.9,329.7 997.1,331.3 997.2,328.7 997.4,330.3 997.6,328.1 997.7,332.0 997.9,329.4 998.1,333.2 998.2,331.6 998.4,333.7 998.6,332.0 998.7,335.4 998.9,332.8 999.1,336.4 999.2,332.3 999.4,336.9 999.6,333.0 999.7,334.3 999.9,330.8 1000.1,333.2 1000.2,328.7 1000.4,332.2 1000.6,328.1 1000.7,333.1 1000.9,330.0 1001.1,333.8 1001.2,330.2 1001.4,333.1 1001.6,330.0 1001.7,333.6 1001.9,329.2 1002.1,347.3 1002.2,359.1 1002.4,375.8 1002.6,389.6 1002.7,407.6 1002.9,422.7 1003.1,442.1 1003.2,462.4 1003.4,490.0 1003.4,484.0 1003.6,457.0 1003.7,437.6 1003.9,418.4 1004.1,403.2 1004.2,386.1 1004.4,374.1 1004.6,358.1 1004.7,346.4 1004.9,333.3 1005.1,336.1 1005.2,332.5 1005.4,333.0 1005.6,331.4 1005.7,334.7 1005.9,332.3 1006.1,336.2 1006.2,332.8 1006.4,335.7 1006.6,332.5 1006.7,334.6 1006.9,331.8 1007.1,335.3 1007.2,332.8 1007.4,335.8 1007.6,333.5 1007.7,336.9 1007.9,331.9 1008.1,335.0 1008.2,329.8 1008.4,331.6 1008.6,328.5 1008.7,332.7 1008.9,330.2 1009.1,333.8 1009.2,330.2 1009.4,333.8 1009.6,330.7 1009.7,333.7 1009.9,328.4 1010.1,332.0 1010.2,328.3 1010.4,333.4 1010.6,329.8 1010.7,331.8 1010.9,330.2 1011.1,332.7 1011.2,330.7 1011.4,332.5 1011.6,329.8 1011.7,332.5 1011.9,330.7 1012.1,334.0 1012.2,331.0 1012.4,333.4 1012.6,330.5 1012.7,332.3 1012.9,330.5 1013.1,333.5 1013.2,330.9 1013.4,333.9 1013.6,331.2 1013.7,335.6 1013.9,333.0 1014.1,335.4 1014.2,333.6 1014.4,342.0 1014.6,351.7 1014.7,369.6 1014.9,381.1 1015.1,398.9 1015.2,414.5 1015.4,432.6 1015.6,451.4 1015.7,475.8 1015.8,494.7 1015.9,476.3 1016.1,452.9 1016.2,432.4 1016.4,416.0 1016.6,398.2 1016.7,384.2 1016.9,366.7 1017.1,354.2 1017.2,336.9 1017.4,335.3 1017.6,332.1 1017.7,335.2 1017.9,333.3 1018.1,335.3 1018.2,333.0 1018.4,336.3 1018.6,333.6 1018.7,336.6 1018.9,334.6 1019.1,335.3 1019.2,331.2 1019.4,333.3 1019.6,329.9 1019.7,332.1 1019.9,329.3 1020.1,331.2 1020.2,329.8 1020.4,332.4 1020.6,328.8 1020.7,331.5 1020.9,328.8 1021.1,333.3 1021.2,329.3 1021.4,333.0 1021.6,330.5 1021.7,332.6 1021.9,331.2 1022.1,334.8 1022.2,332.0 1022.4,335.8 1022.6,331.7 1022.7,336.8 1022.9,334.0 1023.1,336.3 1023.2,333.1 1023.4,336.7 1023.6,333.8 1023.7,334.1 1023.9,331.2 1024.1,333.3 1024.2,330.3 1024.4,331.8 1024.6,328.9 1024.7,331.2 1024.9,328.1 1025.1,333.6 1025.2,331.0 1025.4,334.1 1025.6,332.8 1025.7,336.1 1025.9,334.7 1026.1,337.5 1026.2,334.2 1026.4,337.0 1026.6,334.3 1026.7,336.4 1026.9,340.1 1027.1,355.4 1027.2,366.4 1027.4,382.5 1027.6,396.0 1027.7,413.1 1027.9,428.6 1028.1,447.6 1028.2,471.3 1028.3,478.0 1028.4,453.4 1028.6,433.4 1028.7,417.0 1028.9,400.2 1029.1,386.7 1029.2,370.2 1029.4,359.1 1029.6,342.8 1029.7,334.3 1029.9,330.5 1030.1,333.5 1030.2,330.6 1030.4,335.4 1030.6,331.4 1030.7,335.3 1030.9,331.7 1031.1,335.5 1031.2,334.2 1031.4,337.2 1031.6,334.6 1031.7,338.8 1031.9,334.2 1032.1,337.8 1032.2,333.7 1032.4,337.1 1032.6,335.2 1032.7,336.6 1032.9,333.4 1033.1,336.8 1033.2,333.5 1033.4,334.4 1033.6,331.7 1033.7,334.1 1033.9,331.0 1034.1,336.1 1034.2,335.0 1034.4,338.4 1034.6,335.9 1034.7,338.5 1034.9,334.4 1035.1,336.5 1035.2,334.5 1035.4,336.4 1035.6,332.7 1035.7,336.3 1035.9,332.1 1036.1,335.3 1036.2,333.4 1036.4,334.8 1036.6,331.4 1036.7,333.1 1036.9,330.6 1037.1,335.3 1037.2,333.0 1037.4,337.0 1037.6,334.6 1037.7,337.7 1037.9,334.6 1038.1,338.3 1038.2,336.7 1038.4,338.9 1038.6,336.6 1038.7,340.8 1038.9,338.1 1039.1,340.4 1039.2,339.0 1039.4,354.4 1039.6,365.3 1039.7,381.5 1039.9,393.9 1040.1,409.0 1040.2,423.6 1040.4,442.8 1040.6,462.9 1040.7,487.7 1040.7,478.5 1040.9,453.6 1041.1,435.9 1041.2,418.3 1041.4,405.0 1041.6,388.4 1041.7,376.5 1041.9,360.7 1042.1,349.5 1042.2,337.5 1042.4,342.2 1042.6,338.1 1042.7,341.9 1042.9,337.7 1043.1,341.4 1043.2,336.8 1043.4,338.6 1043.6,333.0 1043.7,336.9 1043.9,335.4 1044.1,339.3 1044.2,336.2 1044.4,340.4 1044.6,336.3 1044.7,338.7 1044.9,336.2 1045.1,337.7 1045.2,334.8 1045.4,338.4 1045.6,335.5 1045.7,340.3 1045.9,336.7 1046.1,339.4 1046.2,337.9 1046.4,339.0 1046.6,336.1 1046.7,340.2 1046.9,334.7 1047.1,337.7 1047.2,333.7 1047.4,338.2 1047.6,336.9 1047.7,341.8 1047.9,338.5 1048.1,343.5 1048.2,340.0 1048.4,341.0 1048.6,338.9 1048.7,340.0 1048.9,338.2 1049.1,340.8 1049.2,338.3 1049.4,340.4 1049.6,337.5 1049.7,341.5 1049.9,340.3 1050.1,341.6 1050.2,340.0 1050.4,341.8 1050.6,339.3 1050.7,340.9 1050.9,338.5 1051.1,341.1 1051.2,336.9 1051.4,338.4 1051.6,334.4 1051.7,344.1 1051.9,353.3 1052.1,371.3 1052.2,382.5 1052.4,400.4 1052.6,415.5 1052.7,434.8 1052.9,453.5 1053.1,477.9 1053.2,493.6 1053.2,473.5 1053.4,451.8 1053.6,432.4 1053.7,417.8 1053.9,400.7 1054.1,387.1 1054.2,371.0 1054.4,359.7 1054.6,342.9 1054.7,340.5 1054.9,337.1 1055.1,341.0 1055.2,337.6 1055.4,340.4 1055.6,336.2 1055.7,341.3 1055.9,337.2 1056.1,340.0 1056.2,337.2 1056.4,341.1 1056.6,337.4 1056.7,341.3 1056.9,338.4 1057.1,341.3 1057.2,337.3 1057.4,338.4 1057.6,336.0 1057.7,337.3 1057.9,335.9 1058.1,338.6 1058.2,337.5 1058.4,340.7 1058.6,338.4 1058.7,341.8 1058.9,337.4 1059.1,340.1 1059.2,336.8 1059.4,339.3 1059.6,335.2 1059.7,338.5 1059.9,335.2 1060.1,337.7 1060.2,335.8 1060.4,337.6 1060.6,336.2 1060.7,337.9 1060.9,336.4 1061.1,338.3 1061.2,335.4 1061.4,337.7 1061.6,335.1 1061.7,338.7 1061.9,335.8 1062.1,339.0 1062.2,335.8 1062.4,340.1 1062.6,337.8 1062.7,340.4 1062.9,338.1 1063.1,340.9 1063.2,337.1 1063.4,338.6 1063.6,336.7 1063.7,339.1 1063.9,335.5 1064.1,336.7 1064.2,344.3 1064.4,360.9 1064.6,374.7 1064.7,392.7 1064.9,407.4 1065.1,426.8 1065.2,443.6 1065.4,465.3 1065.6,493.4 1065.6,496.8 1065.7,467.6 1065.9,446.0 1066.1,427.9 1066.2,409.2 1066.4,395.3 1066.6,377.7 1066.7,363.9 1066.9,346.6 1067.1,337.7 1067.2,334.6 1067.4,336.3 1067.6,335.2 1067.7,336.6 1067.9,334.0 1068.1,336.2 1068.2,334.4 1068.4,338.6 1068.6,336.5 1068.7,338.5 1068.9,336.7 1069.1,339.8 1069.2,336.0 1069.4,339.9 1069.6,336.6 1069.7,338.6 1069.9,334.6 1070.1,336.5 1070.2,331.5 1070.4,334.3 1070.6,331.0 1070.7,334.7 1070.9,331.5 1071.1,334.6 1071.2,331.7 1071.4,336.1 1071.6,332.6 1071.7,337.1 1071.9,335.4 1072.1,338.5 1072.2,332.7 1072.4,335.3 1072.6,331.6 1072.7,332.8 1072.9,330.7 1073.1,333.3 1073.2,330.7 1073.4,332.9 1073.6,331.4 1073.7,335.4 1073.9,334.1 1074.1,337.5 1074.2,333.9 1074.4,336.0 1074.6,333.6 1074.7,334.4 1074.9,331.9 1075.1,335.8 1075.2,333.3 1075.4,336.9 1075.6,334.2 1075.7,336.8 1075.9,335.9 1076.1,338.0 1076.2,334.2 1076.4,338.7 1076.6,337.2 1076.7,351.8 1076.9,363.3 1077.1,378.6 1077.2,390.3 1077.4,407.3 1077.6,422.8 1077.7,441.3 1077.9,462.0 1078.0,484.4 1078.1,472.4 1078.2,448.3 1078.4,430.6 1078.6,412.4 1078.7,397.5 1078.9,381.8 1079.1,369.8 1079.2,352.5 1079.4,341.3 1079.6,332.2 1079.7,334.0 1079.9,330.8 1080.1,332.2 1080.2,329.2 1080.4,333.2 1080.6,330.7 1080.7,332.2 1080.9,330.0 1081.1,333.3 1081.2,328.1 1081.4,331.6 1081.6,326.2 1081.7,330.4 1081.9,328.5 1082.1,330.5 1082.2,328.2 1082.4,331.5 1082.6,329.3 1082.7,330.6 1082.9,327.7 1083.1,331.7 1083.2,328.7 1083.4,331.0 1083.6,327.2 1083.7,330.1 1083.9,327.6 1084.1,330.9 1084.2,328.2 1084.4,333.4 1084.6,329.4 1084.7,332.6 1084.9,329.1 1085.1,330.8 1085.2,327.7 1085.4,331.1 1085.6,327.4 1085.7,333.8 1085.9,330.2 1086.1,335.3 1086.2,332.2 1086.4,336.4 1086.6,332.6 1086.7,336.2 1086.9,331.3 1087.1,333.5 1087.2,330.3 1087.4,332.4 1087.6,328.7 1087.7,330.1 1087.9,328.2 1088.1,329.5 1088.2,326.4 1088.4,331.6 1088.6,327.8 1088.7,332.5 1088.9,330.0 1089.1,341.9 1089.2,352.3 1089.4,368.5 1089.6,381.2 1089.7,397.3 1089.9,412.3 1090.1,430.7 1090.2,449.4 1090.4,474.2 1090.5,487.1 1090.6,464.3 1090.7,443.3 1090.9,423.4 1091.1,409.0 1091.2,391.2 1091.4,378.1 1091.6,361.2 1091.7,349.6 1091.9,330.8 1092.1,330.2 1092.2,328.1 1092.4,331.5 1092.6,329.7 1092.7,331.4 1092.9,328.5 1093.1,332.1 1093.2,328.6 1093.4,331.4 1093.6,328.0 1093.7,331.5 1093.9,330.6 1094.1,334.1 1094.2,330.8 1094.4,334.3 1094.6,330.4 1094.7,334.1 1094.9,329.5 1095.1,333.0 1095.2,328.1 1095.4,330.8 1095.6,327.6 1095.8,331.1 1095.9,328.5 1096.1,334.2 1096.3,333.3 1096.4,337.2 1096.6,336.4 1096.8,338.4 1096.9,334.8 1097.1,336.6 1097.3,333.8 1097.4,336.2 1097.6,331.3 1097.8,333.2 1097.9,329.2 1098.1,331.4 1098.3,329.8 1098.4,334.9 1098.6,332.5 1098.8,337.6 1098.9,333.0 1099.1,336.5 1099.3,332.1 1099.4,334.2 1099.6,330.2 1099.8,333.6 1099.9,332.3 1100.1,336.2 1100.3,332.6 1100.4,337.8 1100.6,333.9 1100.8,337.8 1100.9,335.5 1101.1,339.0 1101.3,335.0 1101.4,339.1 1101.6,334.4 1101.8,343.5 1101.9,354.0 1102.1,368.9 1102.3,382.2 1102.4,401.9 1102.6,421.3 1102.8,449.7 1102.9,457.1 1103.1,471.1 1103.3,471.8 1103.4,480.9 1103.6,482.2 1103.8,490.6 1103.9,498.5 1104.1,523.1 1104.2,530.9 1104.3,520.3 1104.4,507.4 1104.6,498.3 1104.8,505.0 1104.9,501.2 1105.1,505.1 1105.3,505.1 1105.4,505.1 1105.6,507.8 1105.8,510.7 1105.9,507.9 1106.1,513.8 1106.3,508.5 1106.4,511.6 1106.6,509.1 1106.8,511.6 1106.9,510.7 1107.1,513.0 1107.3,508.6 1107.4,513.5 1107.6,511.2 1107.8,514.6 1107.9,508.3 1108.1,513.8 1108.3,509.7 1108.4,513.9 1108.6,510.5 1108.8,514.8 1108.9,510.6 1109.1,513.0 1109.3,508.9 1109.4,513.9 1109.6,510.4 1109.8,514.9 1109.9,511.5 1110.1,515.8 1110.3,510.8 1110.4,515.0 1110.6,513.3 1110.8,515.7 1110.9,511.1 1111.1,514.8 1111.3,511.5 1111.4,514.3 1111.6,511.6 1111.8,515.3 1111.9,509.7 1112.1,513.8 1112.3,510.4 1112.4,513.8 1112.6,510.9 1112.8,513.9 1112.9,509.1 1113.1,514.7 1113.3,509.7 1113.4,516.7 1113.6,513.6 1113.8,516.4 1113.9,512.0 1114.1,514.6 1114.3,510.5 1114.4,513.0 1114.6,509.1 1114.8,512.0 1114.9,510.5 1115.1,514.0 1115.3,509.1 1115.4,513.0 1115.6,508.4 1115.8,514.5 1115.9,511.0 1116.1,514.8 1116.3,511.2 1116.4,514.8 1116.6,512.0 1116.8,514.6 1116.9,511.7 1117.1,513.7 1117.3,510.9 1117.4,514.3 1117.6,509.8 1117.8,513.4 1117.9,508.7 1118.1,513.9 1118.3,510.7 1118.4,514.7 1118.6,508.6 1118.8,514.4 1118.9,510.3 1119.1,514.6 1119.3,509.9 1119.4,512.9 1119.6,511.0 1119.8,515.2 1119.9,510.9 1120.1,516.1 1120.3,510.5 1120.4,516.1 1120.6,510.1 1120.8,514.7 1120.9,510.2 1121.1,513.7 1121.3,510.5 1121.4,513.9 1121.6,511.4 1121.8,515.0 1121.9,512.7 1122.1,515.1 1122.3,509.7 1122.4,512.8 1122.6,510.0 1122.8,513.6 1122.9,509.6 1123.1,512.6 1123.3,511.3 1123.4,516.3 1123.6,512.2 1123.8,514.8 1123.9,511.9 1124.1,516.7 1124.3,511.2 1124.4,515.5 1124.6,511.7 1124.8,514.7 1124.9,513.6 1125.1,515.1 1125.3,510.7 1125.4,513.1 1125.6,511.0 1125.8,514.3 1125.9,510.8 1126.1,512.8 1126.3,511.9 1126.4,513.7 1126.6,511.8 1126.8,515.3 1126.9,511.1 1127.1,514.8 1127.3,511.8 1127.4,515.3 1127.6,512.0 1127.8,515.1 1127.9,512.3 1128.1,514.8 1128.3,511.0 1128.4,514.9 1128.6,511.6 1128.8,514.4 1128.9,511.5 1129.1,514.2 1129.3,510.5 1129.4,515.2 1129.6,510.0 1129.8,516.3 1129.9,511.7 1130.1,515.7 1130.3,512.1 1130.4,514.5 1130.6,511.0 1130.8,515.7 1130.9,511.6 1131.1,515.2 1131.3,511.7 1131.4,515.6 1131.6,512.7 1131.8,516.0 1131.9,511.0 1132.1,513.5 1132.3,509.7 1132.4,511.3 1132.6,510.3 1132.8,514.2 1132.9,510.7 1133.1,513.2 1133.3,509.3 1133.4,512.1 1133.6,508.4 1133.8,512.4 1133.9,508.2 1134.1,513.4 1134.3,509.9 1134.4,514.2 1134.6,509.5 1134.8,512.9 1134.9,510.3 1135.1,514.3 1135.3,509.9 1135.4,512.8 1135.6,509.5 1135.8,514.3 1135.9,508.2 1136.1,513.1 1136.3,509.0 1136.4,514.9 1136.6,509.8 1136.8,513.5 1136.9,508.7 1137.1,510.4 1137.3,508.4 1137.4,509.1 1137.6,504.7 1137.8,508.0 1137.9,503.2 1138.1,508.7 1138.3,503.2 1138.4,504.5 1138.6,497.7 1138.8,506.7 1138.9,519.3 1139.0,526.1 1139.1,516.2 1139.3,493.0 1139.4,488.9 1139.6,479.8 1139.8,479.0 1139.9,472.8 1140.1,467.4 1140.3,486.2 1140.4,438.0 1140.6,406.9 1140.8,387.6 1140.9,367.3 1141.1,355.2 1141.3,339.4 1141.4,328.9 1141.6,320.3 1141.8,322.6 1141.9,318.2 1142.1,320.1 1142.3,317.2 1142.4,321.2 1142.6,320.0 1142.8,323.3 1142.9,320.1 1143.1,323.1 1143.3,318.4 1143.4,321.9 1143.6,317.4 1143.8,320.2 1143.9,317.3 1144.1,320.7 1144.3,316.4 1144.4,320.3 1144.6,318.7 1144.8,323.3 1144.9,321.2 1145.1,324.3 1145.3,319.8 1145.4,322.9 1145.6,318.6 1145.8,319.5 1145.9,316.9 1146.1,320.8 1146.3,319.1 1146.4,321.7 1146.6,320.3 1146.8,323.4 1146.9,319.1 1147.1,323.9 1147.3,319.7 1147.4,322.3 1147.6,320.2 1147.8,324.0 1147.9,321.0 1148.1,322.4 1148.3,320.3 1148.4,321.5 1148.6,319.5 1148.8,322.0 1148.9,319.8 1149.1,322.9 1149.3,319.5 1149.4,321.8 1149.6,320.7 1149.8,323.3 1149.9,321.0 1150.1,324.1 1150.3,322.4 1150.4,324.6 1150.6,322.3 1150.8,324.8 1150.9,323.2 1151.1,327.1 1151.3,327.9 1151.4,344.4 1151.6,357.4 1151.8,374.9 1151.9,391.6 1152.1,410.9 1152.3,429.7 1152.4,452.0 1152.6,477.0 1152.7,496.6 1152.8,476.7 1152.9,450.3 1153.1,429.4 1153.3,408.1 1153.4,392.3 1153.6,373.3 1153.8,359.9 1153.9,342.5 1154.1,331.0 1154.3,321.4 1154.4,323.6 1154.6,320.9 1154.8,323.2 1154.9,320.9 1155.1,323.0 1155.3,320.7 1155.4,323.8 1155.6,319.7 1155.8,322.2 1155.9,319.9 1156.1,321.1 1156.3,316.7 1156.4,320.2 1156.6,316.5 1156.8,319.9 1156.9,315.6 1157.1,319.5 1157.3,314.3 1157.4,318.5 1157.6,314.1 1157.8,316.7 1157.9,315.3 1158.1,318.5 1158.3,315.2 1158.4,319.5 1158.6,315.3 1158.8,318.4 1158.9,316.5 1159.1,319.3 1159.3,317.0 1159.4,318.6 1159.6,315.5 1159.8,317.1 1159.9,313.4 1160.1,317.0 1160.3,314.2 1160.4,317.2 1160.6,315.1 1160.8,320.2 1160.9,315.0 1161.1,318.2 1161.3,313.9 1161.4,317.1 1161.6,313.0 1161.8,317.9 1161.9,316.7 1162.1,318.8 1162.3,317.4 1162.4,320.8 1162.6,316.5 1162.8,317.8 1162.9,314.7 1163.1,318.8 1163.3,316.0 1163.4,320.2 1163.6,320.2 1163.8,333.5 1163.9,344.9 1164.1,361.8 1164.3,374.9 1164.4,393.5 1164.6,410.3 1164.8,430.7 1164.9,452.1 1165.1,481.0 1165.1,487.9 1165.3,458.7 1165.4,436.7 1165.6,416.3 1165.8,399.5 1165.9,382.2 1166.1,369.0 1166.3,350.1 1166.4,338.5 1166.6,321.0 1166.8,325.7 1166.9,321.0 1167.1,325.2 1167.3,321.6 1167.4,324.7 1167.6,320.9 1167.8,324.1 1167.9,319.4 1168.1,322.2 1168.3,318.8 1168.4,323.7 1168.6,320.8 1168.8,324.9 1168.9,322.2 1169.1,324.5 1169.3,321.6 1169.4,325.6 1169.6,322.1 1169.8,325.3 1169.9,321.5 1170.1,325.9 1170.3,322.7 1170.4,325.8 1170.6,320.9 1170.8,324.6 1170.9,319.4 1171.1,322.5 1171.3,318.2 1171.4,322.9 1171.6,321.8 1171.8,325.5 1171.9,322.7 1172.1,327.7 1172.3,324.5 1172.4,325.7 1172.6,323.5 1172.8,326.3 1172.9,322.9 1173.1,325.4 1173.3,322.2 1173.4,323.8 1173.6,320.4 1173.8,323.8 1173.9,321.7 1174.1,324.6 1174.3,321.7 1174.4,324.2 1174.6,321.6 1174.8,324.3 1174.9,320.8 1175.1,323.8 1175.3,320.3 1175.4,322.0 1175.6,318.5 1175.8,322.5 1175.9,318.7 1176.1,324.7 1176.3,336.5 1176.4,353.2 1176.6,365.6 1176.8,382.6 1176.9,397.3 1177.1,416.8 1177.3,434.8 1177.4,457.4 1177.5,482.7 1177.6,472.0 1177.8,446.2 1177.9,425.1 1178.1,407.5 1178.3,390.1 1178.4,376.3 1178.6,359.3 1178.8,347.7 1178.9,330.1 1179.1,324.0 1179.3,319.3 1179.4,322.6 1179.6,319.3 1179.8,322.0 1179.9,319.4 1180.1,324.3 1180.3,320.8 1180.4,323.8 1180.6,323.1 1180.8,325.2 1180.9,322.3 1181.1,325.6 1181.3,323.3 1181.4,325.5 1181.6,323.2 1181.8,325.9 1181.9,322.0 1182.1,325.5 1182.3,324.3 1182.4,327.3 1182.6,322.2 1182.8,325.8 1182.9,322.2 1183.1,324.9 1183.3,320.1 1183.4,321.9 1183.6,318.4 1183.8,322.3 1183.9,319.2 1184.1,322.9 1184.3,319.4 1184.4,323.4 1184.6,321.7 1184.8,322.9 1184.9,319.4 1185.1,321.5 1185.3,319.7 1185.4,320.9 1185.6,319.7 1185.8,323.1 1185.9,321.3 1186.1,325.8 1186.3,321.8 1186.4,325.2 1186.6,319.3 1186.8,321.6 1186.9,319.0 1187.1,322.9 1187.3,320.4 1187.4,324.6 1187.6,321.7 1187.8,324.1 1187.9,320.5 1188.1,322.6 1188.3,318.8 1188.4,320.6 1188.6,324.3 1188.8,342.9 1188.9,355.7 1189.1,372.6 1189.3,388.1 1189.4,407.0 1189.6,424.0 1189.8,445.9 1189.9,470.4 1190.0,486.6 1190.1,464.8 1190.3,440.2 1190.4,420.2 1190.6,400.6 1190.8,384.9 1190.9,366.7 1191.1,353.3 1191.3,335.7 1191.4,323.1 1191.6,316.1 1191.8,318.9 1191.9,316.2 1192.1,319.4 1192.3,318.5 1192.4,320.7 1192.6,319.3 1192.8,324.3 1192.9,319.9 1193.1,322.1 1193.3,316.0 1193.4,318.0 1193.6,311.7 1193.8,317.2 1193.9,315.6 1194.1,319.7 1194.3,319.7 1194.4,321.4 1194.6,318.8 1194.8,319.2 1194.9,315.4 1195.1,316.6 1195.3,312.8 1195.4,316.0 1195.6,312.7 1195.8,317.3 1195.9,314.3 1196.1,317.0 1196.3,314.8 1196.4,316.5 1196.6,315.6 1196.8,318.3 1196.9,318.0 1197.1,319.9 1197.3,318.3 1197.4,323.3 1197.6,319.1 1197.8,322.2 1197.9,321.5 1198.1,324.4 1198.3,319.9 1198.4,321.3 1198.6,317.2 1198.8,319.7 1198.9,316.8 1199.1,318.9 1199.3,317.8 1199.4,320.6 1199.6,316.8 1199.8,321.4 1199.9,321.9 1200.1,326.2 1200.3,325.5 1200.4,327.7 1200.6,323.5 1200.8,324.7 1200.9,321.8 1201.1,335.0 1201.3,348.2 1201.4,367.0 1201.6,382.3 1201.8,402.0 1201.9,417.9 1202.1,438.2 1202.3,459.1 1202.4,490.1 1202.4,492.5 1202.6,460.7 1202.8,439.5 1202.9,419.4 1203.1,403.3 1203.3,384.7 1203.4,371.2 1203.6,352.5 1203.8,339.4 1203.9,321.7 1204.1,324.4 1204.3,322.8 1204.4,324.6 1204.6,323.2 1204.8,325.0 1204.9,322.5 1205.1,327.3 1205.3,324.3 1205.4,328.5 1205.6,326.1 1205.8,328.8 1205.9,325.8 1206.1,329.7 1206.3,327.4 1206.4,330.6 1206.6,326.1 1206.8,330.8 1206.9,326.6 1207.1,329.3 1207.3,325.8 1207.4,329.5 1207.6,327.4 1207.8,329.8 1207.9,328.3 1208.1,331.4 1208.3,329.5 1208.4,333.8 1208.6,331.4 1208.8,333.9 1208.9,331.8 1209.1,334.2 1209.3,329.7 1209.4,334.2 1209.6,331.1 1209.8,334.1 1209.9,332.4 1210.1,336.1 1210.3,331.0 1210.4,334.0 1210.6,329.7 1210.8,331.4 1210.9,330.5 1211.1,333.6 1211.3,331.3 1211.4,333.0 1211.6,331.6 1211.8,336.0 1211.9,333.4 1212.1,338.9 1212.3,335.4 1212.4,339.2 1212.6,337.7 1212.8,339.7 1212.9,338.3 1213.1,340.0 1213.3,336.5 1213.4,340.3 1213.6,336.8 1213.8,348.0 1213.9,358.5 1214.1,375.6 1214.3,389.2 1214.4,409.3 1214.6,430.4 1214.8,461.5 1214.9,473.8 1215.1,513.2 1215.2,529.3 1215.3,515.8 1215.4,492.8 1215.6,484.3 1215.8,490.1 1215.9,490.3 1216.1,498.3 1216.3,497.3 1216.4,502.4 1216.6,500.9 1216.8,507.5 1216.9,501.6 1217.1,508.4 1217.3,506.0 1217.4,509.3 1217.6,506.8 1217.8,509.7 1217.9,507.8 1218.1,511.6 1218.3,506.8 1218.4,513.7 1218.6,508.2 1218.8,514.3 1218.9,510.1 1219.1,514.4 1219.3,508.2 1219.4,513.6 1219.6,508.2 1219.8,511.9 1219.9,510.2 1220.1,513.6 1220.3,511.0 1220.4,512.7 1220.6,508.8 1220.8,515.9 1220.9,510.6 1221.1,514.6 1221.3,513.6 1221.4,516.8 1221.6,512.3 1221.8,516.9 1221.9,515.0 1222.1,517.6 1222.3,512.0 1222.4,514.7 1222.6,511.0 1222.8,513.1 1222.9,509.4 1223.1,514.1 1223.3,509.0 1223.4,513.0 1223.6,509.8 1223.8,514.3 1223.9,511.6 1224.1,515.0 1224.3,511.1 1224.4,515.6 1224.6,513.4 1224.8,516.0 1224.9,513.4 1225.1,514.3 1225.3,512.5 1225.4,514.1 1225.6,510.3 1225.8,512.5 1225.9,512.0 1226.1,516.7 1226.3,512.7 1226.4,518.8 1226.6,513.2 1226.8,517.8 1226.9,511.8 1227.1,515.3 1227.3,512.7 1227.4,514.1 1227.6,510.3 1227.8,515.1 1227.9,511.3 1228.1,513.1 1228.3,509.6 1228.4,514.5 1228.6,509.9 1228.8,514.2 1228.9,509.2 1229.1,512.4 1229.3,510.6 1229.4,514.2 1229.6,508.9 1229.8,513.2 1229.9,511.3 1230.1,513.5 1230.3,511.4 1230.4,513.1 1230.6,510.0 1230.8,512.3 1230.9,508.5 1231.1,512.2 1231.3,510.2 1231.4,513.4 1231.6,511.1 1231.8,513.0 1231.9,511.9 1232.1,513.3 1232.3,510.7 1232.4,513.9 1232.6,511.4 1232.8,516.1 1232.9,511.0 1233.1,514.5 1233.3,511.5 1233.4,514.5 1233.6,511.3 1233.8,513.1 1233.9,511.4 1234.1,513.5 1234.3,511.8 1234.4,514.5 1234.6,512.6 1234.8,515.5 1234.9,512.1 1235.1,514.8 1235.3,510.4 1235.4,514.4 1235.6,510.0 1235.8,515.1 1235.9,510.7 1236.1,513.4 1236.3,511.5 1236.4,514.2 1236.6,510.1 1236.8,512.6 1236.9,510.4 1237.1,512.3 1237.3,508.6 1237.4,513.4 1237.6,509.0 1237.8,514.8 1237.9,511.1 1238.1,513.6 1238.3,509.8 1238.4,514.1 1238.6,511.1 1238.8,516.6 1238.9,512.1 1239.1,515.8 1239.3,510.8 1239.4,516.4 1239.6,510.2 1239.8,515.2 1239.9,511.5 1240.1,513.2 1240.3,512.1 1240.4,515.6 1240.6,510.7 1240.8,515.8 1240.9,510.0 1241.1,514.5 1241.3,510.5 1241.4,512.4 1241.6,501.4 1241.6,499.5 1241.8,509.2 1241.9,508.8 1242.1,514.6 1242.3,510.2 1242.4,513.6 1242.6,509.2 1242.8,514.8 1242.9,509.2 1243.1,513.3 1243.3,510.5 1243.4,513.3 1243.6,508.1 1243.8,514.3 1243.9,510.2 1244.1,515.1 1244.3,513.3 1244.4,518.3 1244.6,512.3 1244.8,516.0 1244.9,509.7 1245.1,513.1 1245.3,509.7 1245.4,515.1 1245.6,511.6 1245.8,515.9 1245.9,511.5 1246.1,517.0 1246.3,510.8 1246.4,515.4 1246.6,511.4 1246.8,515.7 1246.9,510.7 1247.1,514.6 1247.3,511.6 1247.4,514.4 1247.6,510.4 1247.8,515.4 1247.9,512.3 1248.1,513.5 1248.3,512.2 1248.4,515.6 1248.6,511.3 1248.8,515.7 1248.9,513.2 1249.1,515.2 1249.3,510.1 1249.4,513.1 1249.6,509.6 1249.8,512.7 1249.9,510.7 1250.1,515.0 1250.3,511.2 1250.4,515.2 1250.6,510.5 1250.8,513.2 1250.9,510.6 1251.1,514.0 1251.3,509.4 1251.4,515.8 1251.6,512.5 1251.8,515.2 1251.9,513.3 1252.1,514.8 1252.3,512.1 1252.4,515.9 1252.6,510.3 1252.8,515.5 1252.9,512.7 1253.1,515.2 1253.3,512.9 1253.4,515.0 1253.6,511.6 1253.8,515.4 1253.9,512.5 1254.1,514.7 1254.3,510.8 1254.4,516.3 1254.6,512.2 1254.8,516.0 1254.9,513.0 1255.1,516.4 1255.3,512.8 1255.4,515.1 1255.6,509.5 1255.8,515.1 1255.9,512.7 1256.1,514.2 1256.3,511.3 1256.4,515.0 1256.6,512.3 1256.8,516.1 1256.9,511.4 1257.1,514.9 1257.3,511.3 1257.4,516.7 1257.6,512.0 1257.8,515.4 1257.9,511.5 1258.1,516.9 1258.3,511.8 1258.4,515.7 1258.6,511.0 1258.8,513.4 1258.9,511.1 1259.1,513.6 1259.3,508.6 1259.4,514.8 1259.6,508.9 1259.8,512.2 1259.9,510.7 1260.1,514.1 1260.3,508.4 1260.4,513.1 1260.6,511.1 1260.8,514.0 1260.9,507.3 1261.1,512.5 1261.3,509.8 1261.4,510.8 1261.6,506.5 1261.8,513.0 1261.9,505.5 1262.1,508.4 1262.3,502.9 1262.4,506.1 1262.6,502.0 1262.8,505.1 1262.9,501.4 1263.1,503.4 1263.3,511.9 1263.4,521.2 1263.4,517.7 1263.6,501.4 1263.8,493.1 1263.9,482.5 1264.1,481.5 1264.3,471.5 1264.4,472.6 1264.6,461.2 1264.8,452.6 1264.9,419.9 1265.1,398.3 1265.3,377.8 1265.4,364.3 1265.6,349.0 1265.8,339.3 1265.9,328.6 1266.1,330.9 1266.3,326.6 1266.4,326.2 1266.6,322.1 1266.8,322.4 1266.9,318.8 1267.1,323.2 1267.3,320.7 1267.4,324.8 1267.6,321.9 1267.8,328.5 1267.9,326.7 1268.1,330.5 1268.3,328.7 1268.4,331.9 1268.6,327.0 1268.8,329.1 1268.9,325.4 1269.1,333.5 1269.3,342.0 1269.3,343.9 1269.4,336.6 1269.6,325.5 1269.8,326.9 1269.9,322.6 1270.1,325.6 1270.3,320.7 1270.4,322.4 1270.6,319.9 1270.8,323.4 1270.9,322.2 1271.1,324.6 1271.3,324.2 1271.4,327.6 1271.6,323.9 1271.8,328.4 1271.9,325.6 1272.1,328.5 1272.3,326.6 1272.4,328.6 1272.6,325.3 1272.8,329.3 1272.9,325.0 1273.1,326.5 1273.3,322.1 1273.4,323.2 1273.6,321.7 1273.8,321.8 1273.9,314.8 1274.0,313.3 1274.1,321.5 1274.3,326.2 1274.4,327.9 1274.6,324.7 1274.8,327.2 1274.9,323.1 1275.1,325.4 1275.3,323.9 1275.4,326.1 1275.6,323.7 1275.8,326.5 1275.9,327.6 1276.1,332.1 1276.3,331.4 1276.4,336.2 1276.6,333.6 1276.8,333.8 1276.9,330.3 1277.1,330.7 1277.3,327.0 1277.4,328.9 1277.6,325.7 1277.8,328.5 1277.9,325.5 1278.1,328.9 1278.3,327.3 1278.4,333.1 1278.6,330.5 1278.8,334.6 1278.9,328.7 1279.1,329.5 1279.3,324.6 1279.4,327.0 1279.6,325.5 1279.8,331.6 1279.9,330.8 1280.1,335.8 1280.3,332.6 1280.4,333.9 1280.6,328.7 1280.8,330.1 1280.9,324.0 1281.1,316.2 1281.3,304.3 1281.3,303.6 1281.4,316.3 1281.6,322.7 1281.8,327.8 1281.9,326.4 1282.1,330.0 1282.3,326.7 1282.4,330.9 1282.6,327.0 1282.8,328.7 1282.9,325.8 1283.1,327.7 1283.3,324.0 1283.4,327.9 1283.6,324.9 1283.8,327.9 1283.9,324.5 1284.1,326.1 1284.3,323.7 1284.4,325.0 1284.6,315.6 1284.8,312.2 1284.8,306.8 1284.9,312.5 1285.1,324.9 1285.3,331.8 1285.4,337.3 1285.6,332.1 1285.8,333.9 1285.9,328.0 1286.1,331.0 1286.3,326.0 1286.4,328.0 1286.6,323.2 1286.8,324.7 1286.9,321.4 1287.1,326.2 1287.3,325.6 1287.4,339.9 1287.6,354.0 1287.6,358.4 1287.8,348.6 1287.9,331.6 1288.1,332.5 1288.3,329.9 1288.4,333.6 1288.6,330.5 1288.8,331.5 1288.9,328.6 1289.1,331.0 1289.3,328.0 1289.4,331.0 1289.6,328.0 1289.8,330.4 1289.9,327.6 1290.1,331.9 1290.3,328.8 1290.4,331.7 1290.6,330.3 1290.8,330.0 1290.9,320.9 1291.1,314.9 1291.1,316.7 1291.3,319.5 1291.4,323.5 1291.6,322.3 1291.8,332.6 1291.9,344.2 1292.0,348.7 1292.1,343.5 1292.3,332.4 1292.4,333.2 1292.6,331.9 1292.8,334.0 1292.9,332.1 1293.1,333.5 1293.3,329.1 1293.4,331.1 1293.6,328.1 1293.8,330.8 1293.9,327.5 1294.1,328.5 1294.3,325.2 1294.4,330.1 1294.6,327.1 1294.8,329.6 1294.9,327.6 1295.1,330.3 1295.3,328.0 1295.4,333.0 1295.6,329.3 1295.8,333.1 1295.9,329.4 1296.1,333.0 1296.3,326.0 1296.4,319.3 1296.5,314.1 1296.6,318.7 1296.8,328.4 1296.9,327.0 1297.1,331.3 1297.3,329.0 1297.4,332.4 1297.6,330.6 1297.8,332.5 1297.9,330.3 1298.1,332.0 1298.3,328.8 1298.4,333.0 1298.6,330.8 1298.8,333.0 1298.9,330.0 1299.1,331.8 1299.3,326.6 1299.4,328.4 1299.6,325.1 1299.8,328.2 1299.9,326.0 1300.1,328.4 1300.3,326.8 1300.4,330.1 1300.6,328.2 1300.8,330.6 1300.9,321.3 1301.1,303.5 1301.2,289.9 1301.3,304.4 1301.4,324.4 1301.6,327.4 1301.8,328.5 1301.9,326.0 1302.1,327.8 1302.3,325.8 1302.4,329.1 1302.6,326.6 1302.8,331.1 1302.9,328.7 1303.1,332.3 1303.3,332.7 1303.4,335.9 1303.6,333.9 1303.8,338.4 1303.9,337.1 1304.1,340.2 1304.3,337.9 1304.4,341.9 1304.6,339.8 1304.8,343.0 1304.9,339.8 1305.1,342.0 1305.3,339.1 1305.4,340.5 1305.6,335.2 1305.8,338.7 1305.9,332.5 1306.1,335.7 1306.3,331.1 1306.4,333.5 1306.6,331.0 1306.8,334.6 1306.9,332.6 1307.1,333.7 1307.3,324.3 1307.4,317.3 1307.4,320.7 1307.6,326.7 1307.8,332.7 1307.9,332.3 1308.1,336.4 1308.3,335.4 1308.4,339.9 1308.6,336.3 1308.8,340.7 1308.9,338.3 1309.1,341.2 1309.3,337.8 1309.4,341.4 1309.6,338.9 1309.8,339.3 1309.9,322.1 1310.0,310.0 1310.1,319.4 1310.3,333.0 1310.4,342.4 1310.6,338.3 1310.8,342.0 1310.9,336.0 1311.1,336.3 1311.3,331.9 1311.4,331.5 1311.6,327.8 1311.8,332.0 1311.9,329.5 1312.1,333.5 1312.3,330.9 1312.4,332.1 1312.6,328.8 1312.8,330.8 1312.9,328.0 1313.1,346.3 1313.3,360.1 1313.4,377.3 1313.6,392.4 1313.8,410.1 1313.9,424.3 1314.1,442.8 1314.3,463.1 1314.4,487.4 1314.4,476.6 1314.6,450.7 1314.8,431.7 1314.9,412.4 1315.1,397.2 1315.3,379.5 1315.4,366.8 1315.6,352.9 1315.8,343.6 1315.9,333.3 1316.1,337.6 1316.3,332.4 1316.4,335.2 1316.6,331.8 1316.8,334.3 1316.9,332.3 1317.1,336.7 1317.3,333.7 1317.4,337.6 1317.6,330.8 1317.8,334.2 1317.9,331.6 1318.1,333.1 1318.3,331.7 1318.4,333.9 1318.6,330.8 1318.8,333.2 1318.9,330.9 1319.1,332.3 1319.3,329.4 1319.4,331.1 1319.6,327.3 1319.8,328.7 1319.9,327.8 1320.1,332.2 1320.3,330.3 1320.4,334.9 1320.6,329.9 1320.8,333.9 1320.9,329.5 1321.1,331.5 1321.3,328.4 1321.4,331.6 1321.6,327.2 1321.8,329.7 1321.9,328.7 1322.1,330.1 1322.3,328.4 1322.4,332.1 1322.6,327.7 1322.8,331.0 1322.9,327.8 1323.1,330.4 1323.3,328.5 1323.4,331.3 1323.6,329.9 1323.8,334.1 1323.9,330.6 1324.1,335.7 1324.3,331.8 1324.4,335.4 1324.6,333.0 1324.8,335.1 1324.9,331.3 1325.1,333.0 1325.3,327.0 1325.4,327.5 1325.6,322.3 1325.8,322.7 1325.9,323.2 1326.1,326.6 1326.3,327.0 1326.4,329.9 1326.6,328.1 1326.8,333.4 1326.9,329.2 1327.1,333.6 1327.3,330.5 1327.4,333.1 1327.6,329.2 1327.8,332.2 1327.9,328.6 1328.1,328.4 1328.3,321.9 1328.4,316.5 1328.4,319.9 1328.6,327.4 1328.8,336.5 1328.9,330.2 1329.1,332.5 1329.3,325.7 1329.4,326.3 1329.6,324.2 1329.8,328.0 1329.9,325.3 1330.1,330.1 1330.3,326.8 1330.4,331.8 1330.6,328.8 1330.8,332.4 1330.9,331.5 1331.1,331.3 1331.3,327.0 1331.4,327.0 1331.6,323.5 1331.8,325.4 1331.9,325.3 1332.1,330.1 1332.3,326.8 1332.4,331.4 1332.6,330.1 1332.8,334.3 1332.9,333.4 1333.1,331.8 1333.3,324.3 1333.4,320.5 1333.4,323.6 1333.6,324.6 1333.8,325.9 1333.9,321.1 1334.1,324.6 1334.3,322.1 1334.4,324.5 1334.6,320.5 1334.8,326.5 1334.9,324.5 1335.1,329.8 1335.3,328.3 1335.4,333.4 1335.6,329.2 1335.8,331.4 1335.9,327.7 1336.1,330.3 1336.3,325.9 1336.4,328.6 1336.6,324.9 1336.8,326.6 1336.9,323.1 1337.1,326.1 1337.3,323.3 1337.4,325.7 1337.6,323.4 1337.8,327.3 1337.9,336.6 1338.1,354.7 1338.3,368.2 1338.4,386.2 1338.6,399.6 1338.8,417.8 1338.9,434.4 1339.1,455.2 1339.3,484.2 1339.3,485.3 1339.4,455.5 1339.6,433.2 1339.8,415.6 1339.9,395.8 1340.1,382.2 1340.3,365.3 1340.4,353.8 1340.6,337.9 1340.8,328.9 1340.9,324.9 1341.1,327.5 1341.3,324.0 1341.4,327.2 1341.6,322.7 1341.8,320.4 1341.9,314.1 1342.1,308.4 1342.1,310.5 1342.3,315.9 1342.4,322.1 1342.6,321.6 1342.8,325.8 1342.9,323.4 1343.1,326.0 1343.3,324.3 1343.4,326.5 1343.6,325.3 1343.8,328.9 1343.9,324.8 1344.1,328.4 1344.3,327.0 1344.4,329.7 1344.6,323.0 1344.8,324.0 1344.9,319.3 1345.1,321.3 1345.3,316.3 1345.4,316.2 1345.5,314.9 1345.6,316.3 1345.8,319.5 1345.9,319.6 1346.1,323.1 1346.3,320.9 1346.4,325.1 1346.6,322.9 1346.8,327.4 1346.9,325.2 1347.1,330.3 1347.3,326.9 1347.4,331.8 1347.6,329.7 1347.8,332.4 1347.9,331.2 1348.1,333.4 1348.3,330.4 1348.4,331.2 1348.6,325.9 1348.8,327.8 1348.9,325.6 1349.1,331.1 1349.3,339.9 1349.4,353.3 1349.6,362.4 1349.8,376.0 1349.9,385.9 1350.1,400.0 1350.3,411.0 1350.4,425.3 1350.6,439.2 1350.8,455.4 1350.9,472.9 1351.1,497.0 1351.3,497.0 1351.4,497.0 1351.6,497.0 1351.7,497.0 1351.8,497.0 1351.9,497.0 1352.1,497.0 1352.3,497.0 1352.4,479.5 1352.6,460.7 1352.8,445.1 1352.9,429.3 1353.1,417.4 1353.3,402.1 1353.4,391.6 1353.6,377.5 1353.8,367.7 1353.9,355.1 1354.1,346.2 1354.3,333.7 1354.4,331.5 1354.6,328.8 1354.8,330.7 1354.9,327.6 1355.1,330.3 1355.3,327.5 1355.4,331.9 1355.6,328.6 1355.8,331.3 1355.9,329.8 1356.1,333.0 1356.3,328.4 1356.4,331.3 1356.6,328.6 1356.8,331.5 1356.9,330.1 1357.1,332.4 1357.3,330.8 1357.4,334.4 1357.6,330.6 1357.8,334.6 1357.9,332.9 1358.1,334.9 1358.3,331.2 1358.4,333.5 1358.6,331.0 1358.8,333.8 1358.9,332.1 1359.1,334.2 1359.3,333.0 1359.4,335.8 1359.6,333.8 1359.8,337.9 1359.9,333.9 1360.1,338.5 1360.3,334.4 1360.4,337.2 1360.6,333.8 1360.8,335.7 1360.9,332.0 1361.1,334.2 1361.3,330.7 1361.4,333.6 1361.6,328.8 1361.8,334.4 1361.9,331.2 1362.1,335.6 1362.3,335.1 1362.4,336.0 1362.6,332.9 1362.8,343.1 1362.9,352.0 1363.1,369.4 1363.3,381.3 1363.4,398.9 1363.6,414.2 1363.8,432.2 1363.9,449.7 1364.1,473.5 1364.1,484.4 1364.3,461.3 1364.4,440.7 1364.6,421.0 1364.8,406.6 1364.9,389.4 1365.1,377.1 1365.3,360.5 1365.4,350.9 1365.6,334.1 1365.8,336.2 1365.9,332.7 1366.1,336.0 1366.3,333.3 1366.4,337.1 1366.6,336.3 1366.8,339.6 1366.9,334.7 1367.1,336.8 1367.3,332.7 1367.4,336.7 1367.6,333.1 1367.8,335.9 1367.9,333.2 1368.1,336.2 1368.3,334.7 1368.4,335.4 1368.6,331.0 1368.8,334.7 1368.9,329.1 1369.1,333.2 1369.3,331.1 1369.4,333.9 1369.6,332.9 1369.8,336.6 1369.9,332.4 1370.1,335.5 1370.3,333.2 1370.4,335.5 1370.6,332.5 1370.8,335.7 1370.9,332.9 1371.1,336.4 1371.3,333.6 1371.4,334.7 1371.6,330.9 1371.8,332.0 1371.9,328.9 1372.1,330.3 1372.3,327.9 1372.4,332.4 1372.6,328.4 1372.8,331.4 1372.9,329.3 1373.1,332.2 1373.3,330.2 1373.4,334.9 1373.6,331.9 1373.8,332.9 1373.9,330.3 1374.1,332.0 1374.3,329.1 1374.4,332.0 1374.6,329.4 1374.8,332.3 1374.9,329.5 1375.1,331.7 1375.3,341.5 1375.4,359.7 1375.6,371.0 1375.8,388.7 1375.9,403.6 1376.1,422.8 1376.3,441.4 1376.4,464.2 1376.6,494.2 1376.6,489.1 1376.8,459.8 1376.9,437.2 1377.1,419.1 1377.3,399.3 1377.4,385.2 1377.6,368.0 1377.8,355.8 1377.9,339.2 1378.1,329.7 1378.3,325.5 1378.4,325.9 1378.6,323.4 1378.8,326.0 1378.9,323.6 1379.1,327.3 1379.3,324.9 1379.4,328.6 1379.6,324.4 1379.8,325.4 1379.9,320.9 1380.1,322.9 1380.3,318.2 1380.4,321.5 1380.6,318.1 1380.8,322.4 1380.9,318.6 1381.1,321.9 1381.3,318.5 1381.4,323.1 1381.6,319.9 1381.8,322.5 1381.9,319.8 1382.1,324.3 1382.3,320.6 1382.4,326.0 1382.6,321.2 1382.8,324.7 1382.9,321.5 1383.1,323.9 1383.3,320.0 1383.4,323.5 1383.6,323.2 1383.8,325.2 1383.9,324.6 1384.1,327.0 1384.3,322.3 1384.4,325.8 1384.6,322.2 1384.8,326.2 1384.9,324.0 1385.1,326.6 1385.3,325.3 1385.4,328.4 1385.6,323.9 1385.8,326.6 1385.9,320.9 1386.1,322.5 1386.3,319.3 1386.4,322.3 1386.6,319.8 1386.8,323.2 1386.9,321.2 1387.1,325.2 1387.3,321.7 1387.4,327.0 1387.6,329.4 1387.8,344.6 1387.9,356.1 1388.1,373.7 1388.3,386.3 1388.4,404.5 1388.6,419.6 1388.8,439.3 1388.9,461.7 1389.0,481.5 1389.1,464.6 1389.3,440.3 1389.4,421.8 1389.6,402.8 1389.8,388.2 1389.9,370.4 1390.1,357.0 1390.3,340.9 1390.4,330.5 1390.6,320.7 1390.8,324.8 1390.9,320.9 1391.1,325.3 1391.3,322.4 1391.4,324.1 1391.6,321.5 1391.8,323.8 1391.9,320.2 1392.1,322.6 1392.3,319.9 1392.4,323.4 1392.6,322.6 1392.8,326.8 1392.9,325.3 1393.1,326.9 1393.3,322.3 1393.4,323.8 1393.6,319.9 1393.8,322.5 1393.9,321.8 1394.1,325.0 1394.3,320.6 1394.4,325.6 1394.6,320.3 1394.8,324.6 1394.9,320.6 1395.1,323.5 1395.3,320.8 1395.4,325.3 1395.6,320.7 1395.8,325.0 1395.9,323.4 1396.1,326.3 1396.3,324.0 1396.4,328.0 1396.6,324.0 1396.8,327.8 1396.9,325.1 1397.1,326.8 1397.3,324.2 1397.4,326.1 1397.6,322.4 1397.8,326.4 1397.9,323.1 1398.1,325.2 1398.3,322.4 1398.4,327.6 1398.6,324.5 1398.8,327.1 1398.9,324.7 1399.1,327.2 1399.3,324.0 1399.4,325.8 1399.6,323.0 1399.8,325.7 1399.9,324.3 1400.1,337.4 1400.3,349.0 1400.4,365.9 1400.6,377.7 1400.8,394.2 1400.9,409.2 1401.1,427.3 1401.3,445.5 1401.4,470.7 1401.5,478.7 1401.6,453.6 1401.8,433.9 1401.9,414.9 1402.1,400.3 1402.3,383.4 1402.4,369.8 1402.6,353.8 1402.8,344.2 1402.9,327.2 1403.1,331.5 1403.3,327.5 1403.4,331.5 1403.6,328.9 1403.8,330.8 1403.9,327.5 1404.1,330.8 1404.3,329.4 1404.4,333.4 1404.6,332.3 1404.8,334.3 1404.9,333.2 1405.1,336.3 1405.3,332.1 1405.4,334.9 1405.6,333.6 1405.8,336.1 1405.9,332.1 1406.1,334.2 1406.3,329.6 1406.4,333.5 1406.6,329.3 1406.8,332.0 1406.9,329.5 1407.1,333.8 1407.3,332.1 1407.4,335.7 1407.6,332.9 1407.8,336.1 1407.9,333.4 1408.1,336.7 1408.3,333.6 1408.4,335.9 1408.6,333.4 1408.8,338.1 1408.9,336.8 1409.1,339.8 1409.3,338.4 1409.4,340.7 1409.6,337.3 1409.8,341.3 1409.9,338.4 1410.1,340.3 1410.3,337.1 1410.4,341.8 1410.6,339.7 1410.8,342.6 1410.9,339.0 1411.1,339.3 1411.3,335.7 1411.4,337.0 1411.6,335.1 1411.8,338.0 1411.9,334.0 1412.1,337.5 1412.3,335.3 1412.4,338.8 1412.6,338.5 1412.8,347.9 1412.9,360.5 1413.1,376.5 1413.3,388.3 1413.4,407.5 1413.6,427.6 1413.8,456.0 1413.9,460.5 1414.1,472.3 1414.3,472.7 1414.4,483.2 1414.6,484.3 1414.8,497.2 1414.9,510.7 1415.1,525.3 1415.2,528.5 1415.3,519.9 1415.4,512.4 1415.6,499.3 1415.8,505.5 1415.9,500.9 1416.1,499.5 1416.3,499.5 1416.4,499.5 1416.6,499.5 1416.8,499.5 1416.9,505.8 1417.1,512.2 1417.3,507.3 1417.4,511.9 1417.6,507.7 1417.8,512.2 1417.9,509.1 1418.1,514.0 1418.3,508.9 1418.4,512.4 1418.6,509.7 1418.8,514.0 1418.9,511.1 1419.1,514.2 1419.3,510.4 1419.4,514.3 1419.6,509.8 1419.8,512.7 1419.9,511.2 1420.1,513.2 1420.3,509.5 1420.4,514.0 1420.6,511.2 1420.8,512.7 1420.9,510.1 1421.1,513.8 1421.3,508.9 1421.4,513.9 1421.6,508.9 1421.8,513.5 1421.9,509.7 1422.1,514.3 1422.3,510.1 1422.4,512.9 1422.6,511.2 1422.8,515.2 1422.9,511.7 1423.1,513.1 1423.3,509.8 1423.4,514.1 1423.6,509.9 1423.8,513.8 1423.9,509.8 1424.1,513.5 1424.3,510.9 1424.4,513.8 1424.6,509.8 1424.8,515.8 1424.9,513.0 1425.1,516.7 1425.3,511.3 1425.4,516.1 1425.6,512.7 1425.8,516.7 1425.9,510.3 1426.1,513.3 1426.3,509.0 1426.4,511.7 1426.6,509.2 1426.8,513.8 1426.9,510.1 1427.1,515.1 1427.3,510.7 1427.4,515.9 1427.6,512.7 1427.8,515.6 1427.9,513.9 1428.1,516.9 1428.3,510.5 1428.4,514.6 1428.6,510.4 1428.8,515.1 1428.9,510.8 1429.1,514.1 1429.3,512.3 1429.4,516.6 1429.6,510.9 1429.8,515.5 1429.9,511.1 1430.1,516.4 1430.3,511.2 1430.4,514.2 1430.6,511.1 1430.8,516.1 1430.9,511.3 1431.1,514.5 1431.3,510.3 1431.4,513.2 1431.6,510.8 1431.8,514.2 1431.9,508.7 1432.1,512.7 1432.3,509.7 1432.4,513.9 1432.6,511.2 1432.8,512.5 1432.9,510.0 1433.1,513.4 1433.3,510.2 1433.4,512.8 1433.6,509.3 1433.8,514.3 1433.9,508.8 1434.1,515.2 1434.3,511.9 1434.4,515.4 1434.6,511.5 1434.8,510.3 1434.9,505.1 1434.9,506.2 1435.1,511.6 1435.3,510.9 1435.4,513.8 1435.6,509.0 1435.8,514.7 1435.9,510.5 1436.1,516.3 1436.3,512.1 1436.4,515.2 1436.6,510.2 1436.8,515.1 1436.9,512.3 1437.1,515.1 1437.3,511.0 1437.4,515.3 1437.6,513.2 1437.8,518.0 1437.9,512.9 1438.1,516.4 1438.3,512.1 1438.4,516.9 1438.6,512.5 1438.8,517.3 1438.9,512.0 1439.1,516.1 1439.3,512.2 1439.4,515.4 1439.6,513.1 1439.8,515.3 1439.9,512.5 1440.1,513.6 1440.3,508.7 1440.4,513.9 1440.6,509.0 1440.8,511.3 1440.9,509.8 1441.1,513.8 1441.3,512.0 1441.4,516.3 1441.6,512.9 1441.8,516.1 1441.9,513.1 1442.1,516.9 1442.3,513.6 1442.4,515.9 1442.6,510.8 1442.8,513.8 1442.9,512.0 1443.1,513.9 1443.3,510.6 1443.4,515.8 1443.6,512.5 1443.8,516.6 1443.9,512.6 1444.1,515.2 1444.3,510.8 1444.4,515.4 1444.6,512.9 1444.8,514.4 1444.9,513.0 1445.1,517.3 1445.3,510.7 1445.4,514.3 1445.6,511.6 1445.8,513.8 1445.9,510.1 1446.1,514.1 1446.3,508.3 1446.4,513.9 1446.6,508.8 1446.8,514.1 1446.9,508.7 1447.1,513.1 1447.3,509.1 1447.4,512.4 1447.6,510.0 1447.8,514.7 1447.9,510.4 1448.1,516.8 1448.3,512.2 1448.4,516.0 1448.6,511.2 1448.8,515.2 1448.9,512.3 1449.1,513.7 1449.3,511.2 1449.4,514.7 1449.6,509.1 1449.8,514.6 1449.9,510.2 1450.1,512.5 1450.3,507.4 1450.3,506.7 1450.4,511.0 1450.6,510.7 1450.8,514.8 1450.9,510.0 1451.1,513.5 1451.3,510.3 1451.4,513.6 1451.6,511.8 1451.8,515.0 1451.9,511.5 1452.1,514.4 1452.3,510.6 1452.4,514.2 1452.6,511.2 1452.8,515.4 1452.9,511.1 1453.1,515.6 1453.3,514.0 1453.4,516.7 1453.6,512.3 1453.8,516.1 1453.9,510.6 1454.1,514.1 1454.3,509.8 1454.4,514.1 1454.6,510.1 1454.8,512.1 1454.9,509.1 1455.1,514.0 1455.3,512.0 1455.4,514.2 1455.6,512.1 1455.8,514.2 1455.9,511.3 1456.1,514.5 1456.3,511.4 1456.4,515.0 1456.6,509.9 1456.8,512.9 1456.9,510.0 1457.1,515.2 1457.3,509.8 1457.4,515.0 1457.6,510.5 1457.8,512.6 1457.9,510.5 1458.1,513.4 1458.3,511.8 1458.4,514.4 1458.6,511.5 1458.8,515.5 1458.9,509.6 1459.1,512.2 1459.3,508.4 1459.4,513.3 1459.6,510.1 1459.8,512.1 1459.9,509.0 1460.1,512.9 1460.3,511.1 1460.4,513.9 1460.6,510.2 1460.8,516.2 1460.9,509.8 1461.1,512.6 1461.3,505.0 1461.3,503.5 1461.4,507.6 1461.6,510.0 1461.8,512.9 1461.9,511.4 1462.1,513.5 1462.3,512.3 1462.4,514.6 1462.6,512.6 1462.8,514.6 1462.9,510.5 1463.1,514.3 1463.3,510.8 1463.4,515.1 1463.6,511.2 1463.8,513.8 1463.9,509.6 1464.1,512.4 1464.3,509.2 1464.4,515.1 1464.6,511.8 1464.8,515.3 1464.9,509.8 1465.1,513.7 1465.3,510.1 1465.4,512.2 1465.6,509.7 1465.8,515.1 1465.9,512.1 1466.1,513.9 1466.3,511.2 1466.4,514.6 1466.6,511.7 1466.8,516.0 1466.9,510.7 1467.1,513.1 1467.3,509.5 1467.4,514.0 1467.6,509.4 1467.8,514.8 1467.9,510.2 1468.1,514.5 1468.3,511.8 1468.4,513.8 1468.6,511.1 1468.8,514.1 1468.9,510.6 1469.1,513.1 1469.3,509.7 1469.4,512.5 1469.6,510.4 1469.8,513.5 1469.9,510.8 1470.1,512.8 1470.3,508.7 1470.4,513.9 1470.6,510.0 1470.8,512.6 1470.9,509.2 1471.1,514.8 1471.3,511.4 1471.4,513.9 1471.6,510.4 1471.8,514.9 1471.9,511.7 1472.1,515.1 1472.3,509.7 1472.4,513.9 1472.6,507.6 1472.8,512.6 1472.9,508.2 1473.1,512.1 1473.3,509.9 1473.4,512.9 1473.6,508.7 1473.8,513.5 1473.9,510.1 1474.1,514.2 1474.3,509.4 1474.4,514.6 1474.6,509.3 1474.8,514.2 1474.9,510.5 1475.1,515.2 1475.3,510.3 1475.4,514.5 1475.6,510.6 1475.8,514.3 1475.9,511.9 1476.1,514.9 1476.3,512.3 1476.4,516.9 1476.6,513.1 1476.8,514.3 1476.9,510.4 1477.1,513.7 1477.3,508.7 1477.4,512.7 1477.6,511.0 1477.8,516.0 1477.9,511.3 1478.1,515.4 1478.3,512.2 1478.4,515.8 1478.6,513.8 1478.8,514.8 1478.9,512.2 1479.1,515.4 1479.3,510.7 1479.4,512.2 1479.6,509.3 1479.8,514.3 1479.9,510.2 1480.1,514.3 1480.3,512.0 1480.4,514.2 1480.6,511.3 1480.8,515.7 1480.9,513.2 1481.1,515.3 1481.3,512.2 1481.4,514.7 1481.6,512.2 1481.8,514.1 1481.9,512.1 1482.1,512.7 1482.3,507.8 1482.3,506.7 1482.4,509.6 1482.6,509.4 1482.8,513.5 1482.9,511.6 1483.1,514.8 1483.3,512.9 1483.4,514.7 1483.6,511.6 1483.8,515.5 1483.9,511.8 1484.1,514.2 1484.3,509.4 1484.4,514.2 1484.6,510.0 1484.8,512.6 1484.9,508.9 1485.1,514.5 1485.3,510.3 1485.4,514.3 1485.6,510.5 1485.8,514.3 1485.9,512.5 1486.1,514.8 1486.3,512.7 1486.4,514.7 1486.6,510.9 1486.8,516.6 1486.9,512.0 1487.1,515.9 1487.3,511.7 1487.4,514.8 1487.6,511.5 1487.8,515.3 1487.9,510.3 1488.1,514.1 1488.3,509.1 1488.4,513.5 1488.6,509.7 1488.8,513.9 1488.9,509.7 1489.1,513.5 1489.3,510.3 1489.4,512.7 1489.6,511.0 1489.8,515.5 1489.9,510.5 1490.1,512.9 1490.3,511.1 1490.4,514.0 1490.6,509.8 1490.8,515.0 1490.9,509.1 1491.1,513.0 1491.3,509.8 1491.4,516.0 1491.6,510.7 1491.8,516.7 1491.9,512.5 1492.1,516.6 1492.3,511.7 1492.4,516.2 1492.6,510.4 1492.8,515.0 1492.9,510.5 1493.1,514.9 1493.3,510.4 1493.4,515.9 1493.6,511.7 1493.8,515.2 1493.9,510.0 1494.1,515.3 1494.3,510.1 1494.4,513.2 1494.6,511.2 1494.8,513.2 1494.9,509.3 1495.1,511.9 1495.3,508.9 1495.4,511.9 1495.6,510.0 1495.8,512.1 1495.9,509.0 1496.1,514.2 1496.3,509.3 1496.4,514.2 1496.6,513.0 1496.8,517.0 1496.9,512.4 1497.1,517.9 1497.3,512.8 1497.4,516.2 1497.6,513.6 1497.8,515.9 1497.9,512.8 1498.1,515.5 1498.3,510.9 1498.4,516.2 1498.6,511.8 1498.8,515.5 1498.9,509.0 1499.1,513.8 1499.3,509.6 1499.4,515.8 1499.6,510.4 1499.8,514.6 1499.9,511.2 1500.1,516.2 1500.3,512.5 1500.4,515.7 1500.6,513.2 1500.8,514.7 1500.9,511.0 1501.1,515.0 1501.3,510.8 1501.4,514.5 1501.6,510.0 1501.8,513.3 1501.9,511.2 1502.1,514.5 1502.3,511.3 1502.4,513.8 1502.6,511.2 1502.8,514.6 1502.9,509.6 1503.1,514.7 1503.3,510.4 1503.4,513.8 1503.6,510.4 1503.8,513.8 1503.9,512.0 1504.1,515.8 1504.3,510.2 1504.4,515.0 1504.6,511.4 1504.8,515.2 1504.9,509.2 1505.1,512.8 1505.3,510.0 1505.4,511.9 1505.6,508.6 1505.8,512.0 1505.9,507.9 1506.1,512.8 1506.3,507.2 1506.4,506.7 1506.4,507.2 1506.6,508.6 1506.8,511.7 1506.9,509.4 1507.1,512.5 1507.3,510.5 1507.4,515.5 1507.6,512.5 1507.8,515.5 1507.9,511.6 1508.1,513.8 1508.3,511.3 1508.4,513.9 1508.6,510.4 1508.8,512.4 1508.9,510.7 1509.1,515.0 1509.3,509.2 1509.4,513.2 1509.6,510.6 1509.8,514.5 1509.9,512.6 1510.1,514.4 1510.3,510.8 1510.4,513.3 1510.6,509.4 1510.8,513.5 1510.9,511.1 1511.1,516.0 1511.3,512.5 1511.4,514.6 1511.6,512.2 1511.8,515.4 1511.9,512.7 1512.1,516.1 1512.3,511.0 1512.4,515.1 1512.6,512.3 1512.8,513.7 1512.9,508.8 1513.1,513.0 1513.3,511.0 1513.4,513.2 1513.6,511.4 1513.8,514.3 1513.9,511.8 1514.1,515.8 1514.3,511.4 1514.4,514.8 1514.6,513.2 1514.8,516.2 1514.9,510.0 1515.1,514.9 1515.3,510.7 1515.4,513.8 1515.6,510.6 1515.8,513.4 1515.9,509.8 1516.1,513.6 1516.3,508.0 1516.4,512.6 1516.6,508.4 1516.8,513.9 1516.9,508.0 1517.1,513.4 1517.3,509.1 1517.4,512.8 1517.6,509.4 1517.8,513.3 1517.9,511.3 1518.1,514.4 1518.3,513.6 1518.4,516.3 1518.6,512.0 1518.8,514.3 1518.9,509.8 1519.1,514.1 1519.3,511.1 1519.4,515.1 1519.6,512.5 1519.8,516.9 1519.9,510.6 1520.1,515.5 1520.3,510.7 1520.4,514.3 1520.6,508.1 1520.8,514.1 1520.9,510.1 1521.1,511.9 1521.3,510.3 1521.4,512.2 1521.6,509.6 1521.8,513.1 1521.9,511.2 1522.1,514.6 1522.3,510.7 1522.4,513.8 1522.6,510.7 1522.8,516.3 1522.9,511.5 1523.1,513.9 1523.3,509.4 1523.4,512.8 1523.6,509.1 1523.8,515.8 1523.9,512.3 1524.1,515.9 1524.3,513.7 1524.4,516.1 1524.6,512.0 1524.8,516.2 1524.9,510.1 1525.1,516.0 1525.3,509.7 1525.4,507.4 1525.6,500.3 1525.6,503.4 1525.8,513.0 1525.9,513.1 1526.1,514.6 1526.3,509.5 1526.4,515.0 1526.6,511.1 1526.8,514.6 1526.9,511.8 1527.1,516.3 1527.3,512.4 1527.4,515.2 1527.6,510.7 1527.8,514.8 1527.9,510.0 1528.1,515.2 1528.3,509.7 1528.4,515.0 1528.6,511.2 1528.8,515.9 1528.9,511.7 1529.1,512.9 1529.3,509.1 1529.4,513.7 1529.6,508.8 1529.8,514.3 1529.9,510.8 1530.1,514.9 1530.3,510.1 1530.4,515.7 1530.6,511.0 1530.8,516.2 1530.9,513.1 1531.1,514.7 1531.3,511.7 1531.4,515.9 1531.6,512.0 1531.8,514.1 1531.9,510.2 1532.1,513.6 1532.3,509.7 1532.4,513.5 1532.6,510.3 1532.8,515.2 1532.9,512.3 1533.1,515.1 1533.3,512.7 1533.4,515.4 1533.6,511.9 1533.8,514.7 1533.9,511.2 1534.1,513.1 1534.3,509.8 1534.4,513.3 1534.6,508.9 1534.8,513.8 1534.9,511.6 1535.1,515.8 1535.3,511.0 1535.4,516.0 1535.6,512.0 1535.8,515.9 1535.9,511.3 1536.1,515.9 1536.3,513.8 1536.4,514.6 1536.6,511.8 1536.8,515.6 1536.9,511.9 1537.1,514.5 1537.3,511.0 1537.4,513.8 1537.6,511.0 1537.8,513.9 1537.9,509.7 1538.1,512.6 1538.3,509.2 1538.4,513.4 1538.6,510.5 1538.8,513.6 1538.9,510.3 1539.1,514.4 1539.3,510.6 1539.4,513.8 1539.6,510.0 1539.8,512.2 1539.9,508.0 1540.1,513.6 1540.3,511.3 1540.4,516.3 1540.6,513.0 1540.8,508.2 1540.9,495.2 1541.0,494.6 1541.1,506.0 1541.3,516.0 1541.4,521.2 1541.4,520.4 1541.6,514.4 1541.8,515.2 1541.9,509.4 1542.1,514.8 1542.3,510.2 1542.4,514.8 1542.6,510.8 1542.8,512.6 1542.9,509.4 1543.1,512.5 1543.3,509.1 1543.4,513.8 1543.6,510.7 1543.8,514.8 1543.9,509.7 1544.1,515.2 1544.3,510.8 1544.4,515.9 1544.6,512.8 1544.8,514.3 1544.9,510.3 1545.1,514.0 1545.3,509.5 1545.4,515.4 1545.6,512.2 1545.8,515.5 1545.9,513.8 1546.1,514.2 1546.3,510.3 1546.4,512.5 1546.6,510.1 1546.8,512.9 1546.9,508.4 1547.1,512.8 1547.3,511.4 1547.4,514.4 1547.6,509.6 1547.8,512.8 1547.9,508.9 1548.1,514.7 1548.3,509.3 1548.4,515.6 1548.6,511.4 1548.8,516.4 1548.9,513.5 1549.1,516.7 1549.3,513.0 1549.4,516.0 1549.6,513.3 1549.8,515.3 1550.0,511.8 1550.1,517.0 1550.3,513.9 1550.5,515.9 1550.6,512.9 1550.8,514.7 1551.0,511.1 1551.1,514.5 1551.3,510.1 1551.5,513.4 1551.6,510.3 1551.8,514.5 1552.0,511.1 1552.1,513.2 1552.3,511.1 1552.5,515.0 1552.6,511.2 1552.8,515.3 1553.0,510.8 1553.1,512.8 1553.3,510.0 1553.5,512.1 1553.6,510.2 1553.8,512.7 1554.0,508.3 1554.1,511.2 1554.3,509.4 1554.5,512.6 1554.6,509.2 1554.8,513.0 1555.0,509.0 1555.1,512.2 1555.3,510.9 1555.5,512.1 1555.6,508.7 1555.8,510.1 1555.9,507.5 1556.0,508.5 1556.1,512.2 1556.3,510.9 1556.5,515.2 1556.6,510.4 1556.8,514.3 1557.0,511.0 1557.1,512.2 1557.3,511.2 1557.5,515.2 1557.6,511.9 1557.8,517.2 1558.0,511.7 1558.1,516.5 1558.3,510.8 1558.5,516.9 1558.6,510.7 1558.8,514.6 1559.0,512.6 1559.1,515.3 1559.3,512.5 1559.5,516.6 1559.6,514.0 1559.8,515.4 1560.0,512.9 1560.1,516.7 1560.3,512.2 1560.5,514.9 1560.6,510.2 1560.8,514.1 1561.0,509.5 1561.1,514.2 1561.3,512.2 1561.5,516.7 1561.6,513.7 1561.8,515.2 1562.0,513.1 1562.1,516.1 1562.3,511.8 1562.5,514.8 1562.6,512.2 1562.8,516.2 1563.0,511.9 1563.1,514.9 1563.3,511.3 1563.5,514.6 1563.6,511.4 1563.8,513.3 1564.0,510.0 1564.1,515.4 1564.3,511.0 1564.5,516.0 1564.6,513.4 1564.8,515.0 1565.0,512.1 1565.1,512.9 1565.3,508.7 1565.5,512.4 1565.6,511.1 1565.8,513.9 1566.0,511.4 1566.1,517.5 1566.3,513.5 1566.5,515.4 1566.6,510.6 1566.8,514.7 1567.0,512.3 1567.1,517.0 1567.3,510.9 1567.5,515.6 1567.6,511.5 1567.8,515.8 1568.0,510.9 1568.1,512.1 1568.3,509.3 1568.5,514.1 1568.6,509.4 1568.8,515.1 1569.0,512.7 1569.1,516.2 1569.3,512.4 1569.5,515.0 1569.6,511.4 1569.8,517.4 1570.0,513.3 1570.1,513.9 1570.3,511.7 1570.5,513.4 1570.6,509.8 1570.8,515.4 1571.0,510.7 1571.1,515.9 1571.3,511.8 1571.5,513.8 1571.6,510.8 1571.8,510.1 1571.9,506.7 1572.0,507.8 1572.1,513.1 1572.3,509.3 1572.5,512.9 1572.6,510.2 1572.8,512.3 1573.0,509.6 1573.1,513.6 1573.3,508.8 1573.5,514.6 1573.6,510.7 1573.8,512.2 1574.0,509.5 1574.1,513.9 1574.3,509.0 1574.5,514.1 1574.6,509.8 1574.8,515.2 1575.0,512.8 1575.1,516.8 1575.3,511.2 1575.5,515.9 1575.6,510.7 1575.8,514.4 1576.0,509.5 1576.1,514.2 1576.3,509.0 1576.5,513.3 1576.6,508.4 1576.8,511.8 1577.0,509.8 1577.1,512.8 1577.3,508.3 1577.5,512.2 1577.6,508.8 1577.8,512.4 1578.0,510.4 1578.1,513.9 1578.3,510.1 1578.5,514.8 1578.6,510.5 1578.8,515.9 1579.0,512.0 1579.1,515.4 1579.3,511.9 1579.5,516.3 1579.6,512.1 1579.8,514.2 1580.0,512.0 1580.1,514.2 1580.3,510.2 1580.5,515.0 1580.6,511.2 1580.8,513.7 1581.0,508.9 1581.1,514.7 1581.3,510.4 1581.5,514.4 1581.6,510.5 1581.8,514.3 1582.0,509.6 1582.1,514.0 1582.3,510.3 1582.5,513.1 1582.6,508.3 1582.8,514.7 1583.0,510.6 1583.1,514.2 1583.3,512.5 1583.5,516.6 1583.6,510.5 1583.8,514.3 1584.0,511.7 1584.1,515.4 1584.3,512.1 1584.5,514.7 1584.6,510.9 1584.8,514.2 1585.0,510.4 1585.1,513.4 1585.3,509.1 1585.5,512.9 1585.6,507.9 1585.8,513.4 1586.0,510.6 1586.1,514.2 1586.3,509.0 1586.5,512.0 1586.6,510.3 1586.8,513.8 1587.0,508.3 1587.1,513.5 1587.3,508.9 1587.5,512.9 1587.6,511.3 1587.8,515.2 1588.0,509.6 1588.1,513.0 1588.3,509.6 1588.5,513.1 1588.6,509.1 1588.8,513.4 1589.0,510.6 1589.1,514.7 1589.3,509.9 1589.5,513.8 1589.6,510.0 1589.8,513.7 1590.0,510.8 1590.1,514.2 1590.3,512.3 1590.5,515.9 1590.6,514.0 1590.8,515.9 1591.0,512.5 1591.1,514.7 1591.3,510.8 1591.5,515.1 1591.6,509.0 1591.8,512.9 1592.0,510.5 1592.1,511.8 1592.3,508.1 1592.5,513.6 1592.6,508.5 1592.8,514.0 1593.0,509.5 1593.1,512.0 1593.3,510.2 1593.5,512.5 1593.6,508.3 1593.8,512.1 1594.0,510.3 1594.1,513.4 1594.3,512.3 1594.5,515.8 1594.6,510.9 1594.8,514.9 1595.0,508.4 1595.1,506.7 1595.1,508.1 1595.3,509.9 1595.5,513.1 1595.6,512.1 1595.8,513.8 1596.0,512.7 1596.1,514.8 1596.3,510.5 1596.5,514.5 1596.6,509.1 1596.8,511.9 1597.0,510.8 1597.1,514.6 1597.3,509.5 1597.5,515.5 1597.6,511.6 1597.8,513.9 1598.0,510.6 1598.1,513.7 1598.3,510.7 1598.5,512.8 1598.6,511.3 1598.8,514.7 1599.0,508.7 1599.1,515.5 1599.3,511.3 1599.5,515.6 1599.6,512.6 1599.8,514.2 1600.0,512.5 1600.1,514.0 1600.3,509.5 1600.5,514.1 1600.6,511.4 1600.8,514.7 1601.0,511.3 1601.1,514.7 1601.3,511.6 1601.5,515.9 1601.6,510.8 1601.8,515.3 1602.0,509.4 1602.1,512.8 1602.3,509.0 1602.5,514.4 1602.6,510.4 1602.8,513.1 1603.0,509.8 1603.1,513.0 1603.3,510.2 1603.5,513.1 1603.6,511.2 1603.8,516.5 1604.0,511.8 1604.1,516.4 1604.3,512.4 1604.5,516.9 1604.6,512.5 1604.8,516.0 1605.0,513.6 1605.1,516.7 1605.3,511.4 1605.5,517.2 1605.6,512.4 1605.8,515.2 1606.0,511.4 1606.1,513.8 1606.3,511.1 1606.5,515.2 1606.6,509.2 1606.8,512.8 1607.0,510.8 1607.1,513.3 1607.3,509.4 1607.5,514.7 1607.6,510.9 1607.8,512.5 1608.0,510.2 1608.1,515.3 1608.3,512.7 1608.5,515.4 1608.6,511.9 1608.8,514.8 1609.0,509.3 1609.1,506.7 1609.1,508.7 1609.3,509.7 1609.5,515.0 1609.6,511.1 1609.8,515.4 1610.0,510.4 1610.1,514.6 1610.3,511.9 1610.5,516.7 1610.6,513.3 1610.8,516.9 1611.0,512.5 1611.1,516.1 1611.3,512.8 1611.5,516.9 1611.6,512.5 1611.8,515.4 1612.0,513.6 1612.1,517.3 1612.3,511.8 1612.5,515.1 1612.6,513.4 1612.8,515.4 1613.0,513.4 1613.1,515.6 1613.3,510.4 1613.5,515.1 1613.6,510.3 1613.8,514.8 1614.0,510.6 1614.1,513.7 1614.3,511.6 1614.5,515.5 1614.6,511.9 1614.8,514.6 1615.0,512.0 1615.1,517.0 1615.3,511.1 1615.5,516.4 1615.6,511.5 1615.8,516.4 1616.0,513.0 1616.1,517.1 1616.3,513.1 1616.5,515.7 1616.6,511.2 1616.8,513.8 1617.0,510.9 1617.1,514.1 1617.3,511.2 1617.5,514.6 1617.6,512.4 1617.8,514.8 1618.0,512.3 1618.1,515.0 1618.3,511.6 1618.5,514.7 1618.6,511.3 1618.8,515.1 1619.0,510.5 1619.1,514.8 1619.3,512.3 1619.5,515.3 1619.6,511.6 1619.8,515.2 1620.0,511.1 1620.1,514.6 1620.3,511.7 1620.5,515.4 1620.6,512.9 1620.8,514.2 1621.0,511.6 1621.1,513.1 1621.3,510.4 1621.5,512.9 1621.6,509.4 1621.8,513.1 1622.0,508.9 1622.1,513.4 1622.3,509.1 1622.5,513.2 1622.6,508.8 1622.8,512.7 1623.0,510.6 1623.1,512.3 1623.3,508.7 1623.5,514.5 1623.6,510.2 1623.8,515.0 1624.0,510.6 1624.1,516.0 1624.3,510.4 1624.5,514.9 1624.6,512.5 1624.8,515.6 1625.0,511.1 1625.1,515.7 1625.3,511.8 1625.5,513.2 1625.6,510.5 1625.8,514.6 1626.0,510.4 1626.1,515.0 1626.3,509.8 1626.5,516.2 1626.6,510.8 1626.8,515.3 1627.0,512.3 1627.1,516.8 1627.3,511.2 1627.5,516.4 1627.6,513.2 1627.8,516.1 1628.0,511.5"/>
</svg>
<svg class="plot" style="left:9px;top:598px" width="1671" height="536" viewBox="9 598 1671 536">
<rect x="9" y="598" width="1671" height="536" fill="#000"/>
<g shape-rendering="crispEdges"><rect x="106" y="608.2" width="2" height="300.8" fill="#050097"/><rect x="108" y="608.2" width="1" height="300.8" fill="#0500a5"/><rect x="109" y="608.2" width="6" height="300.8" fill="#050097"/><rect x="115" y="608.2" width="1" height="300.8" fill="#0500a5"/><rect x="116" y="608.2" width="3" height="300.8" fill="#050097"/><rect x="119" y="608.2" width="2" height="300.8" fill="#0500a5"/><rect x="121" y="608.2" width="1" height="300.8" fill="#04008a"/><rect x="122" y="608.2" width="3" height="300.8" fill="#0500a5"/><rect x="125" y="608.2" width="2" height="300.8" fill="#050097"/><rect x="127" y="608.2" width="1" height="300.8" fill="#04008a"/><rect x="128" y="608.2" width="1" height="300.8" fill="#050097"/><rect x="129" y="608.2" width="1" height="300.8" fill="#04008a"/><rect x="130" y="608.2" width="2" height="300.8" fill="#050097"/><rect x="132" y="608.2" width="1" height="300.8" fill="#04008a"/><rect x="133" y="608.2" width="2" height="300.8" fill="#050097"/><rect x="135" y="608.2" width="1" height="300.8" fill="#0500a5"/><rect x="136" y="608.2" width="3" height="300.8" fill="#050097"/><rect x="139" y="608.2" width="1" height="300.8" fill="#0500a5"/><rect x="140" y="608.2" width="2" height="300.8" fill="#050097"/><rect x="142" y="608.2" width="4" height="300.8" fill="#0500a5"/><rect x="146" y="608.2" width="3" height="300.8" fill="#050097"/><rect x="149" y="608.2" width="1" height="300.8" fill="#04008a"/><rect x="150" y="608.2" width="1" height="300.8" fill="#0500a5"/><rect x="151" y="608.2" width="1" height="300.8" fill="#050097"/><rect x="152" y="608.2" width="1" height="300.8" fill="#0500a5"/><rect x="153" y="608.2" width="1" height="300.8" fill="#050097"/><rect x="154" y="608.2" width="2" height="300.8" fill="#0500a5"/><rect x="156" y="608.2" width="1" height="300.8" fill="#04008a"/><rect x="157" y="608.2" width="1" height="300.8" fill="#050097"/><rect x="158" y="608.2" width="1" height="300.8" fill="#0500a5"/><rect x="159" y="608.2" width="1" height="300.8" fill="#050097"/><rect x="160" y="608.2" width="1" height="300.8" fill="#0500a5"/><rect x="161" y="608.2" width="1" height="300.8" fill="#050097"/><rect x="162" y="608.2" width="1" height="300.8" fill="#04008a"/><rect x="163" y="608.2" width="1" height="300.8" fill="#050097"/><rect x="164" y="608.2" width="1" height="300.8" fill="#0500a5"/><rect x="165" y="608.2" width="3" height="300.8" fill="#050097"/><rect x="168" y="608.2" width="2" height="300.8" fill="#0500a5"/><rect x="170" y="608.2" width="3" height="300.8" fill="#050097"/><rect x="173" y="608.2" width="1" height="300.8" fill="#04008a"/><rect x="174" y="608.2" width="1" height="300.8" fill="#0500a5"/><rect x="175" y="608.2" width="4" height="300.8" fill="#050097"/><rect x="179" y="608.2" width="1" height="300.8" fill="#0500a5"/><rect x="180" y="608.2" width="6" height="300.8" fill="#050097"/><rect x="186" y="608.2" width="2" height="300.8" fill="#0500a5"/><rect x="188" y="608.2" width="1" height="300.8" fill="#050097"/><rect x="189" y="608.2" width="1" height="300.8" fill="#0500a5"/><rect x="190" y="608.2" width="2" height="300.8" fill="#050097"/><rect x="192" y="608.2" width="1" height="300.8" fill="#0500a5"/><rect x="193" y="608.2" width="2" height="300.8" fill="#050097"/><rect x="195" y="608.2" width="1" height="300.8" fill="#0500a5"/><rect x="196" y="608.2" width="2" height="300.8" fill="#050097"/><rect x="198" y="608.2" width="1" height="300.8" fill="#0500a5"/><rect x="199" y="608.2" width="2" height="300.8" fill="#050097"/><rect x="201" y="608.2" width="1" height="300.8" fill="#04008a"/><rect x="202" y="608.2" width="6" height="300.8" fill="#050097"/><rect x="208" y="608.2" width="1" height="300.8" fill="#0500a5"/><rect x="209" y="608.2" width="2" height="300.8" fill="#050097"/><rect x="211" y="608.2" width="1" height="300.8" fill="#0500a5"/><rect x="212" y="608.2" width="2" height="300.8" fill="#050097"/><rect x="214" y="608.2" width="2" height="300.8" fill="#0500a5"/><rect x="216" y="608.2" width="2" height="300.8" fill="#050097"/><rect x="218" y="608.2" width="2" height="300.8" fill="#0500a5"/><rect x="220" y="608.2" width="1" height="300.8" fill="#050097"/><rect x="221" y="608.2" width="2" height="300.8" fill="#0500a5"/><rect x="223" y="608.2" width="3" height="300.8" fill="#050097"/><rect x="226" y="608.2" width="1" height="300.8" fill="#04008a"/><rect x="227" y="608.2" width="1" height="300.8" fill="#0500a5"/><rect x="228" y="608.2" width="1" height="300.8" fill="#050097"/><rect x="229" y="608.2" width="1" height="300.8" fill="#0500a5"/><rect x="230" y="608.2" width="1" height="300.8" fill="#050097"/><rect x="231" y="608.2" width="1" height="300.8" fill="#0500a5"/><rect x="232" y="608.2" width="3" height="300.8" fill="#050097"/><rect x="235" y="608.2" width="1" height="300.8" fill="#0500a5"/><rect x="236" y="608.2" width="1" height="300.8" fill="#04008a"/><rect x="237" y="608.2" width="2" height="300.8" fill="#050097"/><rect x="239" y="608.2" width="1" height="300.8" fill="#0500a5"/><rect x="240" y="608.2" width="2" height="300.8" fill="#050097"/><rect x="242" y="608.2" width="1" height="300.8" fill="#0500a5"/><rect x="243" y="608.2" width="1" height="300.8" fill="#050097"/><rect x="244" y="608.2" width="1" height="300.8" fill="#04008a"/><rect x="245" y="608.2" width="2" height="300.8" fill="#050097"/><rect x="247" y="608.2" width="1" height="300.8" fill="#04008a"/><rect x="248" y="608.2" width="5" height="300.8" fill="#050097"/><rect x="253" y="608.2" width="1" height="300.8" fill="#8d00aa"/><rect x="254" y="608.2" width="1" height="300.8" fill="#f3a42d"/><rect x="255" y="608.2" width="1" height="300.8" fill="#f5e20b"/><rect x="256" y="608.2" width="2" height="300.8" fill="#f5db0f"/><rect x="258" y="608.2" width="3" height="300.8" fill="#f5e20b"/><rect x="261" y="608.2" width="3" height="300.8" fill="#f5db0f"/><rect x="264" y="608.2" width="1" height="300.8" fill="#f4bf1e"/><rect x="265" y="608.2" width="1" height="300.8" fill="#c60094"/><rect x="266" y="608.2" width="1" height="300.8" fill="#ed1b77"/><rect x="267" y="608.2" width="1" height="300.8" fill="#f4cd16"/><rect x="268" y="608.2" width="1" height="300.8" fill="#f5db0f"/><rect x="269" y="608.2" width="2" height="300.8" fill="#f5d413"/><rect x="271" y="608.2" width="6" height="300.8" fill="#f5db0f"/><rect x="277" y="608.2" width="1" height="300.8" fill="#f4c61a"/><rect x="278" y="608.2" width="1" height="300.8" fill="#ec0782"/><rect x="279" y="608.2" width="4" height="300.8" fill="#0500a5"/><rect x="283" y="608.2" width="2" height="300.8" fill="#050097"/><rect x="285" y="608.2" width="2" height="300.8" fill="#04008a"/><rect x="287" y="608.2" width="3" height="300.8" fill="#0500a5"/><rect x="290" y="608.2" width="1" height="300.8" fill="#04008a"/><rect x="291" y="608.2" width="2" height="300.8" fill="#050097"/><rect x="293" y="608.2" width="1" height="300.8" fill="#0500a5"/><rect x="294" y="608.2" width="1" height="300.8" fill="#050097"/><rect x="295" y="608.2" width="1" height="300.8" fill="#0500a5"/><rect x="296" y="608.2" width="1" height="300.8" fill="#04008a"/><rect x="297" y="608.2" width="1" height="300.8" fill="#050097"/><rect x="298" y="608.2" width="6" height="300.8" fill="#0500a5"/><rect x="304" y="608.2" width="1" height="300.8" fill="#050097"/><rect x="305" y="608.2" width="3" height="300.8" fill="#0500a5"/><rect x="308" y="608.2" width="1" height="300.8" fill="#050097"/><rect x="309" y="608.2" width="2" height="300.8" fill="#0500a5"/><rect x="311" y="608.2" width="7" height="300.8" fill="#050097"/><rect x="318" y="608.2" width="3" height="300.8" fill="#0500a5"/><rect x="321" y="608.2" width="1" height="300.8" fill="#050097"/><rect x="322" y="608.2" width="1" height="300.8" fill="#0500a5"/><rect x="323" y="608.2" width="2" height="300.8" fill="#050097"/><rect x="325" y="608.2" width="1" height="300.8" fill="#0500a5"/><rect x="326" y="608.2" width="1" height="300.8" fill="#050097"/><rect x="327" y="608.2" width="1" height="300.8" fill="#0500a5"/><rect x="328" y="608.2" width="1" height="300.8" fill="#04008a"/><rect x="329" y="608.2" width="3" height="300.8" fill="#050097"/><rect x="332" y="608.2" width="1" height="300.8" fill="#0500a5"/><rect x="333" y="608.2" width="2" height="300.8" fill="#050097"/><rect x="335" y="608.2" width="1" height="300.8" fill="#0500a5"/><rect x="336" y="608.2" width="1" height="300.8" fill="#050097"/><rect x="337" y="608.2" width="1" height="300.8" fill="#04008a"/><rect x="338" y="608.2" width="1" height="300.8" fill="#050097"/><rect x="339" y="608.2" width="1" height="300.8" fill="#0500a5"/><rect x="340" y="608.2" width="2" height="300.8" fill="#050097"/><rect x="342" y="608.2" width="2" height="300.8" fill="#0500a5"/><rect x="344" y="608.2" width="1" height="300.8" fill="#050097"/><rect x="345" y="608.2" width="1" height="300.8" fill="#0500a5"/><rect x="346" y="608.2" width="1" height="300.8" fill="#050097"/><rect x="347" y="608.2" width="1" height="300.8" fill="#0500a5"/><rect x="348" y="608.2" width="2" height="300.8" fill="#050097"/><rect x="350" y="608.2" width="3" height="300.8" fill="#0500a5"/><rect x="353" y="608.2" width="5" height="300.8" fill="#050097"/><rect x="358" y="608.2" width="4" height="300.8" fill="#0500a5"/><rect x="362" y="608.2" width="6" height="300.8" fill="#050097"/><rect x="368" y="608.2" width="1" height="300.8" fill="#4000c6"/><rect x="369" y="608.2" width="1" height="300.8" fill="#f2893c"/><rect x="370" y="608.2" width="3" height="300.8" fill="#fafa75"/><rect x="373" y="608.2" width="2" height="300.8" fill="#fafa80"/><rect x="375" y="608.2" width="2" height="300.8" fill="#fafa75"/><rect x="377" y="608.2" width="1" height="300.8" fill="#fafa80"/><rect x="378" y="608.2" width="2" height="300.8" fill="#fafa75"/><rect x="380" y="608.2" width="1" height="300.8" fill="#f5d413"/><rect x="381" y="608.2" width="1" height="300.8" fill="#d9008d"/><rect x="382" y="608.2" width="1" height="300.8" fill="#f6f600"/><rect x="383" y="608.2" width="2" height="300.8" fill="#fafa6a"/><rect x="385" y="608.2" width="2" height="300.8" fill="#fafa75"/><rect x="387" y="608.2" width="1" height="300.8" fill="#fafa80"/><rect x="388" y="608.2" width="1" height="300.8" fill="#fafa6a"/><rect x="389" y="608.2" width="1" height="300.8" fill="#fafa75"/><rect x="390" y="608.2" width="2" height="300.8" fill="#fafa6a"/><rect x="392" y="608.2" width="1" height="300.8" fill="#f8f840"/><rect x="393" y="608.2" width="1" height="300.8" fill="#ee2970"/><rect x="394" y="608.2" width="1" height="300.8" fill="#f1823f"/><rect x="395" y="608.2" width="1" height="300.8" fill="#f9f960"/><rect x="396" y="608.2" width="2" height="300.8" fill="#fafa75"/><rect x="398" y="608.2" width="1" height="300.8" fill="#fafa6a"/><rect x="399" y="608.2" width="1" height="300.8" fill="#fafa80"/><rect x="400" y="608.2" width="1" height="300.8" fill="#fafa75"/><rect x="401" y="608.2" width="1" height="300.8" fill="#fafa6a"/><rect x="402" y="608.2" width="2" height="300.8" fill="#fafa75"/><rect x="404" y="608.2" width="1" height="300.8" fill="#fafa6a"/><rect x="405" y="608.2" width="1" height="300.8" fill="#f6ef04"/><rect x="406" y="608.2" width="1" height="300.8" fill="#8d00aa"/><rect x="407" y="608.2" width="3" height="300.8" fill="#050097"/><rect x="410" y="608.2" width="2" height="300.8" fill="#0500a5"/><rect x="412" y="608.2" width="1" height="300.8" fill="#050097"/><rect x="413" y="608.2" width="2" height="300.8" fill="#04008a"/><rect x="415" y="608.2" width="1" height="300.8" fill="#0500a5"/><rect x="416" y="608.2" width="1" height="300.8" fill="#04008a"/><rect x="417" y="608.2" width="1" height="300.8" fill="#0500a5"/><rect x="418" y="608.2" width="2" height="300.8" fill="#050097"/><rect x="420" y="608.2" width="1" height="300.8" fill="#0500a5"/><rect x="421" y="608.2" width="1" height="300.8" fill="#04008a"/><rect x="422" y="608.2" width="2" height="300.8" fill="#050097"/><rect x="424" y="608.2" width="1" height="300.8" fill="#04008a"/><rect x="425" y="608.2" width="1" height="300.8" fill="#0500a5"/><rect x="426" y="608.2" width="2" height="300.8" fill="#050097"/><rect x="428" y="608.2" width="1" height="300.8" fill="#04008a"/><rect x="429" y="608.2" width="1" height="300.8" fill="#050097"/><rect x="430" y="608.2" width="1" height="300.8" fill="#3400cb"/><rect x="431" y="608.2" width="1" height="300.8" fill="#ee306c"/><rect x="432" y="608.2" width="1" height="300.8" fill="#f7f715"/><rect x="433" y="608.2" width="3" height="300.8" fill="#f8f82a"/><rect x="436" y="608.2" width="3" height="300.8" fill="#f7f720"/><rect x="439" y="608.2" width="1" height="300.8" fill="#f8f82a"/><rect x="440" y="608.2" width="2" height="300.8" fill="#f7f720"/><rect x="442" y="608.2" width="1" height="300.8" fill="#f5d413"/><rect x="443" y="608.2" width="1" height="300.8" fill="#bf0097"/><rect x="444" y="608.2" width="1" height="300.8" fill="#f29038"/><rect x="445" y="608.2" width="1" height="300.8" fill="#f7f715"/><rect x="446" y="608.2" width="1" height="300.8" fill="#f6f600"/><rect x="447" y="608.2" width="2" height="300.8" fill="#f6f60b"/><rect x="449" y="608.2" width="2" height="300.8" fill="#f6f600"/><rect x="451" y="608.2" width="1" height="300.8" fill="#f6ef04"/><rect x="452" y="608.2" width="1" height="300.8" fill="#f6f600"/><rect x="453" y="608.2" width="1" height="300.8" fill="#f6ef04"/><rect x="454" y="608.2" width="1" height="300.8" fill="#f5e20b"/><rect x="455" y="608.2" width="1" height="300.8" fill="#ed2273"/><rect x="456" y="608.2" width="1" height="300.8" fill="#ed157b"/><rect x="457" y="608.2" width="1" height="300.8" fill="#f9f955"/><rect x="458" y="608.2" width="1" height="300.8" fill="#fbfb8a"/><rect x="459" y="608.2" width="4" height="300.8" fill="#fafa80"/><rect x="463" y="608.2" width="4" height="300.8" fill="#fafa75"/><rect x="467" y="608.2" width="1" height="300.8" fill="#f6ef04"/><rect x="468" y="608.2" width="1" height="300.8" fill="#d30090"/><rect x="469" y="608.2" width="1" height="300.8" fill="#f5e20b"/><rect x="470" y="608.2" width="1" height="300.8" fill="#fafa6a"/><rect x="471" y="608.2" width="3" height="300.8" fill="#f9f960"/><rect x="474" y="608.2" width="1" height="300.8" fill="#f9f955"/><rect x="475" y="608.2" width="1" height="300.8" fill="#f9f960"/><rect x="476" y="608.2" width="2" height="300.8" fill="#f9f955"/><rect x="478" y="608.2" width="1" height="300.8" fill="#f9f960"/><rect x="479" y="608.2" width="1" height="300.8" fill="#f9f955"/><rect x="480" y="608.2" width="1" height="300.8" fill="#f06d4a"/><rect x="481" y="608.2" width="1" height="300.8" fill="#4000c6"/><rect x="482" y="608.2" width="2" height="300.8" fill="#050097"/><rect x="484" y="608.2" width="4" height="300.8" fill="#0500a5"/><rect x="488" y="608.2" width="3" height="300.8" fill="#050097"/><rect x="491" y="608.2" width="1" height="300.8" fill="#04008a"/><rect x="492" y="608.2" width="1" height="300.8" fill="#050097"/><rect x="493" y="608.2" width="1" height="300.8" fill="#0500a5"/><rect x="494" y="608.2" width="3" height="300.8" fill="#050097"/><rect x="497" y="608.2" width="1" height="300.8" fill="#0500a5"/><rect x="498" y="608.2" width="2" height="300.8" fill="#050097"/><rect x="500" y="608.2" width="1" height="300.8" fill="#0500a5"/><rect x="501" y="608.2" width="1" height="300.8" fill="#050097"/><rect x="502" y="608.2" width="2" height="300.8" fill="#0500a5"/><rect x="504" y="608.2" width="1" height="300.8" fill="#050097"/><rect x="505" y="608.2" width="2" height="300.8" fill="#0500a5"/><rect x="507" y="608.2" width="3" height="300.8" fill="#050097"/><rect x="510" y="608.2" width="1" height="300.8" fill="#0500a5"/><rect x="511" y="608.2" width="2" height="300.8" fill="#050097"/><rect x="513" y="608.2" width="3" height="300.8" fill="#0500a5"/><rect x="516" y="608.2" width="1" height="300.8" fill="#050097"/><rect x="517" y="608.2" width="1" height="300.8" fill="#2d00ce"/><rect x="518" y="608.2" width="1" height="300.8" fill="#ee306c"/><rect x="519" y="608.2" width="1" height="300.8" fill="#f9f955"/><rect x="520" y="608.2" width="1" height="300.8" fill="#fafa75"/><rect x="521" y="608.2" width="1" height="300.8" fill="#fafa80"/><rect x="522" y="608.2" width="2" height="300.8" fill="#fafa75"/><rect x="524" y="608.2" width="2" height="300.8" fill="#fafa80"/><rect x="526" y="608.2" width="2" height="300.8" fill="#fafa75"/><rect x="528" y="608.2" width="1" height="300.8" fill="#fafa6a"/><rect x="529" y="608.2" width="1" height="300.8" fill="#f8f82a"/><rect x="530" y="608.2" width="1" height="300.8" fill="#d30090"/><rect x="531" y="608.2" width="1" height="300.8" fill="#f3a42d"/><rect x="532" y="608.2" width="2" height="300.8" fill="#fafa6a"/><rect x="534" y="608.2" width="1" height="300.8" fill="#f9f955"/><rect x="535" y="608.2" width="2" height="300.8" fill="#fafa6a"/><rect x="537" y="608.2" width="1" height="300.8" fill="#f9f960"/><rect x="538" y="608.2" width="3" height="300.8" fill="#fafa6a"/><rect x="541" y="608.2" width="1" height="300.8" fill="#f9f955"/><rect x="542" y="608.2" width="1" height="300.8" fill="#f06d4a"/><rect x="543" y="608.2" width="1" height="300.8" fill="#ec0086"/><rect x="544" y="608.2" width="1" height="300.8" fill="#f6f60b"/><rect x="545" y="608.2" width="1" height="300.8" fill="#f8f840"/><rect x="546" y="608.2" width="2" height="300.8" fill="#f8f835"/><rect x="548" y="608.2" width="2" height="300.8" fill="#f8f840"/><rect x="550" y="608.2" width="3" height="300.8" fill="#f9f94a"/><rect x="553" y="608.2" width="1" height="300.8" fill="#f8f835"/><rect x="554" y="608.2" width="1" height="300.8" fill="#f5db0f"/><rect x="555" y="608.2" width="1" height="300.8" fill="#bf0097"/><rect x="556" y="608.2" width="1" height="300.8" fill="#f3b225"/><rect x="557" y="608.2" width="2" height="300.8" fill="#f8f835"/><rect x="559" y="608.2" width="2" height="300.8" fill="#f8f840"/><rect x="561" y="608.2" width="2" height="300.8" fill="#f8f835"/><rect x="563" y="608.2" width="2" height="300.8" fill="#f8f840"/><rect x="565" y="608.2" width="1" height="300.8" fill="#f8f82a"/><rect x="566" y="608.2" width="1" height="300.8" fill="#f6f60b"/><rect x="567" y="608.2" width="1" height="300.8" fill="#ed2273"/><rect x="568" y="608.2" width="1" height="300.8" fill="#ee2970"/><rect x="569" y="608.2" width="1" height="300.8" fill="#f7f715"/><rect x="570" y="608.2" width="1" height="300.8" fill="#f8f835"/><rect x="571" y="608.2" width="1" height="300.8" fill="#f8f840"/><rect x="572" y="608.2" width="1" height="300.8" fill="#f8f82a"/><rect x="573" y="608.2" width="2" height="300.8" fill="#f8f835"/><rect x="575" y="608.2" width="1" height="300.8" fill="#f8f840"/><rect x="576" y="608.2" width="2" height="300.8" fill="#f8f82a"/><rect x="578" y="608.2" width="1" height="300.8" fill="#f7f720"/><rect x="579" y="608.2" width="1" height="300.8" fill="#f3b225"/><rect x="580" y="608.2" width="1" height="300.8" fill="#b3009c"/><rect x="581" y="608.2" width="1" height="300.8" fill="#f4cd16"/><rect x="582" y="608.2" width="2" height="300.8" fill="#f8f835"/><rect x="584" y="608.2" width="4" height="300.8" fill="#f8f840"/><rect x="588" y="608.2" width="1" height="300.8" fill="#f8f835"/><rect x="589" y="608.2" width="1" height="300.8" fill="#f9f94a"/><rect x="590" y="608.2" width="1" height="300.8" fill="#f8f840"/><rect x="591" y="608.2" width="1" height="300.8" fill="#f7f715"/><rect x="592" y="608.2" width="1" height="300.8" fill="#ed0e7f"/><rect x="593" y="608.2" width="1" height="300.8" fill="#f06052"/><rect x="594" y="608.2" width="1" height="300.8" fill="#f8f840"/><rect x="595" y="608.2" width="3" height="300.8" fill="#f9f94a"/><rect x="598" y="608.2" width="1" height="300.8" fill="#f8f840"/><rect x="599" y="608.2" width="1" height="300.8" fill="#f9f94a"/><rect x="600" y="608.2" width="1" height="300.8" fill="#f8f840"/><rect x="601" y="608.2" width="2" height="300.8" fill="#f9f94a"/><rect x="603" y="608.2" width="1" height="300.8" fill="#f8f840"/><rect x="604" y="608.2" width="1" height="300.8" fill="#f29d30"/><rect x="605" y="608.2" width="1" height="300.8" fill="#c60094"/><rect x="606" y="608.2" width="1" height="300.8" fill="#f5e807"/><rect x="607" y="608.2" width="2" height="300.8" fill="#f8f840"/><rect x="609" y="608.2" width="5" height="300.8" fill="#f8f835"/><rect x="614" y="608.2" width="1" height="300.8" fill="#f8f82a"/><rect x="615" y="608.2" width="1" height="300.8" fill="#f8f835"/><rect x="616" y="608.2" width="1" height="300.8" fill="#f6ef04"/><rect x="617" y="608.2" width="1" height="300.8" fill="#d30090"/><rect x="618" y="608.2" width="1" height="300.8" fill="#f06d4a"/><rect x="619" y="608.2" width="1" height="300.8" fill="#f7f720"/><rect x="620" y="608.2" width="1" height="300.8" fill="#f8f82a"/><rect x="621" y="608.2" width="3" height="300.8" fill="#f8f835"/><rect x="624" y="608.2" width="2" height="300.8" fill="#f8f82a"/><rect x="626" y="608.2" width="1" height="300.8" fill="#f8f835"/><rect x="627" y="608.2" width="2" height="300.8" fill="#f8f82a"/><rect x="629" y="608.2" width="1" height="300.8" fill="#f17447"/><rect x="630" y="608.2" width="1" height="300.8" fill="#d9008d"/><rect x="631" y="608.2" width="1" height="300.8" fill="#f6ef04"/><rect x="632" y="608.2" width="3" height="300.8" fill="#f8f840"/><rect x="635" y="608.2" width="4" height="300.8" fill="#f8f835"/><rect x="639" y="608.2" width="1" height="300.8" fill="#f8f840"/><rect x="640" y="608.2" width="1" height="300.8" fill="#f8f835"/><rect x="641" y="608.2" width="1" height="300.8" fill="#f5e20b"/><rect x="642" y="608.2" width="1" height="300.8" fill="#cc0092"/><rect x="643" y="608.2" width="1" height="300.8" fill="#f3a42d"/><rect x="644" y="608.2" width="1" height="300.8" fill="#f8f840"/><rect x="645" y="608.2" width="1" height="300.8" fill="#f9f94a"/><rect x="646" y="608.2" width="1" height="300.8" fill="#f8f835"/><rect x="647" y="608.2" width="1" height="300.8" fill="#f8f840"/><rect x="648" y="608.2" width="1" height="300.8" fill="#f8f835"/><rect x="649" y="608.2" width="2" height="300.8" fill="#f8f840"/><rect x="651" y="608.2" width="1" height="300.8" fill="#f9f94a"/><rect x="652" y="608.2" width="1" height="300.8" fill="#f8f840"/><rect x="653" y="608.2" width="1" height="300.8" fill="#f8f835"/><rect x="654" y="608.2" width="1" height="300.8" fill="#f0664e"/><rect x="655" y="608.2" width="1" height="300.8" fill="#ed1b77"/><rect x="656" y="608.2" width="1" height="300.8" fill="#f7f715"/><rect x="657" y="608.2" width="3" height="300.8" fill="#f8f835"/><rect x="660" y="608.2" width="4" height="300.8" fill="#f8f840"/><rect x="664" y="608.2" width="1" height="300.8" fill="#f8f835"/><rect x="665" y="608.2" width="1" height="300.8" fill="#f8f840"/><rect x="666" y="608.2" width="1" height="300.8" fill="#f5d413"/><rect x="667" y="608.2" width="1" height="300.8" fill="#b90099"/><rect x="668" y="608.2" width="1" height="300.8" fill="#f4b822"/><rect x="669" y="608.2" width="1" height="300.8" fill="#f8f835"/><rect x="670" y="608.2" width="2" height="300.8" fill="#f8f840"/><rect x="672" y="608.2" width="4" height="300.8" fill="#f8f835"/><rect x="676" y="608.2" width="1" height="300.8" fill="#f8f840"/><rect x="677" y="608.2" width="1" height="300.8" fill="#f8f835"/><rect x="678" y="608.2" width="1" height="300.8" fill="#f6f60b"/><rect x="679" y="608.2" width="1" height="300.8" fill="#ed1b77"/><rect x="680" y="608.2" width="1" height="300.8" fill="#ee3768"/><rect x="681" y="608.2" width="1" height="300.8" fill="#f7f715"/><rect x="682" y="608.2" width="1" height="300.8" fill="#f8f82a"/><rect x="683" y="608.2" width="5" height="300.8" fill="#f8f840"/><rect x="688" y="608.2" width="1" height="300.8" fill="#f8f835"/><rect x="689" y="608.2" width="1" height="300.8" fill="#f9f94a"/><rect x="690" y="608.2" width="1" height="300.8" fill="#f8f840"/><rect x="691" y="608.2" width="1" height="300.8" fill="#f4b822"/><rect x="692" y="608.2" width="1" height="300.8" fill="#b90099"/><rect x="693" y="608.2" width="1" height="300.8" fill="#f5e20b"/><rect x="694" y="608.2" width="1" height="300.8" fill="#f9f955"/><rect x="695" y="608.2" width="3" height="300.8" fill="#f9f94a"/><rect x="698" y="608.2" width="1" height="300.8" fill="#f9f955"/><rect x="699" y="608.2" width="1" height="300.8" fill="#f9f94a"/><rect x="700" y="608.2" width="2" height="300.8" fill="#f8f840"/><rect x="702" y="608.2" width="1" height="300.8" fill="#f9f955"/><rect x="703" y="608.2" width="1" height="300.8" fill="#f8f82a"/><rect x="704" y="608.2" width="1" height="300.8" fill="#ed0e7f"/><rect x="705" y="608.2" width="1" height="300.8" fill="#f06d4a"/><rect x="706" y="608.2" width="1" height="300.8" fill="#f8f840"/><rect x="707" y="608.2" width="1" height="300.8" fill="#f9f955"/><rect x="708" y="608.2" width="1" height="300.8" fill="#f9f94a"/><rect x="709" y="608.2" width="2" height="300.8" fill="#f9f955"/><rect x="711" y="608.2" width="1" height="300.8" fill="#f8f840"/><rect x="712" y="608.2" width="3" height="300.8" fill="#f9f94a"/><rect x="715" y="608.2" width="1" height="300.8" fill="#f8f835"/><rect x="716" y="608.2" width="1" height="300.8" fill="#f29634"/><rect x="717" y="608.2" width="1" height="300.8" fill="#d30090"/><rect x="718" y="608.2" width="1" height="300.8" fill="#f6ef04"/><rect x="719" y="608.2" width="5" height="300.8" fill="#f9f94a"/><rect x="724" y="608.2" width="4" height="300.8" fill="#f8f840"/><rect x="728" y="608.2" width="1" height="300.8" fill="#f6ef04"/><rect x="729" y="608.2" width="1" height="300.8" fill="#df008b"/><rect x="730" y="608.2" width="1" height="300.8" fill="#f29038"/><rect x="731" y="608.2" width="2" height="300.8" fill="#f8f835"/><rect x="733" y="608.2" width="1" height="300.8" fill="#f8f840"/><rect x="734" y="608.2" width="1" height="300.8" fill="#f8f835"/><rect x="735" y="608.2" width="1" height="300.8" fill="#f8f840"/><rect x="736" y="608.2" width="1" height="300.8" fill="#f8f835"/><rect x="737" y="608.2" width="1" height="300.8" fill="#f8f840"/><rect x="738" y="608.2" width="1" height="300.8" fill="#f8f835"/><rect x="739" y="608.2" width="1" height="300.8" fill="#f8f840"/><rect x="740" y="608.2" width="1" height="300.8" fill="#f8f835"/><rect x="741" y="608.2" width="1" height="300.8" fill="#f17447"/><rect x="742" y="608.2" width="1" height="300.8" fill="#ec0782"/><rect x="743" y="608.2" width="1" height="300.8" fill="#f6f60b"/><rect x="744" y="608.2" width="3" height="300.8" fill="#f8f840"/><rect x="747" y="608.2" width="1" height="300.8" fill="#f8f835"/><rect x="748" y="608.2" width="3" height="300.8" fill="#f8f840"/><rect x="751" y="608.2" width="1" height="300.8" fill="#f9f94a"/><rect x="752" y="608.2" width="1" height="300.8" fill="#f8f840"/><rect x="753" y="608.2" width="1" height="300.8" fill="#f5e20b"/><rect x="754" y="608.2" width="1" height="300.8" fill="#cc0092"/><rect x="755" y="608.2" width="1" height="300.8" fill="#f3b225"/><rect x="756" y="608.2" width="2" height="300.8" fill="#f8f835"/><rect x="758" y="608.2" width="1" height="300.8" fill="#f9f94a"/><rect x="759" y="608.2" width="1" height="300.8" fill="#f8f840"/><rect x="760" y="608.2" width="1" height="300.8" fill="#f8f835"/><rect x="761" y="608.2" width="2" height="300.8" fill="#f9f94a"/><rect x="763" y="608.2" width="2" height="300.8" fill="#f8f840"/><rect x="765" y="608.2" width="1" height="300.8" fill="#f8f82a"/><rect x="766" y="608.2" width="1" height="300.8" fill="#ee3d65"/><rect x="767" y="608.2" width="1" height="300.8" fill="#ed157b"/><rect x="768" y="608.2" width="1" height="300.8" fill="#f7f715"/><rect x="769" y="608.2" width="1" height="300.8" fill="#f8f840"/><rect x="770" y="608.2" width="1" height="300.8" fill="#f8f835"/><rect x="771" y="608.2" width="2" height="300.8" fill="#f8f840"/><rect x="773" y="608.2" width="4" height="300.8" fill="#f8f835"/><rect x="777" y="608.2" width="1" height="300.8" fill="#f9f94a"/><rect x="778" y="608.2" width="1" height="300.8" fill="#f5d413"/><rect x="779" y="608.2" width="1" height="300.8" fill="#c60094"/><rect x="780" y="608.2" width="1" height="300.8" fill="#f5d413"/><rect x="781" y="608.2" width="1" height="300.8" fill="#f9f94a"/><rect x="782" y="608.2" width="2" height="300.8" fill="#f8f840"/><rect x="784" y="608.2" width="1" height="300.8" fill="#f8f835"/><rect x="785" y="608.2" width="2" height="300.8" fill="#f9f94a"/><rect x="787" y="608.2" width="2" height="300.8" fill="#f8f840"/><rect x="789" y="608.2" width="1" height="300.8" fill="#f9f94a"/><rect x="790" y="608.2" width="1" height="300.8" fill="#f8f840"/><rect x="791" y="608.2" width="1" height="300.8" fill="#f05956"/><rect x="792" y="608.2" width="1" height="300.8" fill="#4000c6"/><rect x="793" y="608.2" width="1" height="300.8" fill="#0500a5"/><rect x="794" y="608.2" width="1" height="300.8" fill="#050097"/><rect x="795" y="608.2" width="2" height="300.8" fill="#0500a5"/><rect x="797" y="608.2" width="1" height="300.8" fill="#050097"/><rect x="798" y="608.2" width="1" height="300.8" fill="#0500a5"/><rect x="799" y="608.2" width="1" height="300.8" fill="#050097"/><rect x="800" y="608.2" width="3" height="300.8" fill="#0500a5"/><rect x="803" y="608.2" width="1" height="300.8" fill="#050097"/><rect x="804" y="608.2" width="1" height="300.8" fill="#0500a5"/><rect x="805" y="608.2" width="1" height="300.8" fill="#ee3d65"/><rect x="806" y="608.2" width="1" height="300.8" fill="#f7f720"/><rect x="807" y="608.2" width="1" height="300.8" fill="#f8f835"/><rect x="808" y="608.2" width="2" height="300.8" fill="#f8f82a"/><rect x="810" y="608.2" width="5" height="300.8" fill="#f8f835"/><rect x="815" y="608.2" width="1" height="300.8" fill="#f6f600"/><rect x="816" y="608.2" width="1" height="300.8" fill="#e60088"/><rect x="817" y="608.2" width="1" height="300.8" fill="#f17447"/><rect x="818" y="608.2" width="1" height="300.8" fill="#f8f835"/><rect x="819" y="608.2" width="3" height="300.8" fill="#f8f840"/><rect x="822" y="608.2" width="1" height="300.8" fill="#f8f835"/><rect x="823" y="608.2" width="2" height="300.8" fill="#f8f82a"/><rect x="825" y="608.2" width="1" height="300.8" fill="#f8f835"/><rect x="826" y="608.2" width="2" height="300.8" fill="#f8f82a"/><rect x="828" y="608.2" width="1" height="300.8" fill="#f17b43"/><rect x="829" y="608.2" width="1" height="300.8" fill="#cc0092"/><rect x="830" y="608.2" width="1" height="300.8" fill="#f5e807"/><rect x="831" y="608.2" width="1" height="300.8" fill="#f8f82a"/><rect x="832" y="608.2" width="1" height="300.8" fill="#f7f720"/><rect x="833" y="608.2" width="6" height="300.8" fill="#f8f82a"/><rect x="839" y="608.2" width="1" height="300.8" fill="#f7f720"/><rect x="840" y="608.2" width="1" height="300.8" fill="#f5db0f"/><rect x="841" y="608.2" width="1" height="300.8" fill="#bf0097"/><rect x="842" y="608.2" width="1" height="300.8" fill="#f2893c"/><rect x="843" y="608.2" width="1" height="300.8" fill="#f8f82a"/><rect x="844" y="608.2" width="1" height="300.8" fill="#f7f720"/><rect x="845" y="608.2" width="1" height="300.8" fill="#f7f715"/><rect x="846" y="608.2" width="4" height="300.8" fill="#f7f720"/><rect x="850" y="608.2" width="1" height="300.8" fill="#f6f60b"/><rect x="851" y="608.2" width="1" height="300.8" fill="#f7f715"/><rect x="852" y="608.2" width="1" height="300.8" fill="#f6f60b"/><rect x="853" y="608.2" width="1" height="300.8" fill="#ef5259"/><rect x="854" y="608.2" width="1" height="300.8" fill="#e60088"/><rect x="855" y="608.2" width="1" height="300.8" fill="#f5e807"/><rect x="856" y="608.2" width="2" height="300.8" fill="#f7f715"/><rect x="858" y="608.2" width="1" height="300.8" fill="#f6f60b"/><rect x="859" y="608.2" width="4" height="300.8" fill="#f7f715"/><rect x="863" y="608.2" width="1" height="300.8" fill="#f7f720"/><rect x="864" y="608.2" width="1" height="300.8" fill="#f7f715"/><rect x="865" y="608.2" width="1" height="300.8" fill="#f4b822"/><rect x="866" y="608.2" width="1" height="300.8" fill="#9900a5"/><rect x="867" y="608.2" width="1" height="300.8" fill="#f29d30"/><rect x="868" y="608.2" width="1" height="300.8" fill="#f6f60b"/><rect x="869" y="608.2" width="1" height="300.8" fill="#f7f715"/><rect x="870" y="608.2" width="1" height="300.8" fill="#f7f720"/><rect x="871" y="608.2" width="5" height="300.8" fill="#f7f715"/><rect x="876" y="608.2" width="1" height="300.8" fill="#f6f60b"/><rect x="877" y="608.2" width="1" height="300.8" fill="#f6ef04"/><rect x="878" y="608.2" width="1" height="300.8" fill="#ec0782"/><rect x="879" y="608.2" width="1" height="300.8" fill="#ed157b"/><rect x="880" y="608.2" width="1" height="300.8" fill="#f6ef04"/><rect x="881" y="608.2" width="1" height="300.8" fill="#f6f60b"/><rect x="882" y="608.2" width="1" height="300.8" fill="#f6f600"/><rect x="883" y="608.2" width="3" height="300.8" fill="#f7f715"/><rect x="886" y="608.2" width="1" height="300.8" fill="#f6f60b"/><rect x="887" y="608.2" width="2" height="300.8" fill="#f6f600"/><rect x="889" y="608.2" width="1" height="300.8" fill="#f6f60b"/><rect x="890" y="608.2" width="1" height="300.8" fill="#f29634"/><rect x="891" y="608.2" width="1" height="300.8" fill="#9900a5"/><rect x="892" y="608.2" width="1" height="300.8" fill="#f3b225"/><rect x="893" y="608.2" width="1" height="300.8" fill="#f6ef04"/><rect x="894" y="608.2" width="2" height="300.8" fill="#f6f600"/><rect x="896" y="608.2" width="1" height="300.8" fill="#f6ef04"/><rect x="897" y="608.2" width="1" height="300.8" fill="#f6f600"/><rect x="898" y="608.2" width="1" height="300.8" fill="#f6f60b"/><rect x="899" y="608.2" width="1" height="300.8" fill="#f6f600"/><rect x="900" y="608.2" width="1" height="300.8" fill="#f6ef04"/><rect x="901" y="608.2" width="1" height="300.8" fill="#f6f600"/><rect x="902" y="608.2" width="1" height="300.8" fill="#f5db0f"/><rect x="903" y="608.2" width="1" height="300.8" fill="#e60088"/><rect x="904" y="608.2" width="1" height="300.8" fill="#ef4b5d"/><rect x="905" y="608.2" width="1" height="300.8" fill="#f5e807"/><rect x="906" y="608.2" width="5" height="300.8" fill="#f6ef04"/><rect x="911" y="608.2" width="1" height="300.8" fill="#f6f600"/><rect x="912" y="608.2" width="3" height="300.8" fill="#f5e807"/><rect x="915" y="608.2" width="1" height="300.8" fill="#f06d4a"/><rect x="916" y="608.2" width="1" height="300.8" fill="#ac009e"/><rect x="917" y="608.2" width="1" height="300.8" fill="#f4bf1e"/><rect x="918" y="608.2" width="4" height="300.8" fill="#f6ef04"/><rect x="922" y="608.2" width="1" height="300.8" fill="#f6f600"/><rect x="923" y="608.2" width="1" height="300.8" fill="#f6ef04"/><rect x="924" y="608.2" width="2" height="300.8" fill="#f5e807"/><rect x="926" y="608.2" width="1" height="300.8" fill="#f6f600"/><rect x="927" y="608.2" width="1" height="300.8" fill="#f4c61a"/><rect x="928" y="608.2" width="1" height="300.8" fill="#bf0097"/><rect x="929" y="608.2" width="1" height="300.8" fill="#f06052"/><rect x="930" y="608.2" width="3" height="300.8" fill="#f6ef04"/><rect x="933" y="608.2" width="2" height="300.8" fill="#f6f600"/><rect x="935" y="608.2" width="1" height="300.8" fill="#f6ef04"/><rect x="936" y="608.2" width="1" height="300.8" fill="#f6f600"/><rect x="937" y="608.2" width="1" height="300.8" fill="#f6ef04"/><rect x="938" y="608.2" width="1" height="300.8" fill="#f6f600"/><rect x="939" y="608.2" width="1" height="300.8" fill="#f6ef04"/><rect x="940" y="608.2" width="1" height="300.8" fill="#ef4461"/><rect x="941" y="608.2" width="1" height="300.8" fill="#bf0097"/><rect x="942" y="608.2" width="1" height="300.8" fill="#f4c61a"/><rect x="943" y="608.2" width="2" height="300.8" fill="#f5e807"/><rect x="945" y="608.2" width="2" height="300.8" fill="#f6ef04"/><rect x="947" y="608.2" width="1" height="300.8" fill="#f6f600"/><rect x="948" y="608.2" width="1" height="300.8" fill="#f6ef04"/><rect x="949" y="608.2" width="1" height="300.8" fill="#f5e807"/><rect x="950" y="608.2" width="2" height="300.8" fill="#f6ef04"/><rect x="952" y="608.2" width="1" height="300.8" fill="#f3b225"/><rect x="953" y="608.2" width="1" height="300.8" fill="#ac009e"/><rect x="954" y="608.2" width="1" height="300.8" fill="#f17b43"/><rect x="955" y="608.2" width="1" height="300.8" fill="#f6f600"/><rect x="956" y="608.2" width="1" height="300.8" fill="#f6ef04"/><rect x="957" y="608.2" width="2" height="300.8" fill="#f5e807"/><rect x="959" y="608.2" width="1" height="300.8" fill="#f6ef04"/><rect x="960" y="608.2" width="2" height="300.8" fill="#f5e807"/><rect x="962" y="608.2" width="2" height="300.8" fill="#f6ef04"/><rect x="964" y="608.2" width="1" height="300.8" fill="#f5e20b"/><rect x="965" y="608.2" width="1" height="300.8" fill="#ee2970"/><rect x="966" y="608.2" width="1" height="300.8" fill="#d9008d"/><rect x="967" y="608.2" width="1" height="300.8" fill="#f5db0f"/><rect x="968" y="608.2" width="2" height="300.8" fill="#f5e807"/><rect x="970" y="608.2" width="1" height="300.8" fill="#f6ef04"/><rect x="971" y="608.2" width="1" height="300.8" fill="#f6f600"/><rect x="972" y="608.2" width="1" height="300.8" fill="#f6f60b"/><rect x="973" y="608.2" width="4" height="300.8" fill="#f6ef04"/><rect x="977" y="608.2" width="1" height="300.8" fill="#f29d30"/><rect x="978" y="608.2" width="1" height="300.8" fill="#8d00aa"/><rect x="979" y="608.2" width="1" height="300.8" fill="#f29634"/><rect x="980" y="608.2" width="1" height="300.8" fill="#f5e20b"/><rect x="981" y="608.2" width="6" height="300.8" fill="#f5e807"/><rect x="987" y="608.2" width="2" height="300.8" fill="#f5e20b"/><rect x="989" y="608.2" width="1" height="300.8" fill="#f4cd16"/><rect x="990" y="608.2" width="1" height="300.8" fill="#e60088"/><rect x="991" y="608.2" width="1" height="300.8" fill="#ed2273"/><rect x="992" y="608.2" width="1" height="300.8" fill="#f5d413"/><rect x="993" y="608.2" width="1" height="300.8" fill="#f5db0f"/><rect x="994" y="608.2" width="4" height="300.8" fill="#f5e20b"/><rect x="998" y="608.2" width="2" height="300.8" fill="#f5d413"/><rect x="1000" y="608.2" width="1" height="300.8" fill="#f5e20b"/><rect x="1001" y="608.2" width="1" height="300.8" fill="#f5db0f"/><rect x="1002" y="608.2" width="1" height="300.8" fill="#f06d4a"/><rect x="1003" y="608.2" width="1" height="300.8" fill="#9900a5"/><rect x="1004" y="608.2" width="1" height="300.8" fill="#f29d30"/><rect x="1005" y="608.2" width="3" height="300.8" fill="#f5d413"/><rect x="1008" y="608.2" width="2" height="300.8" fill="#f5db0f"/><rect x="1010" y="608.2" width="1" height="300.8" fill="#f5e20b"/><rect x="1011" y="608.2" width="3" height="300.8" fill="#f5db0f"/><rect x="1014" y="608.2" width="1" height="300.8" fill="#f3b225"/><rect x="1015" y="608.2" width="1" height="300.8" fill="#b90099"/><rect x="1016" y="608.2" width="1" height="300.8" fill="#ee306c"/><rect x="1017" y="608.2" width="1" height="300.8" fill="#f4cd16"/><rect x="1018" y="608.2" width="1" height="300.8" fill="#f5d413"/><rect x="1019" y="608.2" width="1" height="300.8" fill="#f5db0f"/><rect x="1020" y="608.2" width="1" height="300.8" fill="#f5e20b"/><rect x="1021" y="608.2" width="1" height="300.8" fill="#f5db0f"/><rect x="1022" y="608.2" width="2" height="300.8" fill="#f5d413"/><rect x="1024" y="608.2" width="1" height="300.8" fill="#f5e20b"/><rect x="1025" y="608.2" width="1" height="300.8" fill="#f5d413"/><rect x="1026" y="608.2" width="1" height="300.8" fill="#f4cd16"/><rect x="1027" y="608.2" width="1" height="300.8" fill="#f06052"/><rect x="1028" y="608.2" width="1" height="300.8" fill="#bf0097"/><rect x="1029" y="608.2" width="1" height="300.8" fill="#f4b822"/><rect x="1030" y="608.2" width="1" height="300.8" fill="#f5db0f"/><rect x="1031" y="608.2" width="1" height="300.8" fill="#f4cd16"/><rect x="1032" y="608.2" width="2" height="300.8" fill="#f5d413"/><rect x="1034" y="608.2" width="1" height="300.8" fill="#f4cd16"/><rect x="1035" y="608.2" width="1" height="300.8" fill="#f5d413"/><rect x="1036" y="608.2" width="1" height="300.8" fill="#f5db0f"/><rect x="1037" y="608.2" width="1" height="300.8" fill="#f5d413"/><rect x="1038" y="608.2" width="1" height="300.8" fill="#f4c61a"/><rect x="1039" y="608.2" width="1" height="300.8" fill="#f29d30"/><rect x="1040" y="608.2" width="1" height="300.8" fill="#ac009e"/><rect x="1041" y="608.2" width="1" height="300.8" fill="#ef4b5d"/><rect x="1042" y="608.2" width="1" height="300.8" fill="#f4c61a"/><rect x="1043" y="608.2" width="5" height="300.8" fill="#f4cd16"/><rect x="1048" y="608.2" width="4" height="300.8" fill="#f4c61a"/><rect x="1052" y="608.2" width="1" height="300.8" fill="#ee2970"/><rect x="1053" y="608.2" width="1" height="300.8" fill="#b90099"/><rect x="1054" y="608.2" width="1" height="300.8" fill="#f3ab29"/><rect x="1055" y="608.2" width="2" height="300.8" fill="#f4c61a"/><rect x="1057" y="608.2" width="1" height="300.8" fill="#f4cd16"/><rect x="1058" y="608.2" width="1" height="300.8" fill="#f4c61a"/><rect x="1059" y="608.2" width="3" height="300.8" fill="#f4cd16"/><rect x="1062" y="608.2" width="1" height="300.8" fill="#f4c61a"/><rect x="1063" y="608.2" width="1" height="300.8" fill="#f4cd16"/><rect x="1064" y="608.2" width="1" height="300.8" fill="#f29634"/><rect x="1065" y="608.2" width="1" height="300.8" fill="#8600ac"/><rect x="1066" y="608.2" width="1" height="300.8" fill="#f06d4a"/><rect x="1067" y="608.2" width="3" height="300.8" fill="#f4cd16"/><rect x="1070" y="608.2" width="1" height="300.8" fill="#f5db0f"/><rect x="1071" y="608.2" width="1" height="300.8" fill="#f5d413"/><rect x="1072" y="608.2" width="2" height="300.8" fill="#f5db0f"/><rect x="1074" y="608.2" width="2" height="300.8" fill="#f5d413"/><rect x="1076" y="608.2" width="1" height="300.8" fill="#f4bf1e"/><rect x="1077" y="608.2" width="1" height="300.8" fill="#ed157b"/><rect x="1078" y="608.2" width="1" height="300.8" fill="#e60088"/><rect x="1079" y="608.2" width="1" height="300.8" fill="#f4c61a"/><rect x="1080" y="608.2" width="1" height="300.8" fill="#f5db0f"/><rect x="1081" y="608.2" width="5" height="300.8" fill="#f5e20b"/><rect x="1086" y="608.2" width="1" height="300.8" fill="#f5d413"/><rect x="1087" y="608.2" width="2" height="300.8" fill="#f5e20b"/><rect x="1089" y="608.2" width="1" height="300.8" fill="#f1823f"/><rect x="1090" y="608.2" width="1" height="300.8" fill="#9900a5"/><rect x="1091" y="608.2" width="1" height="300.8" fill="#f29d30"/><rect x="1092" y="608.2" width="2" height="300.8" fill="#f5e20b"/><rect x="1094" y="608.2" width="1" height="300.8" fill="#f5db0f"/><rect x="1095" y="608.2" width="1" height="300.8" fill="#f5e20b"/><rect x="1096" y="608.2" width="1" height="300.8" fill="#f5d413"/><rect x="1097" y="608.2" width="3" height="300.8" fill="#f5db0f"/><rect x="1100" y="608.2" width="1" height="300.8" fill="#f5d413"/><rect x="1101" y="608.2" width="1" height="300.8" fill="#f4c61a"/><rect x="1102" y="608.2" width="1" height="300.8" fill="#ee2970"/><rect x="1103" y="608.2" width="1" height="300.8" fill="#3a00c9"/><rect x="1104" y="608.2" width="1" height="300.8" fill="#050097"/><rect x="1105" y="608.2" width="2" height="300.8" fill="#0500a5"/><rect x="1107" y="608.2" width="4" height="300.8" fill="#050097"/><rect x="1111" y="608.2" width="1" height="300.8" fill="#0500a5"/><rect x="1112" y="608.2" width="1" height="300.8" fill="#050097"/><rect x="1113" y="608.2" width="1" height="300.8" fill="#04008a"/><rect x="1114" y="608.2" width="1" height="300.8" fill="#0500a5"/><rect x="1115" y="608.2" width="1" height="300.8" fill="#04008a"/><rect x="1116" y="608.2" width="1" height="300.8" fill="#0500a5"/><rect x="1117" y="608.2" width="2" height="300.8" fill="#050097"/><rect x="1119" y="608.2" width="1" height="300.8" fill="#0500a5"/><rect x="1120" y="608.2" width="3" height="300.8" fill="#050097"/><rect x="1123" y="608.2" width="4" height="300.8" fill="#0500a5"/><rect x="1127" y="608.2" width="1" height="300.8" fill="#050097"/><rect x="1128" y="608.2" width="1" height="300.8" fill="#0500a5"/><rect x="1129" y="608.2" width="4" height="300.8" fill="#050097"/><rect x="1133" y="608.2" width="1" height="300.8" fill="#0500a5"/><rect x="1134" y="608.2" width="2" height="300.8" fill="#050097"/><rect x="1136" y="608.2" width="1" height="300.8" fill="#0500a5"/><rect x="1137" y="608.2" width="2" height="300.8" fill="#050097"/><rect x="1139" y="608.2" width="1" height="300.8" fill="#2d00ce"/><rect x="1140" y="608.2" width="1" height="300.8" fill="#ed157b"/><rect x="1141" y="608.2" width="1" height="300.8" fill="#f5e807"/><rect x="1142" y="608.2" width="5" height="300.8" fill="#f6f60b"/><rect x="1147" y="608.2" width="3" height="300.8" fill="#f6f600"/><rect x="1150" y="608.2" width="1" height="300.8" fill="#f6ef04"/><rect x="1151" y="608.2" width="1" height="300.8" fill="#f4b822"/><rect x="1152" y="608.2" width="1" height="300.8" fill="#a000a3"/><rect x="1153" y="608.2" width="1" height="300.8" fill="#f17447"/><rect x="1154" y="608.2" width="2" height="300.8" fill="#f6f600"/><rect x="1156" y="608.2" width="5" height="300.8" fill="#f7f715"/><rect x="1161" y="608.2" width="1" height="300.8" fill="#f7f720"/><rect x="1162" y="608.2" width="1" height="300.8" fill="#f7f715"/><rect x="1163" y="608.2" width="1" height="300.8" fill="#f6f600"/><rect x="1164" y="608.2" width="1" height="300.8" fill="#ee3d65"/><rect x="1165" y="608.2" width="1" height="300.8" fill="#df008b"/><rect x="1166" y="608.2" width="1" height="300.8" fill="#f5db0f"/><rect x="1167" y="608.2" width="5" height="300.8" fill="#f6f600"/><rect x="1172" y="608.2" width="1" height="300.8" fill="#f6ef04"/><rect x="1173" y="608.2" width="2" height="300.8" fill="#f6f600"/><rect x="1175" y="608.2" width="1" height="300.8" fill="#f6f60b"/><rect x="1176" y="608.2" width="1" height="300.8" fill="#f3b225"/><rect x="1177" y="608.2" width="1" height="300.8" fill="#a600a0"/><rect x="1178" y="608.2" width="1" height="300.8" fill="#f29d30"/><rect x="1179" y="608.2" width="2" height="300.8" fill="#f6f600"/><rect x="1181" y="608.2" width="2" height="300.8" fill="#f6ef04"/><rect x="1183" y="608.2" width="1" height="300.8" fill="#f6f60b"/><rect x="1184" y="608.2" width="4" height="300.8" fill="#f6f600"/><rect x="1188" y="608.2" width="1" height="300.8" fill="#f5e807"/><rect x="1189" y="608.2" width="1" height="300.8" fill="#ed0e7f"/><rect x="1190" y="608.2" width="1" height="300.8" fill="#ee2970"/><rect x="1191" y="608.2" width="1" height="300.8" fill="#f6ef04"/><rect x="1192" y="608.2" width="1" height="300.8" fill="#f6f60b"/><rect x="1193" y="608.2" width="1" height="300.8" fill="#f7f720"/><rect x="1194" y="608.2" width="1" height="300.8" fill="#f7f715"/><rect x="1195" y="608.2" width="1" height="300.8" fill="#f7f720"/><rect x="1196" y="608.2" width="1" height="300.8" fill="#f7f715"/><rect x="1197" y="608.2" width="3" height="300.8" fill="#f6f60b"/><rect x="1200" y="608.2" width="1" height="300.8" fill="#f6ef04"/><rect x="1201" y="608.2" width="1" height="300.8" fill="#f29038"/><rect x="1202" y="608.2" width="1" height="300.8" fill="#9900a5"/><rect x="1203" y="608.2" width="1" height="300.8" fill="#f3b225"/><rect x="1204" y="608.2" width="1" height="300.8" fill="#f6ef04"/><rect x="1205" y="608.2" width="3" height="300.8" fill="#f5e807"/><rect x="1208" y="608.2" width="4" height="300.8" fill="#f5db0f"/><rect x="1212" y="608.2" width="1" height="300.8" fill="#f4cd16"/><rect x="1213" y="608.2" width="1" height="300.8" fill="#f4bf1e"/><rect x="1214" y="608.2" width="1" height="300.8" fill="#ed0e7f"/><rect x="1215" y="608.2" width="1" height="300.8" fill="#050097"/><rect x="1216" y="608.2" width="2" height="300.8" fill="#0500a5"/><rect x="1218" y="608.2" width="1" height="300.8" fill="#050097"/><rect x="1219" y="608.2" width="2" height="300.8" fill="#0500a5"/><rect x="1221" y="608.2" width="6" height="300.8" fill="#050097"/><rect x="1227" y="608.2" width="1" height="300.8" fill="#04008a"/><rect x="1228" y="608.2" width="1" height="300.8" fill="#0500a5"/><rect x="1229" y="608.2" width="2" height="300.8" fill="#050097"/><rect x="1231" y="608.2" width="1" height="300.8" fill="#0500a5"/><rect x="1232" y="608.2" width="2" height="300.8" fill="#050097"/><rect x="1234" y="608.2" width="1" height="300.8" fill="#0500a5"/><rect x="1235" y="608.2" width="1" height="300.8" fill="#04008a"/><rect x="1236" y="608.2" width="2" height="300.8" fill="#050097"/><rect x="1238" y="608.2" width="2" height="300.8" fill="#0500a5"/><rect x="1240" y="608.2" width="4" height="300.8" fill="#050097"/><rect x="1244" y="608.2" width="2" height="300.8" fill="#0500a5"/><rect x="1246" y="608.2" width="4" height="300.8" fill="#050097"/><rect x="1250" y="608.2" width="1" height="300.8" fill="#0500a5"/><rect x="1251" y="608.2" width="1" height="300.8" fill="#050097"/><rect x="1252" y="608.2" width="1" height="300.8" fill="#0500a5"/><rect x="1253" y="608.2" width="1" height="300.8" fill="#04008a"/><rect x="1254" y="608.2" width="2" height="300.8" fill="#050097"/><rect x="1256" y="608.2" width="1" height="300.8" fill="#0500a5"/><rect x="1257" y="608.2" width="4" height="300.8" fill="#050097"/><rect x="1261" y="608.2" width="1" height="300.8" fill="#0500a5"/><rect x="1262" y="608.2" width="2" height="300.8" fill="#050097"/><rect x="1264" y="608.2" width="1" height="300.8" fill="#9300a7"/><rect x="1265" y="608.2" width="2" height="300.8" fill="#f4c61a"/><rect x="1267" y="608.2" width="5" height="300.8" fill="#f4cd16"/><rect x="1272" y="608.2" width="2" height="300.8" fill="#f4c61a"/><rect x="1274" y="608.2" width="2" height="300.8" fill="#f5d413"/><rect x="1276" y="608.2" width="1" height="300.8" fill="#f4cd16"/><rect x="1277" y="608.2" width="1" height="300.8" fill="#f5db0f"/><rect x="1278" y="608.2" width="1" height="300.8" fill="#f5d413"/><rect x="1279" y="608.2" width="1" height="300.8" fill="#f5db0f"/><rect x="1280" y="608.2" width="1" height="300.8" fill="#f4c61a"/><rect x="1281" y="608.2" width="2" height="300.8" fill="#f5d413"/><rect x="1283" y="608.2" width="1" height="300.8" fill="#f5db0f"/><rect x="1284" y="608.2" width="2" height="300.8" fill="#f4c61a"/><rect x="1286" y="608.2" width="1" height="300.8" fill="#f5db0f"/><rect x="1287" y="608.2" width="1" height="300.8" fill="#f4c61a"/><rect x="1288" y="608.2" width="2" height="300.8" fill="#f5db0f"/><rect x="1290" y="608.2" width="2" height="300.8" fill="#f4c61a"/><rect x="1292" y="608.2" width="1" height="300.8" fill="#f5d413"/><rect x="1293" y="608.2" width="2" height="300.8" fill="#f4c61a"/><rect x="1295" y="608.2" width="1" height="300.8" fill="#f5d413"/><rect x="1296" y="608.2" width="1" height="300.8" fill="#f4cd16"/><rect x="1297" y="608.2" width="1" height="300.8" fill="#f5d413"/><rect x="1298" y="608.2" width="1" height="300.8" fill="#f4c61a"/><rect x="1299" y="608.2" width="1" height="300.8" fill="#f4cd16"/><rect x="1300" y="608.2" width="1" height="300.8" fill="#f5d413"/><rect x="1301" y="608.2" width="1" height="300.8" fill="#f4bf1e"/><rect x="1302" y="608.2" width="1" height="300.8" fill="#f4c61a"/><rect x="1303" y="608.2" width="1" height="300.8" fill="#f5d413"/><rect x="1304" y="608.2" width="2" height="300.8" fill="#f5db0f"/><rect x="1306" y="608.2" width="1" height="300.8" fill="#f4c61a"/><rect x="1307" y="608.2" width="1" height="300.8" fill="#f4cd16"/><rect x="1308" y="608.2" width="1" height="300.8" fill="#f5d413"/><rect x="1309" y="608.2" width="1" height="300.8" fill="#f4cd16"/><rect x="1310" y="608.2" width="1" height="300.8" fill="#f5d413"/><rect x="1311" y="608.2" width="1" height="300.8" fill="#f4c61a"/><rect x="1312" y="608.2" width="1" height="300.8" fill="#f4bf1e"/><rect x="1313" y="608.2" width="1" height="300.8" fill="#f4c61a"/><rect x="1314" y="608.2" width="1" height="300.8" fill="#a600a0"/><rect x="1315" y="608.2" width="1" height="300.8" fill="#f29038"/><rect x="1316" y="608.2" width="2" height="300.8" fill="#f4c61a"/><rect x="1318" y="608.2" width="2" height="300.8" fill="#f4cd16"/><rect x="1320" y="608.2" width="1" height="300.8" fill="#f4c61a"/><rect x="1321" y="608.2" width="1" height="300.8" fill="#f4cd16"/><rect x="1322" y="608.2" width="2" height="300.8" fill="#f5db0f"/><rect x="1324" y="608.2" width="1" height="300.8" fill="#f5d413"/><rect x="1325" y="608.2" width="1" height="300.8" fill="#f5db0f"/><rect x="1326" y="608.2" width="1" height="300.8" fill="#f4cd16"/><rect x="1327" y="608.2" width="1" height="300.8" fill="#f5db0f"/><rect x="1328" y="608.2" width="1" height="300.8" fill="#f5e807"/><rect x="1329" y="608.2" width="1" height="300.8" fill="#f5e20b"/><rect x="1330" y="608.2" width="1" height="300.8" fill="#f5d413"/><rect x="1331" y="608.2" width="1" height="300.8" fill="#f5db0f"/><rect x="1332" y="608.2" width="1" height="300.8" fill="#f5d413"/><rect x="1333" y="608.2" width="1" height="300.8" fill="#f5e20b"/><rect x="1334" y="608.2" width="1" height="300.8" fill="#f5e807"/><rect x="1335" y="608.2" width="1" height="300.8" fill="#f4cd16"/><rect x="1336" y="608.2" width="2" height="300.8" fill="#f5e20b"/><rect x="1338" y="608.2" width="1" height="300.8" fill="#f05956"/><rect x="1339" y="608.2" width="1" height="300.8" fill="#bf0097"/><rect x="1340" y="608.2" width="1" height="300.8" fill="#f4c61a"/><rect x="1341" y="608.2" width="1" height="300.8" fill="#f6f60b"/><rect x="1342" y="608.2" width="1" height="300.8" fill="#f7f720"/><rect x="1343" y="608.2" width="1" height="300.8" fill="#f5e807"/><rect x="1344" y="608.2" width="1" height="300.8" fill="#f6ef04"/><rect x="1345" y="608.2" width="1" height="300.8" fill="#f7f715"/><rect x="1346" y="608.2" width="1" height="300.8" fill="#f6ef04"/><rect x="1347" y="608.2" width="2" height="300.8" fill="#f5e20b"/><rect x="1349" y="608.2" width="1" height="300.8" fill="#f3ab29"/><rect x="1350" y="608.2" width="1" height="300.8" fill="#cc0092"/><rect x="1351" y="608.2" width="2" height="300.8" fill="#050097"/><rect x="1353" y="608.2" width="1" height="300.8" fill="#f0664e"/><rect x="1354" y="608.2" width="1" height="300.8" fill="#f5db0f"/><rect x="1355" y="608.2" width="2" height="300.8" fill="#f5e20b"/><rect x="1357" y="608.2" width="2" height="300.8" fill="#f5db0f"/><rect x="1359" y="608.2" width="2" height="300.8" fill="#f5d413"/><rect x="1361" y="608.2" width="1" height="300.8" fill="#f5db0f"/><rect x="1362" y="608.2" width="1" height="300.8" fill="#f4cd16"/><rect x="1363" y="608.2" width="1" height="300.8" fill="#ee306c"/><rect x="1364" y="608.2" width="1" height="300.8" fill="#d30090"/><rect x="1365" y="608.2" width="1" height="300.8" fill="#f4b822"/><rect x="1366" y="608.2" width="1" height="300.8" fill="#f4cd16"/><rect x="1367" y="608.2" width="1" height="300.8" fill="#f5d413"/><rect x="1368" y="608.2" width="2" height="300.8" fill="#f5db0f"/><rect x="1370" y="608.2" width="1" height="300.8" fill="#f5d413"/><rect x="1371" y="608.2" width="1" height="300.8" fill="#f5db0f"/><rect x="1372" y="608.2" width="1" height="300.8" fill="#f5e20b"/><rect x="1373" y="608.2" width="2" height="300.8" fill="#f5db0f"/><rect x="1375" y="608.2" width="1" height="300.8" fill="#f29d30"/><rect x="1376" y="608.2" width="1" height="300.8" fill="#9300a7"/><rect x="1377" y="608.2" width="1" height="300.8" fill="#f1823f"/><rect x="1378" y="608.2" width="2" height="300.8" fill="#f6ef04"/><rect x="1380" y="608.2" width="2" height="300.8" fill="#f6f60b"/><rect x="1382" y="608.2" width="2" height="300.8" fill="#f6f600"/><rect x="1384" y="608.2" width="2" height="300.8" fill="#f6ef04"/><rect x="1386" y="608.2" width="1" height="300.8" fill="#f6f600"/><rect x="1387" y="608.2" width="1" height="300.8" fill="#f5e20b"/><rect x="1388" y="608.2" width="1" height="300.8" fill="#ed2273"/><rect x="1389" y="608.2" width="1" height="300.8" fill="#ed157b"/><rect x="1390" y="608.2" width="1" height="300.8" fill="#f5e20b"/><rect x="1391" y="608.2" width="5" height="300.8" fill="#f6f600"/><rect x="1396" y="608.2" width="4" height="300.8" fill="#f6ef04"/><rect x="1400" y="608.2" width="1" height="300.8" fill="#f29038"/><rect x="1401" y="608.2" width="1" height="300.8" fill="#ac009e"/><rect x="1402" y="608.2" width="1" height="300.8" fill="#f3ab29"/><rect x="1403" y="608.2" width="1" height="300.8" fill="#f5e20b"/><rect x="1404" y="608.2" width="1" height="300.8" fill="#f5db0f"/><rect x="1405" y="608.2" width="1" height="300.8" fill="#f5d413"/><rect x="1406" y="608.2" width="1" height="300.8" fill="#f5db0f"/><rect x="1407" y="608.2" width="2" height="300.8" fill="#f5d413"/><rect x="1409" y="608.2" width="2" height="300.8" fill="#f4c61a"/><rect x="1411" y="608.2" width="1" height="300.8" fill="#f4cd16"/><rect x="1412" y="608.2" width="1" height="300.8" fill="#f4bf1e"/><rect x="1413" y="608.2" width="1" height="300.8" fill="#ed157b"/><rect x="1414" y="608.2" width="1" height="300.8" fill="#3400cb"/><rect x="1415" y="608.2" width="1" height="300.8" fill="#0500a5"/><rect x="1416" y="608.2" width="4" height="300.8" fill="#050097"/><rect x="1420" y="608.2" width="1" height="300.8" fill="#04008a"/><rect x="1421" y="608.2" width="4" height="300.8" fill="#0500a5"/><rect x="1425" y="608.2" width="4" height="300.8" fill="#050097"/><rect x="1429" y="608.2" width="2" height="300.8" fill="#0500a5"/><rect x="1431" y="608.2" width="1" height="300.8" fill="#050097"/><rect x="1432" y="608.2" width="4" height="300.8" fill="#0500a5"/><rect x="1436" y="608.2" width="1" height="300.8" fill="#050097"/><rect x="1437" y="608.2" width="5" height="300.8" fill="#0500a5"/><rect x="1442" y="608.2" width="1" height="300.8" fill="#050097"/><rect x="1443" y="608.2" width="1" height="300.8" fill="#0500a5"/><rect x="1444" y="608.2" width="1" height="300.8" fill="#04008a"/><rect x="1445" y="608.2" width="2" height="300.8" fill="#050097"/><rect x="1447" y="608.2" width="1" height="300.8" fill="#04008a"/><rect x="1448" y="608.2" width="4" height="300.8" fill="#050097"/><rect x="1452" y="608.2" width="2" height="300.8" fill="#0500a5"/><rect x="1454" y="608.2" width="1" height="300.8" fill="#050097"/><rect x="1455" y="608.2" width="1" height="300.8" fill="#0500a5"/><rect x="1456" y="608.2" width="3" height="300.8" fill="#050097"/><rect x="1459" y="608.2" width="1" height="300.8" fill="#0500a5"/><rect x="1460" y="608.2" width="1" height="300.8" fill="#050097"/><rect x="1461" y="608.2" width="3" height="300.8" fill="#0500a5"/><rect x="1464" y="608.2" width="1" height="300.8" fill="#04008a"/><rect x="1465" y="608.2" width="1" height="300.8" fill="#050097"/><rect x="1466" y="608.2" width="1" height="300.8" fill="#0500a5"/><rect x="1467" y="608.2" width="2" height="300.8" fill="#050097"/><rect x="1469" y="608.2" width="1" height="300.8" fill="#04008a"/><rect x="1470" y="608.2" width="4" height="300.8" fill="#050097"/><rect x="1474" y="608.2" width="1" height="300.8" fill="#0500a5"/><rect x="1475" y="608.2" width="2" height="300.8" fill="#050097"/><rect x="1477" y="608.2" width="1" height="300.8" fill="#0500a5"/><rect x="1478" y="608.2" width="1" height="300.8" fill="#050097"/><rect x="1479" y="608.2" width="1" height="300.8" fill="#0500a5"/><rect x="1480" y="608.2" width="1" height="300.8" fill="#050097"/><rect x="1481" y="608.2" width="1" height="300.8" fill="#0500a5"/><rect x="1482" y="608.2" width="1" height="300.8" fill="#04008a"/><rect x="1483" y="608.2" width="1" height="300.8" fill="#050097"/><rect x="1484" y="608.2" width="1" height="300.8" fill="#0500a5"/><rect x="1485" y="608.2" width="1" height="300.8" fill="#04008a"/><rect x="1486" y="608.2" width="1" height="300.8" fill="#0500a5"/><rect x="1487" y="608.2" width="5" height="300.8" fill="#050097"/><rect x="1492" y="608.2" width="1" height="300.8" fill="#04008a"/><rect x="1493" y="608.2" width="1" height="300.8" fill="#0500a5"/><rect x="1494" y="608.2" width="5" height="300.8" fill="#050097"/><rect x="1499" y="608.2" width="1" height="300.8" fill="#0500a5"/><rect x="1500" y="608.2" width="2" height="300.8" fill="#050097"/><rect x="1502" y="608.2" width="1" height="300.8" fill="#0500a5"/><rect x="1503" y="608.2" width="1" height="300.8" fill="#050097"/><rect x="1504" y="608.2" width="1" height="300.8" fill="#04008a"/><rect x="1505" y="608.2" width="1" height="300.8" fill="#050097"/><rect x="1506" y="608.2" width="1" height="300.8" fill="#04008a"/><rect x="1507" y="608.2" width="1" height="300.8" fill="#050097"/><rect x="1508" y="608.2" width="1" height="300.8" fill="#0500a5"/><rect x="1509" y="608.2" width="1" height="300.8" fill="#050097"/><rect x="1510" y="608.2" width="2" height="300.8" fill="#0500a5"/><rect x="1512" y="608.2" width="1" height="300.8" fill="#04008a"/><rect x="1513" y="608.2" width="2" height="300.8" fill="#0500a5"/><rect x="1515" y="608.2" width="1" height="300.8" fill="#04008a"/><rect x="1516" y="608.2" width="1" height="300.8" fill="#0500a5"/><rect x="1517" y="608.2" width="2" height="300.8" fill="#050097"/><rect x="1519" y="608.2" width="1" height="300.8" fill="#0500a5"/><rect x="1520" y="608.2" width="2" height="300.8" fill="#050097"/><rect x="1522" y="608.2" width="2" height="300.8" fill="#0500a5"/><rect x="1524" y="608.2" width="1" height="300.8" fill="#050097"/><rect x="1525" y="608.2" width="2" height="300.8" fill="#0500a5"/><rect x="1527" y="608.2" width="5" height="300.8" fill="#050097"/><rect x="1532" y="608.2" width="1" height="300.8" fill="#04008a"/><rect x="1533" y="608.2" width="3" height="300.8" fill="#050097"/><rect x="1536" y="608.2" width="1" height="300.8" fill="#0500a5"/><rect x="1537" y="608.2" width="4" height="300.8" fill="#050097"/><rect x="1541" y="608.2" width="1" height="300.8" fill="#0500a5"/><rect x="1542" y="608.2" width="1" height="300.8" fill="#050097"/><rect x="1543" y="608.2" width="3" height="300.8" fill="#0500a5"/><rect x="1546" y="608.2" width="2" height="300.8" fill="#050097"/><rect x="1548" y="608.2" width="2" height="300.8" fill="#0500a5"/><rect x="1550" y="608.2" width="3" height="300.8" fill="#050097"/><rect x="1553" y="608.2" width="1" height="300.8" fill="#0500a5"/><rect x="1554" y="608.2" width="3" height="300.8" fill="#050097"/><rect x="1557" y="608.2" width="1" height="300.8" fill="#0500a5"/><rect x="1558" y="608.2" width="2" height="300.8" fill="#050097"/><rect x="1560" y="608.2" width="3" height="300.8" fill="#0500a5"/><rect x="1563" y="608.2" width="2" height="300.8" fill="#04008a"/><rect x="1565" y="608.2" width="5" height="300.8" fill="#050097"/><rect x="1570" y="608.2" width="1" height="300.8" fill="#04008a"/><rect x="1571" y="608.2" width="1" height="300.8" fill="#050097"/><rect x="1572" y="608.2" width="1" height="300.8" fill="#0500a5"/><rect x="1573" y="608.2" width="6" height="300.8" fill="#050097"/><rect x="1579" y="608.2" width="2" height="300.8" fill="#0500a5"/><rect x="1581" y="608.2" width="1" height="300.8" fill="#04008a"/><rect x="1582" y="608.2" width="1" height="300.8" fill="#050097"/><rect x="1583" y="608.2" width="1" height="300.8" fill="#0500a5"/><rect x="1584" y="608.2" width="1" height="300.8" fill="#050097"/><rect x="1585" y="608.2" width="1" height="300.8" fill="#0500a5"/><rect x="1586" y="608.2" width="3" height="300.8" fill="#050097"/><rect x="1589" y="608.2" width="1" height="300.8" fill="#0500a5"/><rect x="1590" y="608.2" width="1" height="300.8" fill="#050097"/><rect x="1591" y="608.2" width="2" height="300.8" fill="#0500a5"/><rect x="1593" y="608.2" width="2" height="300.8" fill="#050097"/><rect x="1595" y="608.2" width="2" height="300.8" fill="#0500a5"/><rect x="1597" y="608.2" width="3" height="300.8" fill="#050097"/><rect x="1600" y="608.2" width="1" height="300.8" fill="#0500a5"/><rect x="1601" y="608.2" width="1" height="300.8" fill="#04008a"/><rect x="1602" y="608.2" width="3" height="300.8" fill="#050097"/><rect x="1605" y="608.2" width="1" height="300.8" fill="#0500a5"/><rect x="1606" y="608.2" width="1" height="300.8" fill="#050097"/><rect x="1607" y="608.2" width="1" height="300.8" fill="#0500a5"/><rect x="1608" y="608.2" width="1" height="300.8" fill="#04008a"/><rect x="1609" y="608.2" width="1" height="300.8" fill="#050097"/><rect x="1610" y="608.2" width="1" height="300.8" fill="#0500a5"/><rect x="1611" y="608.2" width="2" height="300.8" fill="#050097"/><rect x="1613" y="608.2" width="2" height="300.8" fill="#0500a5"/><rect x="1615" y="608.2" width="3" height="300.8" fill="#050097"/><rect x="1618" y="608.2" width="1" height="300.8" fill="#0500a5"/><rect x="1619" y="608.2" width="2" height="300.8" fill="#050097"/><rect x="1621" y="608.2" width="1" height="300.8" fill="#0500a5"/><rect x="1622" y="608.2" width="1" height="300.8" fill="#050097"/><rect x="1623" y="608.2" width="3" height="300.8" fill="#0500a5"/><rect x="1626" y="608.2" width="1" height="300.8" fill="#050097"/><rect x="1110" y="608.2" width="2" height="15.1" fill="#050091"/><rect x="358" y="608.2" width="2" height="15.1" fill="#0600b7"/><rect x="1551" y="608.2" width="1" height="15.1" fill="#040084"/><rect x="1244" y="608.2" width="2" height="15.1" fill="#040084"/><rect x="1246" y="608.2" width="2" height="15.1" fill="#0600ae"/><rect x="1419" y="608.2" width="1" height="15.1" fill="#0600b7"/><rect x="1600" y="608.2" width="2" height="15.1" fill="#0500a7"/><rect x="1576" y="608.2" width="1" height="15.1" fill="#0600ae"/><rect x="1599" y="608.2" width="1" height="15.1" fill="#04008b"/><rect x="197" y="608.2" width="2" height="15.1" fill="#050091"/><rect x="128" y="608.2" width="1" height="15.1" fill="#0600ae"/><rect x="165" y="608.2" width="3" height="15.1" fill="#04008b"/><rect x="1604" y="608.2" width="2" height="15.1" fill="#040084"/><rect x="1455" y="608.2" width="1" height="15.1" fill="#0600ae"/><rect x="1582" y="608.2" width="2" height="15.1" fill="#0600ae"/><rect x="192" y="608.2" width="2" height="15.1" fill="#040084"/><rect x="503" y="608.2" width="1" height="15.1" fill="#050091"/><rect x="192" y="608.2" width="1" height="15.1" fill="#0600b7"/><rect x="279" y="608.2" width="1" height="15.1" fill="#0600b7"/><rect x="1455" y="608.2" width="1" height="15.1" fill="#0600b7"/><rect x="357" y="608.2" width="2" height="15.1" fill="#0600ae"/><rect x="1220" y="608.2" width="2" height="15.1" fill="#0500a7"/><rect x="1232" y="608.2" width="2" height="15.1" fill="#050091"/><rect x="245" y="608.2" width="2" height="15.1" fill="#0500a7"/><rect x="1573" y="608.2" width="1" height="15.1" fill="#0600b7"/><rect x="153" y="608.2" width="2" height="15.1" fill="#0600b7"/><rect x="1231" y="608.2" width="1" height="15.1" fill="#0500a7"/><rect x="197" y="608.2" width="2" height="15.1" fill="#0600ae"/><rect x="130" y="608.2" width="3" height="15.1" fill="#050091"/><rect x="116" y="608.2" width="1" height="15.1" fill="#0500a7"/><rect x="1453" y="608.2" width="1" height="15.1" fill="#04008b"/><rect x="298" y="608.2" width="2" height="15.1" fill="#0600b7"/><rect x="303" y="608.2" width="2" height="15.1" fill="#04008b"/><rect x="1421" y="608.2" width="2" height="15.1" fill="#0600ae"/><rect x="798" y="608.2" width="2" height="15.1" fill="#040084"/><rect x="1505" y="608.2" width="2" height="15.1" fill="#0600b7"/><rect x="223" y="608.2" width="2" height="15.1" fill="#0600b7"/><rect x="291" y="608.2" width="1" height="15.1" fill="#040084"/><rect x="1492" y="608.2" width="1" height="15.1" fill="#0600ae"/><rect x="1515" y="608.2" width="1" height="15.1" fill="#050091"/><rect x="217" y="608.2" width="1" height="15.1" fill="#04008b"/><rect x="1241" y="608.2" width="1" height="15.1" fill="#0600ae"/><rect x="412" y="608.2" width="3" height="15.1" fill="#0600b7"/><rect x="1506" y="608.2" width="3" height="15.1" fill="#0600ae"/><rect x="361" y="608.2" width="2" height="15.1" fill="#04008b"/><rect x="510" y="608.2" width="2" height="15.1" fill="#04008b"/><rect x="1117" y="623.2" width="3" height="15.1" fill="#0600ae"/><rect x="1513" y="623.2" width="2" height="15.1" fill="#0500a7"/><rect x="1435" y="623.2" width="2" height="15.1" fill="#0600b7"/><rect x="1583" y="623.2" width="1" height="15.1" fill="#0500a7"/><rect x="358" y="623.2" width="2" height="15.1" fill="#040084"/><rect x="354" y="623.2" width="1" height="15.1" fill="#0500a7"/><rect x="1563" y="623.2" width="3" height="15.1" fill="#050091"/><rect x="165" y="623.2" width="1" height="15.1" fill="#040084"/><rect x="1506" y="623.2" width="2" height="15.1" fill="#0500a7"/><rect x="423" y="623.2" width="2" height="15.1" fill="#0600ae"/><rect x="293" y="623.2" width="2" height="15.1" fill="#04008b"/><rect x="1127" y="623.2" width="1" height="15.1" fill="#050091"/><rect x="1551" y="623.2" width="1" height="15.1" fill="#0600b7"/><rect x="495" y="623.2" width="3" height="15.1" fill="#0600ae"/><rect x="160" y="623.2" width="1" height="15.1" fill="#0600ae"/><rect x="314" y="623.2" width="1" height="15.1" fill="#04008b"/><rect x="284" y="623.2" width="1" height="15.1" fill="#040084"/><rect x="1234" y="623.2" width="2" height="15.1" fill="#0600ae"/><rect x="1563" y="623.2" width="1" height="15.1" fill="#0500a7"/><rect x="1502" y="623.2" width="1" height="15.1" fill="#0600b7"/><rect x="1623" y="623.2" width="3" height="15.1" fill="#0600ae"/><rect x="1108" y="623.2" width="1" height="15.1" fill="#04008b"/><rect x="1449" y="623.2" width="1" height="15.1" fill="#0600b7"/><rect x="199" y="623.2" width="2" height="15.1" fill="#04008b"/><rect x="144" y="623.2" width="3" height="15.1" fill="#0500a7"/><rect x="1561" y="623.2" width="2" height="15.1" fill="#04008b"/><rect x="1116" y="623.2" width="2" height="15.1" fill="#050091"/><rect x="1438" y="623.2" width="1" height="15.1" fill="#0600ae"/><rect x="1111" y="623.2" width="2" height="15.1" fill="#0600b7"/><rect x="174" y="623.2" width="2" height="15.1" fill="#040084"/><rect x="249" y="623.2" width="1" height="15.1" fill="#0600b7"/><rect x="1426" y="623.2" width="2" height="15.1" fill="#0600b7"/><rect x="230" y="623.2" width="2" height="15.1" fill="#040084"/><rect x="1260" y="623.2" width="2" height="15.1" fill="#04008b"/><rect x="799" y="623.2" width="3" height="15.1" fill="#040084"/><rect x="1492" y="623.2" width="1" height="15.1" fill="#0600b7"/><rect x="343" y="623.2" width="3" height="15.1" fill="#04008b"/><rect x="796" y="623.2" width="2" height="15.1" fill="#0600ae"/><rect x="804" y="623.2" width="1" height="15.1" fill="#0500a7"/><rect x="1591" y="623.2" width="1" height="15.1" fill="#050091"/><rect x="325" y="623.2" width="1" height="15.1" fill="#0500a7"/><rect x="218" y="623.2" width="2" height="15.1" fill="#050091"/><rect x="503" y="623.2" width="3" height="15.1" fill="#0500a7"/><rect x="1137" y="623.2" width="2" height="15.1" fill="#0500a7"/><rect x="200" y="623.2" width="1" height="15.1" fill="#04008b"/><rect x="202" y="623.2" width="1" height="15.1" fill="#0600b7"/><rect x="315" y="638.3" width="1" height="15.1" fill="#04008b"/><rect x="1434" y="638.3" width="1" height="15.1" fill="#0500a7"/><rect x="198" y="638.3" width="1" height="15.1" fill="#04008b"/><rect x="139" y="638.3" width="1" height="15.1" fill="#040084"/><rect x="1467" y="638.3" width="2" height="15.1" fill="#040084"/><rect x="1223" y="638.3" width="2" height="15.1" fill="#0600ae"/><rect x="248" y="638.3" width="1" height="15.1" fill="#04008b"/><rect x="1418" y="638.3" width="2" height="15.1" fill="#050091"/><rect x="1445" y="638.3" width="3" height="15.1" fill="#040084"/><rect x="1433" y="638.3" width="3" height="15.1" fill="#0600b7"/><rect x="1123" y="638.3" width="1" height="15.1" fill="#0600b7"/><rect x="1565" y="638.3" width="1" height="15.1" fill="#050091"/><rect x="1136" y="638.3" width="1" height="15.1" fill="#050091"/><rect x="1112" y="638.3" width="2" height="15.1" fill="#040084"/><rect x="1593" y="638.3" width="2" height="15.1" fill="#04008b"/><rect x="1544" y="638.3" width="2" height="15.1" fill="#050091"/><rect x="211" y="638.3" width="3" height="15.1" fill="#0600b7"/><rect x="294" y="638.3" width="2" height="15.1" fill="#0600ae"/><rect x="804" y="638.3" width="1" height="15.1" fill="#04008b"/><rect x="1235" y="638.3" width="3" height="15.1" fill="#0600ae"/><rect x="1548" y="638.3" width="1" height="15.1" fill="#0600ae"/><rect x="334" y="638.3" width="3" height="15.1" fill="#0600b7"/><rect x="333" y="638.3" width="3" height="15.1" fill="#040084"/><rect x="334" y="638.3" width="1" height="15.1" fill="#04008b"/><rect x="421" y="638.3" width="2" height="15.1" fill="#0600ae"/><rect x="1450" y="638.3" width="2" height="15.1" fill="#050091"/><rect x="199" y="638.3" width="2" height="15.1" fill="#050091"/><rect x="1497" y="638.3" width="1" height="15.1" fill="#0500a7"/><rect x="244" y="638.3" width="1" height="15.1" fill="#0600ae"/><rect x="1579" y="638.3" width="3" height="15.1" fill="#0600ae"/><rect x="171" y="638.3" width="3" height="15.1" fill="#050091"/><rect x="304" y="638.3" width="2" height="15.1" fill="#0600ae"/><rect x="281" y="638.3" width="1" height="15.1" fill="#040084"/><rect x="794" y="638.3" width="2" height="15.1" fill="#04008b"/><rect x="1610" y="638.3" width="2" height="15.1" fill="#04008b"/><rect x="322" y="638.3" width="3" height="15.1" fill="#0600ae"/><rect x="184" y="638.3" width="2" height="15.1" fill="#040084"/><rect x="1436" y="638.3" width="1" height="15.1" fill="#0600b7"/><rect x="247" y="638.3" width="2" height="15.1" fill="#0600b7"/><rect x="1351" y="638.3" width="2" height="15.1" fill="#0600ae"/><rect x="122" y="638.3" width="1" height="15.1" fill="#04008b"/><rect x="1444" y="638.3" width="2" height="15.1" fill="#040084"/><rect x="252" y="638.3" width="1" height="15.1" fill="#0500a7"/><rect x="227" y="638.3" width="3" height="15.1" fill="#0500a7"/><rect x="309" y="638.3" width="2" height="15.1" fill="#0600ae"/><rect x="240" y="638.3" width="2" height="15.1" fill="#04008b"/><rect x="1604" y="653.3" width="2" height="15.1" fill="#040084"/><rect x="144" y="653.3" width="1" height="15.1" fill="#0500a7"/><rect x="1532" y="653.3" width="3" height="15.1" fill="#040084"/><rect x="1504" y="653.3" width="2" height="15.1" fill="#0500a7"/><rect x="1601" y="653.3" width="2" height="15.1" fill="#050091"/><rect x="1520" y="653.3" width="2" height="15.1" fill="#0600b7"/><rect x="1441" y="653.3" width="2" height="15.1" fill="#040084"/><rect x="1602" y="653.3" width="1" height="15.1" fill="#0600ae"/><rect x="1136" y="653.3" width="3" height="15.1" fill="#0600ae"/><rect x="1465" y="653.3" width="2" height="15.1" fill="#040084"/><rect x="1126" y="653.3" width="1" height="15.1" fill="#050091"/><rect x="1466" y="653.3" width="2" height="15.1" fill="#0600ae"/><rect x="1127" y="653.3" width="2" height="15.1" fill="#0600ae"/><rect x="177" y="653.3" width="1" height="15.1" fill="#040084"/><rect x="1480" y="653.3" width="1" height="15.1" fill="#0600ae"/><rect x="1429" y="653.3" width="1" height="15.1" fill="#0500a7"/><rect x="213" y="653.3" width="3" height="15.1" fill="#04008b"/><rect x="1581" y="653.3" width="2" height="15.1" fill="#0600b7"/><rect x="1428" y="653.3" width="1" height="15.1" fill="#040084"/><rect x="1251" y="653.3" width="3" height="15.1" fill="#0500a7"/><rect x="1600" y="653.3" width="1" height="15.1" fill="#04008b"/><rect x="1454" y="653.3" width="3" height="15.1" fill="#040084"/><rect x="179" y="653.3" width="1" height="15.1" fill="#0600ae"/><rect x="239" y="653.3" width="1" height="15.1" fill="#0600ae"/><rect x="1612" y="653.3" width="2" height="15.1" fill="#040084"/><rect x="802" y="653.3" width="1" height="15.1" fill="#0600b7"/><rect x="1104" y="653.3" width="1" height="15.1" fill="#050091"/><rect x="308" y="653.3" width="1" height="15.1" fill="#0500a7"/><rect x="1483" y="653.3" width="3" height="15.1" fill="#0500a7"/><rect x="250" y="653.3" width="2" height="15.1" fill="#0600b7"/><rect x="1622" y="653.3" width="1" height="15.1" fill="#040084"/><rect x="1111" y="653.3" width="1" height="15.1" fill="#0500a7"/><rect x="1119" y="653.3" width="2" height="15.1" fill="#050091"/><rect x="1533" y="653.3" width="1" height="15.1" fill="#0500a7"/><rect x="343" y="653.3" width="1" height="15.1" fill="#050091"/><rect x="166" y="653.3" width="1" height="15.1" fill="#050091"/><rect x="1236" y="653.3" width="2" height="15.1" fill="#040084"/><rect x="308" y="653.3" width="3" height="15.1" fill="#04008b"/><rect x="1568" y="653.3" width="1" height="15.1" fill="#04008b"/><rect x="157" y="653.3" width="1" height="15.1" fill="#050091"/><rect x="1118" y="653.3" width="2" height="15.1" fill="#0500a7"/><rect x="244" y="653.3" width="2" height="15.1" fill="#0600b7"/><rect x="1478" y="653.3" width="2" height="15.1" fill="#040084"/><rect x="305" y="653.3" width="1" height="15.1" fill="#050091"/><rect x="229" y="653.3" width="1" height="15.1" fill="#050091"/><rect x="317" y="653.3" width="1" height="15.1" fill="#0600ae"/><rect x="801" y="668.4" width="2" height="15.1" fill="#050091"/><rect x="1559" y="668.4" width="1" height="15.1" fill="#0600ae"/><rect x="1551" y="668.4" width="1" height="15.1" fill="#050091"/><rect x="316" y="668.4" width="1" height="15.1" fill="#050091"/><rect x="241" y="668.4" width="1" height="15.1" fill="#0500a7"/><rect x="184" y="668.4" width="2" height="15.1" fill="#0600ae"/><rect x="181" y="668.4" width="3" height="15.1" fill="#040084"/><rect x="113" y="668.4" width="3" height="15.1" fill="#0600ae"/><rect x="514" y="668.4" width="3" height="15.1" fill="#050091"/><rect x="1456" y="668.4" width="3" height="15.1" fill="#040084"/><rect x="300" y="668.4" width="2" height="15.1" fill="#04008b"/><rect x="422" y="668.4" width="1" height="15.1" fill="#050091"/><rect x="1584" y="668.4" width="1" height="15.1" fill="#04008b"/><rect x="286" y="668.4" width="1" height="15.1" fill="#0600ae"/><rect x="1495" y="668.4" width="3" height="15.1" fill="#0500a7"/><rect x="108" y="668.4" width="2" height="15.1" fill="#040084"/><rect x="316" y="668.4" width="1" height="15.1" fill="#0600ae"/><rect x="1242" y="668.4" width="2" height="15.1" fill="#0600b7"/><rect x="1518" y="668.4" width="1" height="15.1" fill="#0600ae"/><rect x="797" y="668.4" width="3" height="15.1" fill="#0600b7"/><rect x="1556" y="668.4" width="3" height="15.1" fill="#04008b"/><rect x="301" y="668.4" width="1" height="15.1" fill="#0600ae"/><rect x="1469" y="668.4" width="1" height="15.1" fill="#0600b7"/><rect x="1474" y="668.4" width="3" height="15.1" fill="#050091"/><rect x="412" y="668.4" width="2" height="15.1" fill="#0500a7"/><rect x="1580" y="668.4" width="1" height="15.1" fill="#0600ae"/><rect x="1533" y="668.4" width="2" height="15.1" fill="#040084"/><rect x="339" y="668.4" width="3" height="15.1" fill="#0600b7"/><rect x="159" y="668.4" width="3" height="15.1" fill="#0500a7"/><rect x="316" y="668.4" width="2" height="15.1" fill="#04008b"/><rect x="124" y="668.4" width="3" height="15.1" fill="#0500a7"/><rect x="1468" y="668.4" width="3" height="15.1" fill="#0500a7"/><rect x="492" y="668.4" width="1" height="15.1" fill="#040084"/><rect x="223" y="668.4" width="1" height="15.1" fill="#0600ae"/><rect x="1579" y="668.4" width="3" height="15.1" fill="#0600b7"/><rect x="414" y="668.4" width="3" height="15.1" fill="#04008b"/><rect x="161" y="668.4" width="2" height="15.1" fill="#0500a7"/><rect x="149" y="668.4" width="2" height="15.1" fill="#0600ae"/><rect x="1561" y="668.4" width="2" height="15.1" fill="#0600ae"/><rect x="1533" y="668.4" width="1" height="15.1" fill="#0600b7"/><rect x="1545" y="668.4" width="1" height="15.1" fill="#0500a7"/><rect x="483" y="668.4" width="1" height="15.1" fill="#04008b"/><rect x="1531" y="668.4" width="3" height="15.1" fill="#0500a7"/><rect x="168" y="668.4" width="2" height="15.1" fill="#0500a7"/><rect x="1501" y="668.4" width="2" height="15.1" fill="#0600b7"/><rect x="353" y="668.4" width="1" height="15.1" fill="#04008b"/><rect x="1524" y="683.4" width="3" height="15.1" fill="#04008b"/><rect x="280" y="683.4" width="2" height="15.1" fill="#0600ae"/><rect x="146" y="683.4" width="1" height="15.1" fill="#04008b"/><rect x="1442" y="683.4" width="3" height="15.1" fill="#04008b"/><rect x="199" y="683.4" width="2" height="15.1" fill="#0600ae"/><rect x="804" y="683.4" width="1" height="15.1" fill="#0500a7"/><rect x="184" y="683.4" width="1" height="15.1" fill="#0600b7"/><rect x="367" y="683.4" width="1" height="15.1" fill="#050091"/><rect x="227" y="683.4" width="3" height="15.1" fill="#04008b"/><rect x="1451" y="683.4" width="2" height="15.1" fill="#040084"/><rect x="364" y="683.4" width="2" height="15.1" fill="#050091"/><rect x="1219" y="683.4" width="3" height="15.1" fill="#04008b"/><rect x="146" y="683.4" width="1" height="15.1" fill="#0500a7"/><rect x="1622" y="683.4" width="1" height="15.1" fill="#0600b7"/><rect x="1225" y="683.4" width="3" height="15.1" fill="#0600b7"/><rect x="313" y="683.4" width="2" height="15.1" fill="#0500a7"/><rect x="350" y="683.4" width="2" height="15.1" fill="#0500a7"/><rect x="156" y="683.4" width="1" height="15.1" fill="#0500a7"/><rect x="1229" y="683.4" width="1" height="15.1" fill="#04008b"/><rect x="1585" y="683.4" width="1" height="15.1" fill="#0500a7"/><rect x="340" y="683.4" width="2" height="15.1" fill="#04008b"/><rect x="1501" y="683.4" width="2" height="15.1" fill="#0500a7"/><rect x="1480" y="683.4" width="2" height="15.1" fill="#0600b7"/><rect x="317" y="683.4" width="2" height="15.1" fill="#04008b"/><rect x="1576" y="683.4" width="2" height="15.1" fill="#0500a7"/><rect x="180" y="683.4" width="1" height="15.1" fill="#0600b7"/><rect x="506" y="683.4" width="2" height="15.1" fill="#050091"/><rect x="125" y="683.4" width="3" height="15.1" fill="#04008b"/><rect x="491" y="683.4" width="3" height="15.1" fill="#0500a7"/><rect x="1603" y="683.4" width="1" height="15.1" fill="#050091"/><rect x="211" y="683.4" width="2" height="15.1" fill="#040084"/><rect x="289" y="683.4" width="2" height="15.1" fill="#04008b"/><rect x="417" y="683.4" width="1" height="15.1" fill="#040084"/><rect x="1127" y="683.4" width="2" height="15.1" fill="#0500a7"/><rect x="191" y="683.4" width="2" height="15.1" fill="#050091"/><rect x="485" y="683.4" width="3" height="15.1" fill="#0600b7"/><rect x="162" y="683.4" width="2" height="15.1" fill="#0500a7"/><rect x="415" y="683.4" width="2" height="15.1" fill="#040084"/><rect x="324" y="683.4" width="1" height="15.1" fill="#0600ae"/><rect x="236" y="683.4" width="1" height="15.1" fill="#04008b"/><rect x="1117" y="683.4" width="2" height="15.1" fill="#0500a7"/><rect x="1513" y="683.4" width="3" height="15.1" fill="#0600b7"/><rect x="245" y="683.4" width="3" height="15.1" fill="#0600b7"/><rect x="1584" y="683.4" width="2" height="15.1" fill="#050091"/><rect x="1485" y="683.4" width="2" height="15.1" fill="#04008b"/><rect x="341" y="683.4" width="2" height="15.1" fill="#0600ae"/><rect x="1483" y="698.4" width="2" height="15.1" fill="#04008b"/><rect x="1418" y="698.4" width="3" height="15.1" fill="#050091"/><rect x="363" y="698.4" width="1" height="15.1" fill="#050091"/><rect x="1253" y="698.4" width="2" height="15.1" fill="#0600ae"/><rect x="352" y="698.4" width="1" height="15.1" fill="#040084"/><rect x="131" y="698.4" width="2" height="15.1" fill="#0600ae"/><rect x="117" y="698.4" width="2" height="15.1" fill="#0600b7"/><rect x="174" y="698.4" width="1" height="15.1" fill="#0600ae"/><rect x="1235" y="698.4" width="1" height="15.1" fill="#050091"/><rect x="411" y="698.4" width="2" height="15.1" fill="#040084"/><rect x="1460" y="698.4" width="1" height="15.1" fill="#0500a7"/><rect x="1527" y="698.4" width="1" height="15.1" fill="#0500a7"/><rect x="1415" y="698.4" width="2" height="15.1" fill="#050091"/><rect x="1532" y="698.4" width="2" height="15.1" fill="#04008b"/><rect x="294" y="698.4" width="2" height="15.1" fill="#04008b"/><rect x="1509" y="698.4" width="1" height="15.1" fill="#050091"/><rect x="416" y="698.4" width="3" height="15.1" fill="#040084"/><rect x="1224" y="698.4" width="2" height="15.1" fill="#04008b"/><rect x="1512" y="698.4" width="3" height="15.1" fill="#050091"/><rect x="1589" y="698.4" width="2" height="15.1" fill="#0600b7"/><rect x="129" y="698.4" width="2" height="15.1" fill="#040084"/><rect x="1247" y="698.4" width="1" height="15.1" fill="#0500a7"/><rect x="501" y="698.4" width="1" height="15.1" fill="#0500a7"/><rect x="1530" y="698.4" width="3" height="15.1" fill="#050091"/><rect x="1503" y="698.4" width="2" height="15.1" fill="#050091"/><rect x="180" y="698.4" width="1" height="15.1" fill="#040084"/><rect x="1229" y="698.4" width="2" height="15.1" fill="#050091"/><rect x="1602" y="698.4" width="2" height="15.1" fill="#050091"/><rect x="322" y="698.4" width="2" height="15.1" fill="#0500a7"/><rect x="1223" y="698.4" width="2" height="15.1" fill="#040084"/><rect x="1612" y="698.4" width="1" height="15.1" fill="#040084"/><rect x="154" y="698.4" width="3" height="15.1" fill="#0600ae"/><rect x="1443" y="698.4" width="3" height="15.1" fill="#0500a7"/><rect x="171" y="698.4" width="2" height="15.1" fill="#040084"/><rect x="1498" y="698.4" width="2" height="15.1" fill="#0500a7"/><rect x="1417" y="698.4" width="1" height="15.1" fill="#04008b"/><rect x="1542" y="698.4" width="2" height="15.1" fill="#050091"/><rect x="1529" y="698.4" width="2" height="15.1" fill="#0500a7"/><rect x="127" y="698.4" width="1" height="15.1" fill="#0600ae"/><rect x="329" y="698.4" width="2" height="15.1" fill="#04008b"/><rect x="487" y="698.4" width="1" height="15.1" fill="#04008b"/><rect x="1556" y="698.4" width="1" height="15.1" fill="#0600ae"/><rect x="1426" y="698.4" width="1" height="15.1" fill="#04008b"/><rect x="1583" y="698.4" width="2" height="15.1" fill="#0600b7"/><rect x="1584" y="698.4" width="1" height="15.1" fill="#0600ae"/><rect x="1597" y="698.4" width="2" height="15.1" fill="#050091"/><rect x="1228" y="713.5" width="1" height="15.1" fill="#040084"/><rect x="1118" y="713.5" width="1" height="15.1" fill="#0600b7"/><rect x="1428" y="713.5" width="1" height="15.1" fill="#04008b"/><rect x="296" y="713.5" width="1" height="15.1" fill="#050091"/><rect x="1525" y="713.5" width="3" height="15.1" fill="#050091"/><rect x="1252" y="713.5" width="2" height="15.1" fill="#050091"/><rect x="1249" y="713.5" width="3" height="15.1" fill="#0500a7"/><rect x="413" y="713.5" width="1" height="15.1" fill="#050091"/><rect x="1130" y="713.5" width="1" height="15.1" fill="#0600ae"/><rect x="235" y="713.5" width="1" height="15.1" fill="#040084"/><rect x="210" y="713.5" width="2" height="15.1" fill="#040084"/><rect x="1485" y="713.5" width="3" height="15.1" fill="#0600b7"/><rect x="1515" y="713.5" width="1" height="15.1" fill="#04008b"/><rect x="1445" y="713.5" width="2" height="15.1" fill="#040084"/><rect x="1226" y="713.5" width="2" height="15.1" fill="#0500a7"/><rect x="1542" y="713.5" width="2" height="15.1" fill="#050091"/><rect x="428" y="713.5" width="2" height="15.1" fill="#0600b7"/><rect x="1132" y="713.5" width="1" height="15.1" fill="#050091"/><rect x="341" y="713.5" width="3" height="15.1" fill="#04008b"/><rect x="1604" y="713.5" width="2" height="15.1" fill="#0600b7"/><rect x="234" y="713.5" width="3" height="15.1" fill="#0600b7"/><rect x="498" y="713.5" width="1" height="15.1" fill="#04008b"/><rect x="337" y="713.5" width="2" height="15.1" fill="#0600ae"/><rect x="797" y="713.5" width="1" height="15.1" fill="#0600b7"/><rect x="321" y="713.5" width="1" height="15.1" fill="#0500a7"/><rect x="1622" y="713.5" width="1" height="15.1" fill="#050091"/><rect x="500" y="713.5" width="2" height="15.1" fill="#050091"/><rect x="1429" y="713.5" width="2" height="15.1" fill="#0600b7"/><rect x="248" y="713.5" width="1" height="15.1" fill="#04008b"/><rect x="227" y="713.5" width="1" height="15.1" fill="#04008b"/><rect x="515" y="713.5" width="2" height="15.1" fill="#0600b7"/><rect x="1574" y="713.5" width="1" height="15.1" fill="#0500a7"/><rect x="1135" y="713.5" width="1" height="15.1" fill="#0600ae"/><rect x="1517" y="713.5" width="1" height="15.1" fill="#050091"/><rect x="174" y="713.5" width="2" height="15.1" fill="#0500a7"/><rect x="513" y="713.5" width="1" height="15.1" fill="#0500a7"/><rect x="1440" y="713.5" width="1" height="15.1" fill="#0600ae"/><rect x="1421" y="713.5" width="1" height="15.1" fill="#0600ae"/><rect x="512" y="713.5" width="1" height="15.1" fill="#0500a7"/><rect x="311" y="713.5" width="1" height="15.1" fill="#0600ae"/><rect x="428" y="713.5" width="2" height="15.1" fill="#0500a7"/><rect x="229" y="713.5" width="1" height="15.1" fill="#050091"/><rect x="125" y="713.5" width="2" height="15.1" fill="#0600ae"/><rect x="1605" y="713.5" width="1" height="15.1" fill="#050091"/><rect x="1432" y="713.5" width="2" height="15.1" fill="#050091"/><rect x="365" y="713.5" width="1" height="15.1" fill="#0500a7"/><rect x="337" y="728.5" width="2" height="15.1" fill="#0600ae"/><rect x="488" y="728.5" width="3" height="15.1" fill="#040084"/><rect x="287" y="728.5" width="1" height="15.1" fill="#040084"/><rect x="1114" y="728.5" width="1" height="15.1" fill="#040084"/><rect x="318" y="728.5" width="2" height="15.1" fill="#0500a7"/><rect x="249" y="728.5" width="1" height="15.1" fill="#0500a7"/><rect x="1518" y="728.5" width="1" height="15.1" fill="#0500a7"/><rect x="1233" y="728.5" width="3" height="15.1" fill="#0500a7"/><rect x="1593" y="728.5" width="1" height="15.1" fill="#04008b"/><rect x="1586" y="728.5" width="3" height="15.1" fill="#0600b7"/><rect x="429" y="728.5" width="1" height="15.1" fill="#04008b"/><rect x="796" y="728.5" width="1" height="15.1" fill="#0500a7"/><rect x="1607" y="728.5" width="1" height="15.1" fill="#04008b"/><rect x="133" y="728.5" width="1" height="15.1" fill="#0600ae"/><rect x="227" y="728.5" width="1" height="15.1" fill="#050091"/><rect x="1241" y="728.5" width="1" height="15.1" fill="#0600ae"/><rect x="1115" y="728.5" width="1" height="15.1" fill="#0600ae"/><rect x="1500" y="728.5" width="1" height="15.1" fill="#04008b"/><rect x="171" y="728.5" width="2" height="15.1" fill="#040084"/><rect x="1562" y="728.5" width="2" height="15.1" fill="#04008b"/><rect x="1529" y="728.5" width="2" height="15.1" fill="#050091"/><rect x="1567" y="728.5" width="1" height="15.1" fill="#0500a7"/><rect x="1434" y="728.5" width="2" height="15.1" fill="#050091"/><rect x="130" y="728.5" width="1" height="15.1" fill="#0600ae"/><rect x="250" y="728.5" width="1" height="15.1" fill="#050091"/><rect x="1420" y="728.5" width="2" height="15.1" fill="#0600ae"/><rect x="506" y="728.5" width="2" height="15.1" fill="#0600b7"/><rect x="1483" y="728.5" width="2" height="15.1" fill="#050091"/><rect x="508" y="728.5" width="1" height="15.1" fill="#0600b7"/><rect x="1127" y="728.5" width="3" height="15.1" fill="#040084"/><rect x="493" y="728.5" width="2" height="15.1" fill="#04008b"/><rect x="316" y="728.5" width="1" height="15.1" fill="#040084"/><rect x="239" y="728.5" width="3" height="15.1" fill="#050091"/><rect x="342" y="728.5" width="1" height="15.1" fill="#050091"/><rect x="214" y="728.5" width="1" height="15.1" fill="#04008b"/><rect x="1255" y="728.5" width="2" height="15.1" fill="#04008b"/><rect x="1464" y="728.5" width="1" height="15.1" fill="#040084"/><rect x="1432" y="728.5" width="3" height="15.1" fill="#040084"/><rect x="1436" y="728.5" width="1" height="15.1" fill="#050091"/><rect x="1573" y="728.5" width="1" height="15.1" fill="#040084"/><rect x="310" y="728.5" width="2" height="15.1" fill="#040084"/><rect x="1626" y="728.5" width="1" height="15.1" fill="#0600ae"/><rect x="1127" y="728.5" width="2" height="15.1" fill="#0500a7"/><rect x="356" y="728.5" width="2" height="15.1" fill="#0500a7"/><rect x="314" y="728.5" width="2" height="15.1" fill="#040084"/><rect x="1422" y="728.5" width="2" height="15.1" fill="#04008b"/><rect x="1239" y="743.6" width="3" height="15.1" fill="#040084"/><rect x="283" y="743.6" width="2" height="15.1" fill="#0600b7"/><rect x="162" y="743.6" width="1" height="15.1" fill="#0600ae"/><rect x="1226" y="743.6" width="2" height="15.1" fill="#0600b7"/><rect x="1457" y="743.6" width="3" height="15.1" fill="#0600ae"/><rect x="222" y="743.6" width="1" height="15.1" fill="#0600b7"/><rect x="1487" y="743.6" width="2" height="15.1" fill="#0600b7"/><rect x="1501" y="743.6" width="2" height="15.1" fill="#0500a7"/><rect x="1536" y="743.6" width="1" height="15.1" fill="#0500a7"/><rect x="1577" y="743.6" width="3" height="15.1" fill="#040084"/><rect x="1550" y="743.6" width="1" height="15.1" fill="#0600ae"/><rect x="1485" y="743.6" width="2" height="15.1" fill="#050091"/><rect x="153" y="743.6" width="3" height="15.1" fill="#040084"/><rect x="1130" y="743.6" width="1" height="15.1" fill="#0600ae"/><rect x="1502" y="743.6" width="2" height="15.1" fill="#050091"/><rect x="1118" y="743.6" width="1" height="15.1" fill="#0600b7"/><rect x="1503" y="743.6" width="3" height="15.1" fill="#0500a7"/><rect x="159" y="743.6" width="1" height="15.1" fill="#0500a7"/><rect x="219" y="743.6" width="1" height="15.1" fill="#04008b"/><rect x="251" y="743.6" width="1" height="15.1" fill="#040084"/><rect x="1546" y="743.6" width="2" height="15.1" fill="#050091"/><rect x="172" y="743.6" width="1" height="15.1" fill="#040084"/><rect x="1224" y="743.6" width="2" height="15.1" fill="#0600ae"/><rect x="1231" y="743.6" width="2" height="15.1" fill="#04008b"/><rect x="1572" y="743.6" width="1" height="15.1" fill="#0500a7"/><rect x="332" y="743.6" width="2" height="15.1" fill="#050091"/><rect x="415" y="743.6" width="1" height="15.1" fill="#040084"/><rect x="1591" y="743.6" width="2" height="15.1" fill="#0500a7"/><rect x="418" y="743.6" width="1" height="15.1" fill="#0500a7"/><rect x="163" y="743.6" width="3" height="15.1" fill="#040084"/><rect x="287" y="743.6" width="2" height="15.1" fill="#04008b"/><rect x="208" y="743.6" width="2" height="15.1" fill="#040084"/><rect x="1228" y="743.6" width="1" height="15.1" fill="#050091"/><rect x="226" y="743.6" width="2" height="15.1" fill="#04008b"/><rect x="1420" y="743.6" width="1" height="15.1" fill="#0600b7"/><rect x="1499" y="743.6" width="2" height="15.1" fill="#040084"/><rect x="196" y="743.6" width="1" height="15.1" fill="#0600ae"/><rect x="1121" y="743.6" width="1" height="15.1" fill="#0600ae"/><rect x="1464" y="743.6" width="2" height="15.1" fill="#040084"/><rect x="1221" y="743.6" width="2" height="15.1" fill="#0600b7"/><rect x="508" y="743.6" width="3" height="15.1" fill="#04008b"/><rect x="346" y="743.6" width="1" height="15.1" fill="#04008b"/><rect x="307" y="743.6" width="3" height="15.1" fill="#0500a7"/><rect x="148" y="743.6" width="1" height="15.1" fill="#050091"/><rect x="224" y="743.6" width="2" height="15.1" fill="#050091"/><rect x="1240" y="743.6" width="2" height="15.1" fill="#04008b"/><rect x="114" y="758.6" width="1" height="15.1" fill="#0600b7"/><rect x="342" y="758.6" width="2" height="15.1" fill="#050091"/><rect x="1441" y="758.6" width="1" height="15.1" fill="#04008b"/><rect x="179" y="758.6" width="2" height="15.1" fill="#0500a7"/><rect x="1257" y="758.6" width="3" height="15.1" fill="#0500a7"/><rect x="508" y="758.6" width="2" height="15.1" fill="#04008b"/><rect x="1541" y="758.6" width="1" height="15.1" fill="#040084"/><rect x="1228" y="758.6" width="3" height="15.1" fill="#0600b7"/><rect x="1450" y="758.6" width="1" height="15.1" fill="#0500a7"/><rect x="1616" y="758.6" width="1" height="15.1" fill="#050091"/><rect x="232" y="758.6" width="2" height="15.1" fill="#040084"/><rect x="1488" y="758.6" width="1" height="15.1" fill="#0500a7"/><rect x="1419" y="758.6" width="1" height="15.1" fill="#0600b7"/><rect x="1446" y="758.6" width="3" height="15.1" fill="#04008b"/><rect x="1482" y="758.6" width="1" height="15.1" fill="#050091"/><rect x="1452" y="758.6" width="2" height="15.1" fill="#050091"/><rect x="1621" y="758.6" width="2" height="15.1" fill="#0600b7"/><rect x="497" y="758.6" width="2" height="15.1" fill="#0600b7"/><rect x="118" y="758.6" width="3" height="15.1" fill="#04008b"/><rect x="121" y="758.6" width="2" height="15.1" fill="#050091"/><rect x="241" y="758.6" width="3" height="15.1" fill="#050091"/><rect x="1420" y="758.6" width="2" height="15.1" fill="#050091"/><rect x="1223" y="758.6" width="1" height="15.1" fill="#0600ae"/><rect x="212" y="758.6" width="3" height="15.1" fill="#0600b7"/><rect x="207" y="758.6" width="2" height="15.1" fill="#04008b"/><rect x="196" y="758.6" width="2" height="15.1" fill="#040084"/><rect x="1257" y="758.6" width="1" height="15.1" fill="#0600b7"/><rect x="1226" y="758.6" width="1" height="15.1" fill="#0600b7"/><rect x="291" y="758.6" width="2" height="15.1" fill="#040084"/><rect x="1244" y="758.6" width="1" height="15.1" fill="#0500a7"/><rect x="1540" y="758.6" width="2" height="15.1" fill="#0500a7"/><rect x="168" y="758.6" width="1" height="15.1" fill="#040084"/><rect x="1427" y="758.6" width="2" height="15.1" fill="#04008b"/><rect x="1577" y="758.6" width="1" height="15.1" fill="#040084"/><rect x="174" y="758.6" width="2" height="15.1" fill="#0600b7"/><rect x="1433" y="758.6" width="1" height="15.1" fill="#0600ae"/><rect x="1621" y="758.6" width="1" height="15.1" fill="#0500a7"/><rect x="1252" y="758.6" width="1" height="15.1" fill="#0600ae"/><rect x="1427" y="758.6" width="1" height="15.1" fill="#0600b7"/><rect x="191" y="758.6" width="1" height="15.1" fill="#04008b"/><rect x="482" y="758.6" width="2" height="15.1" fill="#040084"/><rect x="1466" y="758.6" width="2" height="15.1" fill="#04008b"/><rect x="122" y="758.6" width="2" height="15.1" fill="#050091"/><rect x="130" y="758.6" width="1" height="15.1" fill="#050091"/><rect x="1445" y="758.6" width="3" height="15.1" fill="#0600ae"/><rect x="1569" y="758.6" width="1" height="15.1" fill="#040084"/><rect x="1106" y="773.6" width="3" height="15.1" fill="#0600ae"/><rect x="233" y="773.6" width="1" height="15.1" fill="#0600ae"/><rect x="414" y="773.6" width="1" height="15.1" fill="#0600b7"/><rect x="196" y="773.6" width="3" height="15.1" fill="#0600ae"/><rect x="1113" y="773.6" width="2" height="15.1" fill="#050091"/><rect x="422" y="773.6" width="1" height="15.1" fill="#0600ae"/><rect x="1446" y="773.6" width="2" height="15.1" fill="#040084"/><rect x="354" y="773.6" width="3" height="15.1" fill="#0500a7"/><rect x="306" y="773.6" width="3" height="15.1" fill="#040084"/><rect x="1493" y="773.6" width="1" height="15.1" fill="#040084"/><rect x="1538" y="773.6" width="1" height="15.1" fill="#04008b"/><rect x="1600" y="773.6" width="3" height="15.1" fill="#04008b"/><rect x="1439" y="773.6" width="3" height="15.1" fill="#0600ae"/><rect x="227" y="773.6" width="2" height="15.1" fill="#040084"/><rect x="366" y="773.6" width="1" height="15.1" fill="#040084"/><rect x="1259" y="773.6" width="1" height="15.1" fill="#050091"/><rect x="1566" y="773.6" width="3" height="15.1" fill="#040084"/><rect x="1437" y="773.6" width="1" height="15.1" fill="#0500a7"/><rect x="1105" y="773.6" width="3" height="15.1" fill="#0600b7"/><rect x="153" y="773.6" width="2" height="15.1" fill="#0500a7"/><rect x="1104" y="773.6" width="1" height="15.1" fill="#04008b"/><rect x="490" y="773.6" width="3" height="15.1" fill="#040084"/><rect x="1452" y="773.6" width="2" height="15.1" fill="#0500a7"/><rect x="340" y="773.6" width="3" height="15.1" fill="#04008b"/><rect x="1604" y="773.6" width="3" height="15.1" fill="#040084"/><rect x="1426" y="773.6" width="2" height="15.1" fill="#050091"/><rect x="487" y="773.6" width="1" height="15.1" fill="#050091"/><rect x="192" y="773.6" width="2" height="15.1" fill="#0500a7"/><rect x="1416" y="773.6" width="2" height="15.1" fill="#0600b7"/><rect x="1463" y="773.6" width="2" height="15.1" fill="#0500a7"/><rect x="225" y="773.6" width="1" height="15.1" fill="#050091"/><rect x="1566" y="773.6" width="1" height="15.1" fill="#04008b"/><rect x="1563" y="773.6" width="2" height="15.1" fill="#0600ae"/><rect x="1128" y="773.6" width="2" height="15.1" fill="#04008b"/><rect x="207" y="773.6" width="2" height="15.1" fill="#040084"/><rect x="1119" y="773.6" width="2" height="15.1" fill="#0500a7"/><rect x="367" y="773.6" width="1" height="15.1" fill="#0600b7"/><rect x="1562" y="773.6" width="2" height="15.1" fill="#0600b7"/><rect x="115" y="773.6" width="2" height="15.1" fill="#0500a7"/><rect x="213" y="773.6" width="1" height="15.1" fill="#0600b7"/><rect x="1239" y="773.6" width="1" height="15.1" fill="#050091"/><rect x="1251" y="773.6" width="2" height="15.1" fill="#04008b"/><rect x="1626" y="773.6" width="1" height="15.1" fill="#050091"/><rect x="320" y="773.6" width="2" height="15.1" fill="#040084"/><rect x="1551" y="773.6" width="2" height="15.1" fill="#040084"/><rect x="201" y="773.6" width="1" height="15.1" fill="#050091"/><rect x="1626" y="788.7" width="1" height="15.1" fill="#0500a7"/><rect x="1256" y="788.7" width="2" height="15.1" fill="#040084"/><rect x="515" y="788.7" width="2" height="15.1" fill="#0600b7"/><rect x="205" y="788.7" width="1" height="15.1" fill="#0500a7"/><rect x="362" y="788.7" width="2" height="15.1" fill="#050091"/><rect x="139" y="788.7" width="2" height="15.1" fill="#04008b"/><rect x="291" y="788.7" width="2" height="15.1" fill="#0600b7"/><rect x="512" y="788.7" width="1" height="15.1" fill="#0500a7"/><rect x="155" y="788.7" width="2" height="15.1" fill="#0600ae"/><rect x="191" y="788.7" width="3" height="15.1" fill="#04008b"/><rect x="1222" y="788.7" width="1" height="15.1" fill="#0600ae"/><rect x="348" y="788.7" width="3" height="15.1" fill="#0600ae"/><rect x="111" y="788.7" width="2" height="15.1" fill="#0500a7"/><rect x="1217" y="788.7" width="1" height="15.1" fill="#04008b"/><rect x="191" y="788.7" width="2" height="15.1" fill="#0600b7"/><rect x="249" y="788.7" width="2" height="15.1" fill="#0500a7"/><rect x="1470" y="788.7" width="1" height="15.1" fill="#0500a7"/><rect x="1125" y="788.7" width="1" height="15.1" fill="#040084"/><rect x="1238" y="788.7" width="3" height="15.1" fill="#0600b7"/><rect x="221" y="788.7" width="1" height="15.1" fill="#0500a7"/><rect x="1115" y="788.7" width="3" height="15.1" fill="#040084"/><rect x="348" y="788.7" width="1" height="15.1" fill="#0500a7"/><rect x="1129" y="788.7" width="3" height="15.1" fill="#04008b"/><rect x="232" y="788.7" width="1" height="15.1" fill="#050091"/><rect x="1506" y="788.7" width="2" height="15.1" fill="#040084"/><rect x="1465" y="788.7" width="2" height="15.1" fill="#04008b"/><rect x="1529" y="788.7" width="2" height="15.1" fill="#0500a7"/><rect x="1420" y="788.7" width="3" height="15.1" fill="#0500a7"/><rect x="213" y="788.7" width="3" height="15.1" fill="#0600b7"/><rect x="302" y="788.7" width="3" height="15.1" fill="#050091"/><rect x="338" y="788.7" width="1" height="15.1" fill="#050091"/><rect x="299" y="788.7" width="2" height="15.1" fill="#0500a7"/><rect x="1555" y="788.7" width="2" height="15.1" fill="#0500a7"/><rect x="1611" y="788.7" width="3" height="15.1" fill="#0500a7"/><rect x="1240" y="788.7" width="3" height="15.1" fill="#04008b"/><rect x="1515" y="788.7" width="2" height="15.1" fill="#050091"/><rect x="198" y="788.7" width="2" height="15.1" fill="#04008b"/><rect x="490" y="788.7" width="2" height="15.1" fill="#0600b7"/><rect x="1443" y="788.7" width="3" height="15.1" fill="#040084"/><rect x="486" y="788.7" width="1" height="15.1" fill="#050091"/><rect x="1260" y="788.7" width="1" height="15.1" fill="#0600b7"/><rect x="350" y="788.7" width="2" height="15.1" fill="#0600ae"/><rect x="172" y="788.7" width="3" height="15.1" fill="#04008b"/><rect x="1446" y="788.7" width="3" height="15.1" fill="#0500a7"/><rect x="1419" y="788.7" width="2" height="15.1" fill="#040084"/><rect x="407" y="788.7" width="1" height="15.1" fill="#0600ae"/><rect x="210" y="803.7" width="2" height="15.1" fill="#0600ae"/><rect x="285" y="803.7" width="1" height="15.1" fill="#0600b7"/><rect x="1234" y="803.7" width="3" height="15.1" fill="#04008b"/><rect x="1587" y="803.7" width="2" height="15.1" fill="#050091"/><rect x="1524" y="803.7" width="1" height="15.1" fill="#0500a7"/><rect x="1239" y="803.7" width="2" height="15.1" fill="#040084"/><rect x="423" y="803.7" width="1" height="15.1" fill="#04008b"/><rect x="336" y="803.7" width="3" height="15.1" fill="#0600b7"/><rect x="1226" y="803.7" width="1" height="15.1" fill="#04008b"/><rect x="326" y="803.7" width="3" height="15.1" fill="#04008b"/><rect x="1251" y="803.7" width="2" height="15.1" fill="#050091"/><rect x="217" y="803.7" width="2" height="15.1" fill="#0600ae"/><rect x="494" y="803.7" width="1" height="15.1" fill="#04008b"/><rect x="1240" y="803.7" width="1" height="15.1" fill="#04008b"/><rect x="1573" y="803.7" width="2" height="15.1" fill="#0600b7"/><rect x="799" y="803.7" width="2" height="15.1" fill="#050091"/><rect x="1597" y="803.7" width="1" height="15.1" fill="#050091"/><rect x="1519" y="803.7" width="1" height="15.1" fill="#050091"/><rect x="135" y="803.7" width="2" height="15.1" fill="#050091"/><rect x="1544" y="803.7" width="1" height="15.1" fill="#0500a7"/><rect x="295" y="803.7" width="3" height="15.1" fill="#04008b"/><rect x="197" y="803.7" width="3" height="15.1" fill="#0600b7"/><rect x="298" y="803.7" width="3" height="15.1" fill="#0600b7"/><rect x="1626" y="803.7" width="1" height="15.1" fill="#050091"/><rect x="161" y="803.7" width="2" height="15.1" fill="#050091"/><rect x="1578" y="803.7" width="1" height="15.1" fill="#0500a7"/><rect x="1486" y="803.7" width="2" height="15.1" fill="#050091"/><rect x="353" y="803.7" width="3" height="15.1" fill="#050091"/><rect x="1602" y="803.7" width="2" height="15.1" fill="#04008b"/><rect x="183" y="803.7" width="3" height="15.1" fill="#040084"/><rect x="1611" y="803.7" width="1" height="15.1" fill="#050091"/><rect x="108" y="803.7" width="1" height="15.1" fill="#0600ae"/><rect x="228" y="803.7" width="1" height="15.1" fill="#050091"/><rect x="1114" y="803.7" width="2" height="15.1" fill="#04008b"/><rect x="168" y="803.7" width="1" height="15.1" fill="#04008b"/><rect x="136" y="803.7" width="2" height="15.1" fill="#0600ae"/><rect x="252" y="803.7" width="1" height="15.1" fill="#0600ae"/><rect x="185" y="803.7" width="2" height="15.1" fill="#0600ae"/><rect x="321" y="803.7" width="1" height="15.1" fill="#0600ae"/><rect x="1236" y="803.7" width="3" height="15.1" fill="#0500a7"/><rect x="334" y="803.7" width="1" height="15.1" fill="#0500a7"/><rect x="248" y="803.7" width="2" height="15.1" fill="#04008b"/><rect x="186" y="803.7" width="2" height="15.1" fill="#040084"/><rect x="1593" y="803.7" width="3" height="15.1" fill="#040084"/><rect x="244" y="803.7" width="2" height="15.1" fill="#050091"/><rect x="1217" y="803.7" width="1" height="15.1" fill="#0600b7"/><rect x="502" y="818.8" width="1" height="15.1" fill="#0600ae"/><rect x="290" y="818.8" width="2" height="15.1" fill="#040084"/><rect x="1524" y="818.8" width="3" height="15.1" fill="#0600b7"/><rect x="1608" y="818.8" width="3" height="15.1" fill="#0600ae"/><rect x="1121" y="818.8" width="1" height="15.1" fill="#040084"/><rect x="1554" y="818.8" width="1" height="15.1" fill="#040084"/><rect x="217" y="818.8" width="1" height="15.1" fill="#050091"/><rect x="1106" y="818.8" width="1" height="15.1" fill="#0500a7"/><rect x="138" y="818.8" width="1" height="15.1" fill="#04008b"/><rect x="1555" y="818.8" width="3" height="15.1" fill="#0600b7"/><rect x="191" y="818.8" width="1" height="15.1" fill="#050091"/><rect x="175" y="818.8" width="1" height="15.1" fill="#0500a7"/><rect x="408" y="818.8" width="2" height="15.1" fill="#050091"/><rect x="1217" y="818.8" width="1" height="15.1" fill="#050091"/><rect x="1424" y="818.8" width="1" height="15.1" fill="#04008b"/><rect x="491" y="818.8" width="1" height="15.1" fill="#0600ae"/><rect x="1252" y="818.8" width="3" height="15.1" fill="#0600b7"/><rect x="1217" y="818.8" width="3" height="15.1" fill="#0600b7"/><rect x="1234" y="818.8" width="2" height="15.1" fill="#0600b7"/><rect x="411" y="818.8" width="2" height="15.1" fill="#04008b"/><rect x="337" y="818.8" width="1" height="15.1" fill="#04008b"/><rect x="482" y="818.8" width="2" height="15.1" fill="#0500a7"/><rect x="358" y="818.8" width="2" height="15.1" fill="#04008b"/><rect x="414" y="818.8" width="3" height="15.1" fill="#050091"/><rect x="1558" y="818.8" width="3" height="15.1" fill="#050091"/><rect x="1610" y="818.8" width="1" height="15.1" fill="#04008b"/><rect x="1116" y="818.8" width="1" height="15.1" fill="#040084"/><rect x="1106" y="818.8" width="3" height="15.1" fill="#050091"/><rect x="341" y="818.8" width="1" height="15.1" fill="#04008b"/><rect x="1576" y="818.8" width="1" height="15.1" fill="#040084"/><rect x="1538" y="818.8" width="1" height="15.1" fill="#0500a7"/><rect x="355" y="818.8" width="1" height="15.1" fill="#0500a7"/><rect x="1593" y="818.8" width="1" height="15.1" fill="#050091"/><rect x="1239" y="818.8" width="1" height="15.1" fill="#040084"/><rect x="1419" y="818.8" width="1" height="15.1" fill="#0500a7"/><rect x="409" y="818.8" width="2" height="15.1" fill="#04008b"/><rect x="1262" y="818.8" width="2" height="15.1" fill="#0600ae"/><rect x="175" y="818.8" width="2" height="15.1" fill="#040084"/><rect x="159" y="818.8" width="2" height="15.1" fill="#040084"/><rect x="1263" y="818.8" width="1" height="15.1" fill="#0500a7"/><rect x="294" y="818.8" width="1" height="15.1" fill="#040084"/><rect x="342" y="818.8" width="1" height="15.1" fill="#0500a7"/><rect x="363" y="818.8" width="2" height="15.1" fill="#050091"/><rect x="247" y="818.8" width="1" height="15.1" fill="#04008b"/><rect x="1125" y="818.8" width="1" height="15.1" fill="#04008b"/><rect x="413" y="818.8" width="1" height="15.1" fill="#0600b7"/><rect x="413" y="833.8" width="2" height="15.1" fill="#050091"/><rect x="1255" y="833.8" width="1" height="15.1" fill="#050091"/><rect x="281" y="833.8" width="1" height="15.1" fill="#04008b"/><rect x="1229" y="833.8" width="1" height="15.1" fill="#040084"/><rect x="1112" y="833.8" width="2" height="15.1" fill="#04008b"/><rect x="1619" y="833.8" width="1" height="15.1" fill="#050091"/><rect x="1562" y="833.8" width="3" height="15.1" fill="#0600ae"/><rect x="1604" y="833.8" width="2" height="15.1" fill="#0600ae"/><rect x="491" y="833.8" width="1" height="15.1" fill="#040084"/><rect x="360" y="833.8" width="1" height="15.1" fill="#040084"/><rect x="1114" y="833.8" width="3" height="15.1" fill="#04008b"/><rect x="296" y="833.8" width="2" height="15.1" fill="#0600b7"/><rect x="1605" y="833.8" width="1" height="15.1" fill="#050091"/><rect x="1518" y="833.8" width="3" height="15.1" fill="#0500a7"/><rect x="1232" y="833.8" width="3" height="15.1" fill="#0500a7"/><rect x="1499" y="833.8" width="1" height="15.1" fill="#04008b"/><rect x="282" y="833.8" width="2" height="15.1" fill="#0600b7"/><rect x="131" y="833.8" width="2" height="15.1" fill="#0600ae"/><rect x="1433" y="833.8" width="3" height="15.1" fill="#040084"/><rect x="511" y="833.8" width="1" height="15.1" fill="#040084"/><rect x="309" y="833.8" width="2" height="15.1" fill="#0600b7"/><rect x="348" y="833.8" width="1" height="15.1" fill="#040084"/><rect x="357" y="833.8" width="2" height="15.1" fill="#0500a7"/><rect x="170" y="833.8" width="2" height="15.1" fill="#040084"/><rect x="318" y="833.8" width="2" height="15.1" fill="#040084"/><rect x="302" y="833.8" width="2" height="15.1" fill="#040084"/><rect x="1218" y="833.8" width="2" height="15.1" fill="#0600ae"/><rect x="1598" y="833.8" width="2" height="15.1" fill="#0600b7"/><rect x="1507" y="833.8" width="2" height="15.1" fill="#0600ae"/><rect x="1122" y="833.8" width="1" height="15.1" fill="#050091"/><rect x="279" y="833.8" width="3" height="15.1" fill="#0600ae"/><rect x="1449" y="833.8" width="2" height="15.1" fill="#0600ae"/><rect x="1623" y="833.8" width="2" height="15.1" fill="#050091"/><rect x="1138" y="833.8" width="1" height="15.1" fill="#04008b"/><rect x="298" y="833.8" width="2" height="15.1" fill="#0600ae"/><rect x="1597" y="833.8" width="2" height="15.1" fill="#04008b"/><rect x="1119" y="833.8" width="1" height="15.1" fill="#0600ae"/><rect x="1620" y="833.8" width="2" height="15.1" fill="#04008b"/><rect x="1221" y="833.8" width="2" height="15.1" fill="#0600b7"/><rect x="205" y="833.8" width="1" height="15.1" fill="#050091"/><rect x="1513" y="833.8" width="3" height="15.1" fill="#040084"/><rect x="1532" y="833.8" width="3" height="15.1" fill="#0600b7"/><rect x="1262" y="833.8" width="1" height="15.1" fill="#0600b7"/><rect x="1531" y="833.8" width="2" height="15.1" fill="#050091"/><rect x="1532" y="833.8" width="3" height="15.1" fill="#0600b7"/><rect x="1605" y="833.8" width="2" height="15.1" fill="#040084"/><rect x="198" y="848.8" width="2" height="15.1" fill="#0500a7"/><rect x="1516" y="848.8" width="1" height="15.1" fill="#0600b7"/><rect x="252" y="848.8" width="1" height="15.1" fill="#050091"/><rect x="1574" y="848.8" width="2" height="15.1" fill="#040084"/><rect x="192" y="848.8" width="2" height="15.1" fill="#040084"/><rect x="411" y="848.8" width="3" height="15.1" fill="#0500a7"/><rect x="148" y="848.8" width="2" height="15.1" fill="#04008b"/><rect x="1539" y="848.8" width="1" height="15.1" fill="#0500a7"/><rect x="1235" y="848.8" width="3" height="15.1" fill="#040084"/><rect x="180" y="848.8" width="2" height="15.1" fill="#0500a7"/><rect x="287" y="848.8" width="2" height="15.1" fill="#050091"/><rect x="1538" y="848.8" width="3" height="15.1" fill="#050091"/><rect x="333" y="848.8" width="1" height="15.1" fill="#0600b7"/><rect x="1479" y="848.8" width="2" height="15.1" fill="#0600b7"/><rect x="237" y="848.8" width="1" height="15.1" fill="#0600b7"/><rect x="503" y="848.8" width="2" height="15.1" fill="#04008b"/><rect x="226" y="848.8" width="2" height="15.1" fill="#050091"/><rect x="420" y="848.8" width="1" height="15.1" fill="#040084"/><rect x="1547" y="848.8" width="2" height="15.1" fill="#0500a7"/><rect x="1432" y="848.8" width="1" height="15.1" fill="#0600b7"/><rect x="295" y="848.8" width="1" height="15.1" fill="#050091"/><rect x="793" y="848.8" width="2" height="15.1" fill="#050091"/><rect x="483" y="848.8" width="1" height="15.1" fill="#0600ae"/><rect x="490" y="848.8" width="3" height="15.1" fill="#0600b7"/><rect x="234" y="848.8" width="1" height="15.1" fill="#0500a7"/><rect x="1440" y="848.8" width="2" height="15.1" fill="#040084"/><rect x="1605" y="848.8" width="2" height="15.1" fill="#0500a7"/><rect x="1526" y="848.8" width="1" height="15.1" fill="#0500a7"/><rect x="1235" y="848.8" width="1" height="15.1" fill="#040084"/><rect x="296" y="848.8" width="2" height="15.1" fill="#04008b"/><rect x="407" y="848.8" width="3" height="15.1" fill="#040084"/><rect x="288" y="848.8" width="3" height="15.1" fill="#0500a7"/><rect x="1121" y="848.8" width="2" height="15.1" fill="#050091"/><rect x="323" y="848.8" width="1" height="15.1" fill="#0600b7"/><rect x="496" y="848.8" width="1" height="15.1" fill="#050091"/><rect x="1134" y="848.8" width="1" height="15.1" fill="#040084"/><rect x="796" y="848.8" width="3" height="15.1" fill="#0600ae"/><rect x="1108" y="848.8" width="2" height="15.1" fill="#040084"/><rect x="1215" y="848.8" width="1" height="15.1" fill="#050091"/><rect x="354" y="848.8" width="3" height="15.1" fill="#0500a7"/><rect x="173" y="848.8" width="1" height="15.1" fill="#040084"/><rect x="1571" y="848.8" width="1" height="15.1" fill="#0500a7"/><rect x="1561" y="848.8" width="1" height="15.1" fill="#050091"/><rect x="336" y="848.8" width="3" height="15.1" fill="#050091"/><rect x="418" y="848.8" width="2" height="15.1" fill="#050091"/><rect x="1430" y="848.8" width="1" height="15.1" fill="#050091"/><rect x="159" y="863.9" width="2" height="15.1" fill="#050091"/><rect x="1562" y="863.9" width="3" height="15.1" fill="#0500a7"/><rect x="352" y="863.9" width="2" height="15.1" fill="#04008b"/><rect x="1508" y="863.9" width="1" height="15.1" fill="#040084"/><rect x="1462" y="863.9" width="2" height="15.1" fill="#0500a7"/><rect x="1448" y="863.9" width="3" height="15.1" fill="#0600b7"/><rect x="1535" y="863.9" width="2" height="15.1" fill="#0600ae"/><rect x="1577" y="863.9" width="2" height="15.1" fill="#040084"/><rect x="1563" y="863.9" width="1" height="15.1" fill="#04008b"/><rect x="318" y="863.9" width="1" height="15.1" fill="#0600ae"/><rect x="285" y="863.9" width="1" height="15.1" fill="#0600ae"/><rect x="502" y="863.9" width="3" height="15.1" fill="#0600b7"/><rect x="1124" y="863.9" width="2" height="15.1" fill="#0600b7"/><rect x="148" y="863.9" width="1" height="15.1" fill="#0500a7"/><rect x="168" y="863.9" width="2" height="15.1" fill="#040084"/><rect x="1509" y="863.9" width="1" height="15.1" fill="#050091"/><rect x="163" y="863.9" width="3" height="15.1" fill="#040084"/><rect x="108" y="863.9" width="2" height="15.1" fill="#0500a7"/><rect x="1471" y="863.9" width="1" height="15.1" fill="#0500a7"/><rect x="1533" y="863.9" width="3" height="15.1" fill="#0600b7"/><rect x="421" y="863.9" width="2" height="15.1" fill="#0600b7"/><rect x="416" y="863.9" width="3" height="15.1" fill="#0500a7"/><rect x="153" y="863.9" width="1" height="15.1" fill="#0600b7"/><rect x="1600" y="863.9" width="1" height="15.1" fill="#04008b"/><rect x="162" y="863.9" width="3" height="15.1" fill="#0500a7"/><rect x="1435" y="863.9" width="1" height="15.1" fill="#0500a7"/><rect x="180" y="863.9" width="2" height="15.1" fill="#0600b7"/><rect x="1502" y="863.9" width="3" height="15.1" fill="#040084"/><rect x="344" y="863.9" width="1" height="15.1" fill="#0600b7"/><rect x="1521" y="863.9" width="3" height="15.1" fill="#050091"/><rect x="228" y="863.9" width="2" height="15.1" fill="#050091"/><rect x="128" y="863.9" width="1" height="15.1" fill="#0600b7"/><rect x="1544" y="863.9" width="3" height="15.1" fill="#0500a7"/><rect x="1431" y="863.9" width="1" height="15.1" fill="#050091"/><rect x="140" y="863.9" width="1" height="15.1" fill="#0600b7"/><rect x="497" y="863.9" width="2" height="15.1" fill="#04008b"/><rect x="1248" y="863.9" width="2" height="15.1" fill="#04008b"/><rect x="1486" y="863.9" width="2" height="15.1" fill="#050091"/><rect x="348" y="863.9" width="3" height="15.1" fill="#040084"/><rect x="1444" y="863.9" width="2" height="15.1" fill="#0600ae"/><rect x="197" y="863.9" width="2" height="15.1" fill="#0600b7"/><rect x="1507" y="863.9" width="3" height="15.1" fill="#0500a7"/><rect x="1259" y="863.9" width="3" height="15.1" fill="#0500a7"/><rect x="182" y="863.9" width="1" height="15.1" fill="#050091"/><rect x="366" y="863.9" width="2" height="15.1" fill="#0600ae"/><rect x="1488" y="863.9" width="2" height="15.1" fill="#04008b"/><rect x="804" y="878.9" width="1" height="15.1" fill="#0600ae"/><rect x="193" y="878.9" width="3" height="15.1" fill="#0600ae"/><rect x="1223" y="878.9" width="3" height="15.1" fill="#0600b7"/><rect x="1423" y="878.9" width="1" height="15.1" fill="#0500a7"/><rect x="1226" y="878.9" width="2" height="15.1" fill="#050091"/><rect x="198" y="878.9" width="3" height="15.1" fill="#0500a7"/><rect x="358" y="878.9" width="2" height="15.1" fill="#050091"/><rect x="333" y="878.9" width="2" height="15.1" fill="#040084"/><rect x="1533" y="878.9" width="3" height="15.1" fill="#040084"/><rect x="352" y="878.9" width="2" height="15.1" fill="#040084"/><rect x="1221" y="878.9" width="2" height="15.1" fill="#0600ae"/><rect x="1512" y="878.9" width="2" height="15.1" fill="#050091"/><rect x="1597" y="878.9" width="2" height="15.1" fill="#0600ae"/><rect x="292" y="878.9" width="1" height="15.1" fill="#04008b"/><rect x="1621" y="878.9" width="2" height="15.1" fill="#0600b7"/><rect x="1544" y="878.9" width="1" height="15.1" fill="#050091"/><rect x="1603" y="878.9" width="2" height="15.1" fill="#0600ae"/><rect x="1530" y="878.9" width="2" height="15.1" fill="#04008b"/><rect x="1529" y="878.9" width="2" height="15.1" fill="#050091"/><rect x="1453" y="878.9" width="1" height="15.1" fill="#040084"/><rect x="155" y="878.9" width="2" height="15.1" fill="#0500a7"/><rect x="1565" y="878.9" width="3" height="15.1" fill="#0500a7"/><rect x="1606" y="878.9" width="1" height="15.1" fill="#050091"/><rect x="1235" y="878.9" width="2" height="15.1" fill="#040084"/><rect x="183" y="878.9" width="1" height="15.1" fill="#050091"/><rect x="1582" y="878.9" width="1" height="15.1" fill="#0600b7"/><rect x="1246" y="878.9" width="1" height="15.1" fill="#0500a7"/><rect x="503" y="878.9" width="1" height="15.1" fill="#050091"/><rect x="1615" y="878.9" width="3" height="15.1" fill="#0600ae"/><rect x="130" y="878.9" width="3" height="15.1" fill="#050091"/><rect x="1430" y="878.9" width="2" height="15.1" fill="#04008b"/><rect x="1116" y="878.9" width="3" height="15.1" fill="#04008b"/><rect x="343" y="878.9" width="1" height="15.1" fill="#040084"/><rect x="226" y="878.9" width="1" height="15.1" fill="#0600b7"/><rect x="133" y="878.9" width="1" height="15.1" fill="#050091"/><rect x="127" y="878.9" width="2" height="15.1" fill="#040084"/><rect x="1619" y="878.9" width="1" height="15.1" fill="#0600b7"/><rect x="797" y="878.9" width="2" height="15.1" fill="#04008b"/><rect x="1245" y="878.9" width="2" height="15.1" fill="#050091"/><rect x="355" y="878.9" width="2" height="15.1" fill="#0600b7"/><rect x="1119" y="878.9" width="1" height="15.1" fill="#0500a7"/><rect x="1606" y="878.9" width="2" height="15.1" fill="#0600ae"/><rect x="1540" y="878.9" width="2" height="15.1" fill="#04008b"/><rect x="1584" y="878.9" width="1" height="15.1" fill="#0600ae"/><rect x="1125" y="878.9" width="1" height="15.1" fill="#0600b7"/><rect x="1223" y="878.9" width="2" height="15.1" fill="#0500a7"/><rect x="311" y="894.0" width="1" height="15.1" fill="#0600ae"/><rect x="307" y="894.0" width="2" height="15.1" fill="#050091"/><rect x="1230" y="894.0" width="1" height="15.1" fill="#050091"/><rect x="363" y="894.0" width="2" height="15.1" fill="#050091"/><rect x="166" y="894.0" width="1" height="15.1" fill="#0500a7"/><rect x="154" y="894.0" width="1" height="15.1" fill="#0600b7"/><rect x="1579" y="894.0" width="3" height="15.1" fill="#040084"/><rect x="203" y="894.0" width="2" height="15.1" fill="#040084"/><rect x="1235" y="894.0" width="2" height="15.1" fill="#0600ae"/><rect x="1569" y="894.0" width="2" height="15.1" fill="#040084"/><rect x="210" y="894.0" width="2" height="15.1" fill="#040084"/><rect x="312" y="894.0" width="3" height="15.1" fill="#050091"/><rect x="150" y="894.0" width="1" height="15.1" fill="#0600b7"/><rect x="1128" y="894.0" width="1" height="15.1" fill="#0500a7"/><rect x="794" y="894.0" width="1" height="15.1" fill="#0600ae"/><rect x="127" y="894.0" width="2" height="15.1" fill="#04008b"/><rect x="1242" y="894.0" width="1" height="15.1" fill="#04008b"/><rect x="798" y="894.0" width="2" height="15.1" fill="#050091"/><rect x="121" y="894.0" width="1" height="15.1" fill="#050091"/><rect x="1115" y="894.0" width="2" height="15.1" fill="#0600ae"/><rect x="308" y="894.0" width="2" height="15.1" fill="#04008b"/><rect x="221" y="894.0" width="1" height="15.1" fill="#040084"/><rect x="1503" y="894.0" width="3" height="15.1" fill="#04008b"/><rect x="1117" y="894.0" width="3" height="15.1" fill="#0600ae"/><rect x="1477" y="894.0" width="3" height="15.1" fill="#04008b"/><rect x="1446" y="894.0" width="2" height="15.1" fill="#050091"/><rect x="1539" y="894.0" width="2" height="15.1" fill="#0500a7"/><rect x="1477" y="894.0" width="3" height="15.1" fill="#0600ae"/><rect x="1568" y="894.0" width="1" height="15.1" fill="#050091"/><rect x="128" y="894.0" width="2" height="15.1" fill="#050091"/><rect x="1424" y="894.0" width="1" height="15.1" fill="#0600b7"/><rect x="146" y="894.0" width="3" height="15.1" fill="#0500a7"/><rect x="515" y="894.0" width="2" height="15.1" fill="#04008b"/><rect x="1250" y="894.0" width="3" height="15.1" fill="#0600b7"/><rect x="1496" y="894.0" width="2" height="15.1" fill="#0600b7"/><rect x="1488" y="894.0" width="1" height="15.1" fill="#0500a7"/><rect x="1536" y="894.0" width="3" height="15.1" fill="#04008b"/><rect x="1617" y="894.0" width="1" height="15.1" fill="#040084"/><rect x="218" y="894.0" width="1" height="15.1" fill="#0600ae"/><rect x="1217" y="894.0" width="3" height="15.1" fill="#0500a7"/><rect x="1550" y="894.0" width="3" height="15.1" fill="#050091"/><rect x="145" y="894.0" width="2" height="15.1" fill="#0600ae"/><rect x="1239" y="894.0" width="1" height="15.1" fill="#0600ae"/><rect x="221" y="894.0" width="1" height="15.1" fill="#04008b"/><rect x="1421" y="894.0" width="1" height="15.1" fill="#0500a7"/><rect x="1598" y="894.0" width="2" height="15.1" fill="#0600ae"/><rect x="202.6" y="608.2" width="1.2" height="15.1" fill="#ef475f"/><rect x="202.6" y="623.2" width="1.2" height="15.1" fill="#ec0981"/><rect x="202.6" y="638.3" width="1.2" height="15.1" fill="#f17447"/><rect x="202.6" y="653.3" width="1.2" height="15.1" fill="#ed107e"/><rect x="202.6" y="668.4" width="1.2" height="15.1" fill="#ef4063"/><rect x="202.6" y="683.4" width="1.2" height="15.1" fill="#ef4560"/><rect x="202.6" y="698.4" width="1.2" height="15.1" fill="#df008b"/><rect x="202.6" y="713.5" width="1.2" height="15.1" fill="#ef515a"/><rect x="202.6" y="728.5" width="1.2" height="15.1" fill="#e70088"/><rect x="202.6" y="743.6" width="1.2" height="15.1" fill="#ed2174"/><rect x="202.6" y="758.6" width="1.2" height="15.1" fill="#ef4262"/><rect x="202.6" y="773.6" width="1.2" height="15.1" fill="#ef4e5c"/><rect x="202.6" y="788.7" width="1.2" height="15.1" fill="#f0684d"/><rect x="202.6" y="803.7" width="1.2" height="15.1" fill="#f06052"/><rect x="202.6" y="818.8" width="1.2" height="15.1" fill="#e1008a"/><rect x="202.6" y="833.8" width="1.2" height="15.1" fill="#ec0484"/><rect x="202.6" y="848.8" width="1.2" height="15.1" fill="#e1008a"/><rect x="202.6" y="863.9" width="1.2" height="15.1" fill="#ee3669"/><rect x="202.6" y="878.9" width="1.2" height="15.1" fill="#ed1f75"/><rect x="202.6" y="894.0" width="1.2" height="15.1" fill="#f06a4c"/><rect x="206.2" y="608.2" width="0.9" height="15.1" fill="#9c00a4"/><rect x="206.2" y="653.3" width="0.9" height="15.1" fill="#9400a7"/><rect x="206.2" y="668.4" width="0.9" height="15.1" fill="#b2009c"/><rect x="206.2" y="683.4" width="0.9" height="15.1" fill="#a500a1"/><rect x="206.2" y="698.4" width="0.9" height="15.1" fill="#8c00aa"/><rect x="206.2" y="728.5" width="0.9" height="15.1" fill="#7300b3"/><rect x="206.2" y="773.6" width="0.9" height="15.1" fill="#6900b7"/><rect x="206.2" y="788.7" width="0.9" height="15.1" fill="#7500b3"/><rect x="206.2" y="878.9" width="0.9" height="15.1" fill="#a500a0"/><rect x="206.2" y="894.0" width="0.9" height="15.1" fill="#5a00bd"/><rect x="242.0" y="608.2" width="1.0" height="15.1" fill="#c20096"/><rect x="242.0" y="623.2" width="1.0" height="15.1" fill="#9700a6"/><rect x="242.0" y="638.3" width="1.0" height="15.1" fill="#ee2771"/><rect x="242.0" y="653.3" width="1.0" height="15.1" fill="#bb0098"/><rect x="242.0" y="668.4" width="1.0" height="15.1" fill="#dd008c"/><rect x="242.0" y="683.4" width="1.0" height="15.1" fill="#a800a0"/><rect x="242.0" y="698.4" width="1.0" height="15.1" fill="#d10090"/><rect x="242.0" y="713.5" width="1.0" height="15.1" fill="#da008d"/><rect x="242.0" y="728.5" width="1.0" height="15.1" fill="#a9009f"/><rect x="242.0" y="743.6" width="1.0" height="15.1" fill="#9b00a5"/><rect x="242.0" y="758.6" width="1.0" height="15.1" fill="#9500a7"/><rect x="242.0" y="773.6" width="1.0" height="15.1" fill="#cd0092"/><rect x="242.0" y="788.7" width="1.0" height="15.1" fill="#e1008a"/><rect x="242.0" y="803.7" width="1.0" height="15.1" fill="#ec0882"/><rect x="242.0" y="818.8" width="1.0" height="15.1" fill="#9700a6"/><rect x="242.0" y="833.8" width="1.0" height="15.1" fill="#a400a1"/><rect x="242.0" y="848.8" width="1.0" height="15.1" fill="#9500a7"/><rect x="242.0" y="863.9" width="1.0" height="15.1" fill="#ed1879"/><rect x="242.0" y="878.9" width="1.0" height="15.1" fill="#9c00a4"/><rect x="242.0" y="894.0" width="1.0" height="15.1" fill="#ed147b"/><rect x="243.0" y="608.2" width="1.6" height="15.1" fill="#f29833"/><rect x="243.0" y="623.2" width="1.6" height="15.1" fill="#ed2174"/><rect x="243.0" y="638.3" width="1.6" height="15.1" fill="#ee2d6e"/><rect x="243.0" y="653.3" width="1.6" height="15.1" fill="#ee2e6d"/><rect x="243.0" y="668.4" width="1.6" height="15.1" fill="#ee2970"/><rect x="243.0" y="683.4" width="1.6" height="15.1" fill="#f05f52"/><rect x="243.0" y="698.4" width="1.6" height="15.1" fill="#ee2671"/><rect x="243.0" y="713.5" width="1.6" height="15.1" fill="#f05b54"/><rect x="243.0" y="728.5" width="1.6" height="15.1" fill="#f05657"/><rect x="243.0" y="743.6" width="1.6" height="15.1" fill="#f06b4c"/><rect x="243.0" y="758.6" width="1.6" height="15.1" fill="#ef4262"/><rect x="243.0" y="773.6" width="1.6" height="15.1" fill="#f29336"/><rect x="243.0" y="788.7" width="1.6" height="15.1" fill="#ef4a5e"/><rect x="243.0" y="803.7" width="1.6" height="15.1" fill="#f29b32"/><rect x="243.0" y="818.8" width="1.6" height="15.1" fill="#ef495e"/><rect x="243.0" y="833.8" width="1.6" height="15.1" fill="#ef475f"/><rect x="243.0" y="848.8" width="1.6" height="15.1" fill="#f29634"/><rect x="243.0" y="863.9" width="1.6" height="15.1" fill="#ee3a66"/><rect x="243.0" y="878.9" width="1.6" height="15.1" fill="#f17f41"/><rect x="243.0" y="894.0" width="1.6" height="15.1" fill="#f17845"/><rect x="244.6" y="608.2" width="1.4" height="15.1" fill="#ec0086"/><rect x="244.6" y="623.2" width="1.4" height="15.1" fill="#f29435"/><rect x="244.6" y="638.3" width="1.4" height="15.1" fill="#dd008c"/><rect x="244.6" y="653.3" width="1.4" height="15.1" fill="#f17b43"/><rect x="244.6" y="668.4" width="1.4" height="15.1" fill="#ee2771"/><rect x="244.6" y="683.4" width="1.4" height="15.1" fill="#f3ab29"/><rect x="244.6" y="698.4" width="1.4" height="15.1" fill="#f05757"/><rect x="244.6" y="713.5" width="1.4" height="15.1" fill="#f3b424"/><rect x="244.6" y="728.5" width="1.4" height="15.1" fill="#f0684d"/><rect x="244.6" y="743.6" width="1.4" height="15.1" fill="#e30089"/><rect x="244.6" y="758.6" width="1.4" height="15.1" fill="#ef5458"/><rect x="244.6" y="773.6" width="1.4" height="15.1" fill="#f1843e"/><rect x="244.6" y="788.7" width="1.4" height="15.1" fill="#f06251"/><rect x="244.6" y="803.7" width="1.4" height="15.1" fill="#ed1e75"/><rect x="244.6" y="818.8" width="1.4" height="15.1" fill="#ec0185"/><rect x="244.6" y="833.8" width="1.4" height="15.1" fill="#f29535"/><rect x="244.6" y="848.8" width="1.4" height="15.1" fill="#ed117d"/><rect x="244.6" y="863.9" width="1.4" height="15.1" fill="#f17149"/><rect x="244.6" y="878.9" width="1.4" height="15.1" fill="#f29336"/><rect x="244.6" y="894.0" width="1.4" height="15.1" fill="#ef5259"/><rect x="246.0" y="608.2" width="1.0" height="15.1" fill="#5400bf"/><rect x="246.0" y="623.2" width="1.0" height="15.1" fill="#5400bf"/><rect x="246.0" y="638.3" width="1.0" height="15.1" fill="#7d00b0"/><rect x="246.0" y="668.4" width="1.0" height="15.1" fill="#5d00bc"/><rect x="246.0" y="698.4" width="1.0" height="15.1" fill="#9d00a4"/><rect x="246.0" y="758.6" width="1.0" height="15.1" fill="#8400ad"/><rect x="246.0" y="773.6" width="1.0" height="15.1" fill="#8300ad"/><rect x="246.0" y="803.7" width="1.0" height="15.1" fill="#bc0098"/><rect x="246.0" y="818.8" width="1.0" height="15.1" fill="#cb0092"/><rect x="246.0" y="848.8" width="1.0" height="15.1" fill="#b1009c"/><rect x="246.0" y="863.9" width="1.0" height="15.1" fill="#5900bd"/><rect x="246.0" y="878.9" width="1.0" height="15.1" fill="#6f00b5"/><rect x="290.8" y="608.2" width="1.3" height="15.1" fill="#f0694d"/><rect x="290.8" y="623.2" width="1.3" height="15.1" fill="#ed1879"/><rect x="290.8" y="638.3" width="1.3" height="15.1" fill="#ed157b"/><rect x="290.8" y="653.3" width="1.3" height="15.1" fill="#f17d42"/><rect x="290.8" y="668.4" width="1.3" height="15.1" fill="#f05856"/><rect x="290.8" y="683.4" width="1.3" height="15.1" fill="#ef4162"/><rect x="290.8" y="698.4" width="1.3" height="15.1" fill="#f0654f"/><rect x="290.8" y="713.5" width="1.3" height="15.1" fill="#ee2e6d"/><rect x="290.8" y="728.5" width="1.3" height="15.1" fill="#ee2672"/><rect x="290.8" y="743.6" width="1.3" height="15.1" fill="#f05657"/><rect x="290.8" y="758.6" width="1.3" height="15.1" fill="#f06052"/><rect x="290.8" y="773.6" width="1.3" height="15.1" fill="#ef3e64"/><rect x="290.8" y="788.7" width="1.3" height="15.1" fill="#f0684d"/><rect x="290.8" y="803.7" width="1.3" height="15.1" fill="#f1843e"/><rect x="290.8" y="818.8" width="1.3" height="15.1" fill="#f05d53"/><rect x="290.8" y="833.8" width="1.3" height="15.1" fill="#f0694d"/><rect x="290.8" y="848.8" width="1.3" height="15.1" fill="#ee3669"/><rect x="290.8" y="863.9" width="1.3" height="15.1" fill="#f06350"/><rect x="290.8" y="878.9" width="1.3" height="15.1" fill="#ed127c"/><rect x="290.8" y="894.0" width="1.3" height="15.1" fill="#ee336a"/><rect x="793.0" y="608.2" width="1.2" height="15.1" fill="#ee326b"/><rect x="793.0" y="623.2" width="1.2" height="15.1" fill="#ec0683"/><rect x="793.0" y="638.3" width="1.2" height="15.1" fill="#ee3c65"/><rect x="793.0" y="653.3" width="1.2" height="15.1" fill="#f06151"/><rect x="793.0" y="668.4" width="1.2" height="15.1" fill="#ed1d76"/><rect x="793.0" y="683.4" width="1.2" height="15.1" fill="#ee326b"/><rect x="793.0" y="698.4" width="1.2" height="15.1" fill="#ee2771"/><rect x="793.0" y="713.5" width="1.2" height="15.1" fill="#ee306c"/><rect x="793.0" y="728.5" width="1.2" height="15.1" fill="#ee2f6c"/><rect x="793.0" y="743.6" width="1.2" height="15.1" fill="#f06250"/><rect x="793.0" y="758.6" width="1.2" height="15.1" fill="#ee2771"/><rect x="793.0" y="773.6" width="1.2" height="15.1" fill="#ef4362"/><rect x="793.0" y="788.7" width="1.2" height="15.1" fill="#ed0f7e"/><rect x="793.0" y="803.7" width="1.2" height="15.1" fill="#ee3b66"/><rect x="793.0" y="818.8" width="1.2" height="15.1" fill="#ee2c6e"/><rect x="793.0" y="833.8" width="1.2" height="15.1" fill="#ed2472"/><rect x="793.0" y="848.8" width="1.2" height="15.1" fill="#ed157b"/><rect x="793.0" y="863.9" width="1.2" height="15.1" fill="#f05757"/><rect x="793.0" y="878.9" width="1.2" height="15.1" fill="#ed0d7f"/><rect x="793.0" y="894.0" width="1.2" height="15.1" fill="#f05856"/><rect x="1238.6" y="773" width="1" height="15" fill="#5a00c0"/></g>
<g shape-rendering="crispEdges" stroke="#969696" stroke-width="1" fill="none"><path d="M73.5 608V1085"/><path d="M73 1084.5H1671"/><path d="M74 608.5H79"/><path d="M74 758.5H79"/><path d="M74 909.5H79"/><path d="M74 1059.5H79"/><path d="M228.5 1084V1082"/><path d="M384.5 1084V1082"/><path d="M540.5 1084V1082"/><path d="M695.5 1084V1082"/><path d="M850.5 1084V1082"/><path d="M1006.5 1084V1082"/><path d="M1162.5 1084V1082"/><path d="M1317.5 1084V1082"/><path d="M1472.5 1084V1082"/><path d="M1628.5 1084V1078"/></g>
<g shape-rendering="crispEdges" stroke="#4a4a4a" stroke-width="1" fill="none"><path d="M74 638.5H77"/><path d="M74 668.5H77"/><path d="M74 698.5H77"/><path d="M74 728.5H77"/><path d="M74 788.5H77"/><path d="M74 818.5H77"/><path d="M74 848.5H77"/><path d="M74 879.5H77"/><path d="M74 939.5H77"/><path d="M74 969.5H77"/><path d="M74 999.5H77"/><path d="M74 1029.5H77"/></g>
<g fill="#969696" font-family='"Liberation Sans", sans-serif'><text x="68.0" y="613.0" font-size="12.3" text-anchor="end">0</text><text x="68.0" y="763.0" font-size="12.3" text-anchor="end">-10</text><text x="68.0" y="914.0" font-size="12.3" text-anchor="end">-20</text><text x="68.0" y="1064.0" font-size="12.3" text-anchor="end">-30</text><text x="73.5" y="1098.0" font-size="12.2" text-anchor="middle">0</text><text x="229.0" y="1098.0" font-size="12.2" text-anchor="middle">0.1</text><text x="384.5" y="1098.0" font-size="12.2" text-anchor="middle">0.2</text><text x="540.0" y="1098.0" font-size="12.2" text-anchor="middle">0.3</text><text x="695.5" y="1098.0" font-size="12.2" text-anchor="middle">0.4</text><text x="851.0" y="1098.0" font-size="12.2" text-anchor="middle">0.5</text><text x="1006.5" y="1098.0" font-size="12.2" text-anchor="middle">0.6</text><text x="1162.0" y="1098.0" font-size="12.2" text-anchor="middle">0.7</text><text x="1317.5" y="1098.0" font-size="12.2" text-anchor="middle">0.8</text><text x="1473.0" y="1098.0" font-size="12.2" text-anchor="middle">0.9</text><text x="1628.5" y="1098.0" font-size="12.2" text-anchor="middle">1</text><text x="875.2" y="1122.0" font-size="12.4" text-anchor="middle" textLength="95.2" lengthAdjust="spacing">Frequency (GHz)</text><text transform="translate(30.6 846.5) rotate(-90)" font-size="12.4" text-anchor="middle" textLength="28.5" lengthAdjust="spacing">Time</text></g>
</svg>
<span class="t " id="t4" style="top:54.00px;font-size:13px;color:#303030;left:1697.30px;letter-spacing:0.154px;">Controls</span>
<svg class="abs" style="left:1902px;top:50px" width="16" height="17" viewBox="0 0 16 17"><rect x="3.4" y="0.4" width="11.2" height="10.7" fill="#f7f7f7"/><rect x="4.65" y="1.65" width="8.7" height="8.2" fill="#ececec" stroke="#2e3032" stroke-width="1.3"/><rect x="4" y="1" width="10" height="2.3" fill="#2e3032"/><rect x="0.4" y="5.4" width="10.9" height="10.2" fill="#f7f7f7"/><rect x="1.7" y="6.7" width="8.3" height="7.6" fill="#f9f9f9" stroke="#2e3032" stroke-width="1.4"/><rect x="1" y="6" width="9.7" height="2.8" fill="#2e3032"/></svg>
<div class="btn" style="left:1696px;top:74px;width:108px;height:28px;"></div>
<span class="t " id="t5" style="top:81.70px;font-size:13px;color:#b3b3b3;left:1735.20px;letter-spacing:0.433px;"><u>S</u>tart</span>
<div class="btn act" style="left:1812px;top:74px;width:107px;height:28px;"></div>
<span class="t " id="t6" style="top:81.70px;font-size:13px;color:#303030;left:1851.70px;letter-spacing:0.111px;">S<u>t</u>op</span>
<div class="btn" style="left:1696px;top:108px;width:223px;height:28px;"></div>
<span class="t " id="t7" style="top:115.90px;font-size:13px;color:#b3b3b3;left:1774.90px;letter-spacing:0.056px;">Si<u>n</u>gle shot</span>
<span class="t " id="t8" style="top:242.30px;font-size:13px;color:#303030;left:1697.30px;letter-spacing:-0.090px;">Frequency</span>
<svg class="abs" style="left:1902px;top:238px" width="16" height="17" viewBox="0 0 16 17"><rect x="3.4" y="0.4" width="11.2" height="10.7" fill="#f7f7f7"/><rect x="4.65" y="1.65" width="8.7" height="8.2" fill="#ececec" stroke="#2e3032" stroke-width="1.3"/><rect x="4" y="1" width="10" height="2.3" fill="#2e3032"/><rect x="0.4" y="5.4" width="10.9" height="10.2" fill="#f7f7f7"/><rect x="1.7" y="6.7" width="8.3" height="7.6" fill="#f9f9f9" stroke="#2e3032" stroke-width="1.4"/><rect x="1" y="6" width="9.7" height="2.8" fill="#2e3032"/></svg>
<span class="t " id="t9" style="top:268.90px;font-size:13px;color:#303030;left:1695.00px;letter-spacing:0.184px;">Start:</span>
<div class="spin" style="left:1749px;top:262px;width:170px;height:26px;"></div><div class="spinbtn" style="left:1900px;top:263px;width:18px;height:24px"></div><svg class="abs" style="left:1904.5px;top:262px" width="12" height="26" viewBox="0 0 12 26"><path d="M2.6 7.6 6 3.3 9.4 7.6M2.6 17.3 6 21.6 9.4 17.3" fill="none" stroke="#505050" stroke-width="1.25"/></svg><div class="abs" style="left:1919px;top:262px;width:2px;height:1px;background:#c4c4c4"></div><div class="abs" style="left:1918px;top:263px;width:1px;height:1px;background:#9a9a9a"></div>
<span class="t " id="t10" style="top:268.90px;font-size:13px;color:#303030;right:27.84px;letter-spacing:-0.144px;">20.000 MHz</span>
<span class="t " id="t11" style="top:300.90px;font-size:13px;color:#303030;left:1695.00px;letter-spacing:0.010px;">Stop:</span>
<div class="spin" style="left:1749px;top:294px;width:170px;height:26px;"></div><div class="spinbtn" style="left:1900px;top:295px;width:18px;height:24px"></div><svg class="abs" style="left:1904.5px;top:294px" width="12" height="26" viewBox="0 0 12 26"><path d="M2.6 7.6 6 3.3 9.4 7.6M2.6 17.3 6 21.6 9.4 17.3" fill="none" stroke="#505050" stroke-width="1.25"/></svg><div class="abs" style="left:1919px;top:294px;width:2px;height:1px;background:#c4c4c4"></div><div class="abs" style="left:1918px;top:295px;width:1px;height:1px;background:#9a9a9a"></div>
<span class="t " id="t12" style="top:300.90px;font-size:13px;color:#303030;right:27.86px;letter-spacing:-0.156px;">1,000.000 MHz</span>
<span class="t " id="t13" style="top:332.90px;font-size:13px;color:#303030;left:1695.00px;letter-spacing:-0.230px;"><u>B</u>in size:</span>
<div class="spin" style="left:1749px;top:326px;width:170px;height:26px;"></div><div class="spinbtn" style="left:1900px;top:327px;width:18px;height:24px"></div><svg class="abs" style="left:1904.5px;top:326px" width="12" height="26" viewBox="0 0 12 26"><path d="M2.6 7.6 6 3.3 9.4 7.6M2.6 17.3 6 21.6 9.4 17.3" fill="none" stroke="#505050" stroke-width="1.25"/></svg><div class="abs" style="left:1919px;top:326px;width:2px;height:1px;background:#c4c4c4"></div><div class="abs" style="left:1918px;top:327px;width:1px;height:1px;background:#9a9a9a"></div>
<span class="t " id="t14" style="top:332.90px;font-size:13px;color:#303030;right:28.61px;letter-spacing:-0.207px;">10.000 kHz</span>
<span class="t " id="t15" style="top:478.80px;font-size:13px;color:#303030;left:1697.30px;letter-spacing:0.131px;">Settings</span>
<svg class="abs" style="left:1902px;top:475px" width="16" height="17" viewBox="0 0 16 17"><rect x="3.4" y="0.4" width="11.2" height="10.7" fill="#f7f7f7"/><rect x="4.65" y="1.65" width="8.7" height="8.2" fill="#ececec" stroke="#2e3032" stroke-width="1.3"/><rect x="4" y="1" width="10" height="2.3" fill="#2e3032"/><rect x="0.4" y="5.4" width="10.9" height="10.2" fill="#f7f7f7"/><rect x="1.7" y="6.7" width="8.3" height="7.6" fill="#f9f9f9" stroke="#2e3032" stroke-width="1.4"/><rect x="1" y="6" width="9.7" height="2.8" fill="#2e3032"/></svg>
<span class="t " id="t16" style="top:501.00px;font-size:13px;color:#303030;left:1695.00px;letter-spacing:0.167px;"><u>I</u>nterval [s]:</span>
<span class="t " id="t17" style="top:501.00px;font-size:13px;color:#303030;left:1833.20px;letter-spacing:-0.225px;"><u>G</u>ain [dB]:</span>
<div class="spin" style="left:1695px;top:521px;width:131px;height:26px;"></div><div class="spinbtn" style="left:1807px;top:522px;width:18px;height:24px"></div><svg class="abs" style="left:1811.5px;top:521px" width="12" height="26" viewBox="0 0 12 26"><path d="M2.6 7.6 6 3.3 9.4 7.6M2.6 17.3 6 21.6 9.4 17.3" fill="none" stroke="#505050" stroke-width="1.25"/></svg><div class="abs" style="left:1826px;top:521px;width:2px;height:1px;background:#c4c4c4"></div><div class="abs" style="left:1825px;top:522px;width:1px;height:1px;background:#9a9a9a"></div>
<div class="spin" style="left:1833px;top:521px;width:86px;height:26px;"></div><div class="spinbtn" style="left:1900px;top:522px;width:18px;height:24px"></div><svg class="abs" style="left:1904.5px;top:521px" width="12" height="26" viewBox="0 0 12 26"><path d="M2.6 7.6 6 3.3 9.4 7.6M2.6 17.3 6 21.6 9.4 17.3" fill="none" stroke="#505050" stroke-width="1.25"/></svg><div class="abs" style="left:1919px;top:521px;width:2px;height:1px;background:#c4c4c4"></div><div class="abs" style="left:1918px;top:522px;width:1px;height:1px;background:#9a9a9a"></div>
<span class="t " id="t18" style="top:527.80px;font-size:13px;color:#303030;right:121.30px;letter-spacing:-0.304px;">1.00</span>
<span class="t " id="t19" style="top:527.80px;font-size:13px;color:#303030;right:29.29px;letter-spacing:-0.589px;">4.0</span>
<span class="t " id="t20" style="top:555.00px;font-size:13px;color:#303030;left:1695.00px;letter-spacing:0.043px;">Corr. [ppm]:</span>
<span class="t " id="t21" style="top:555.00px;font-size:13px;color:#303030;left:1833.20px;letter-spacing:-0.061px;">Crop [%]:</span>
<div class="spin" style="left:1695px;top:575px;width:131px;height:26px;"></div><div class="spinbtn" style="left:1807px;top:576px;width:18px;height:24px"></div><svg class="abs" style="left:1811.5px;top:575px" width="12" height="26" viewBox="0 0 12 26"><path d="M2.6 7.6 6 3.3 9.4 7.6M2.6 17.3 6 21.6 9.4 17.3" fill="none" stroke="#505050" stroke-width="1.25"/></svg><div class="abs" style="left:1826px;top:575px;width:2px;height:1px;background:#c4c4c4"></div><div class="abs" style="left:1825px;top:576px;width:1px;height:1px;background:#9a9a9a"></div>
<div class="spin" style="left:1833px;top:575px;width:86px;height:26px;"></div><div class="spinbtn" style="left:1900px;top:576px;width:18px;height:24px"></div><svg class="abs" style="left:1904.5px;top:575px" width="12" height="26" viewBox="0 0 12 26"><path d="M2.6 7.6 6 3.3 9.4 7.6M2.6 17.3 6 21.6 9.4 17.3" fill="none" stroke="#505050" stroke-width="1.25"/></svg><div class="abs" style="left:1919px;top:575px;width:2px;height:1px;background:#c4c4c4"></div><div class="abs" style="left:1918px;top:576px;width:1px;height:1px;background:#9a9a9a"></div>
<span class="t " id="t22" style="top:581.80px;font-size:13px;color:#303030;right:121.00px;">0</span>
<span class="t " id="t23" style="top:581.80px;font-size:13px;color:#303030;right:29.47px;letter-spacing:-0.769px;">40</span>
<div class="cb" style="left:1698px;top:614px;width:14px;height:14px;"></div>
<span class="t " id="t24" style="top:615.00px;font-size:13px;color:#303030;left:1719.40px;letter-spacing:-0.075px;">Main curve</span>
<div class="btn act" style="left:1834px;top:607px;width:85px;height:28px;"></div>
<span class="t " id="t25" style="top:615.00px;font-size:13px;color:#303030;left:1852.90px;letter-spacing:-0.201px;">Colors...</span>
<div class="cb" style="left:1698px;top:645px;width:14px;height:14px;"></div>
<span class="t " id="t26" style="top:645.60px;font-size:13px;color:#303030;left:1719.40px;letter-spacing:-0.009px;">Max. hold</span>
<div class="cb" style="left:1836px;top:645px;width:14px;height:14px;"></div>
<span class="t " id="t27" style="top:645.60px;font-size:13px;color:#303030;left:1857.50px;letter-spacing:0.119px;">Min. hold</span>
<div class="cb on" style="left:1698px;top:672px;width:14px;height:14px;"><svg width="14" height="14" viewBox="0 0 14 14" style="position:absolute;left:-0.3px;top:-0.3px"><path d="M3.0 6.4 6.1 9.6 11.2 4.0" fill="none" stroke="#fff" stroke-width="2"/></svg></div>
<span class="t " id="t28" style="top:672.50px;font-size:13px;color:#303030;left:1719.40px;letter-spacing:-0.098px;">Average</span>
<div class="cb on" style="left:1698px;top:701px;width:14px;height:14px;"><svg width="14" height="14" viewBox="0 0 14 14" style="position:absolute;left:-0.3px;top:-0.3px"><path d="M3.0 6.4 6.1 9.6 11.2 4.0" fill="none" stroke="#fff" stroke-width="2"/></svg></div>
<span class="t " id="t29" style="top:701.50px;font-size:13px;color:#303030;left:1719.40px;letter-spacing:0.143px;">Smoothing</span>
<div class="btn act" style="left:1897px;top:695px;width:22px;height:26px;"></div>
<span class="t " id="t30" style="top:701.50px;font-size:13px;color:#303030;left:1903.50px;letter-spacing:-1.122px;">...</span>
<div class="cb" style="left:1698px;top:733px;width:14px;height:14px;"></div>
<span class="t " id="t31" style="top:733.50px;font-size:13px;color:#303030;left:1719.40px;letter-spacing:-0.122px;">Persistence</span>
<div class="btn act" style="left:1897px;top:727px;width:22px;height:26px;"></div>
<span class="t " id="t32" style="top:733.50px;font-size:13px;color:#303030;left:1903.50px;letter-spacing:-1.122px;">...</span>
<div class="cb" style="left:1698px;top:765px;width:14px;height:14px;"></div>
<span class="t " id="t33" style="top:765.60px;font-size:13px;color:#303030;left:1719.40px;letter-spacing:-0.154px;">Baseline</span>
<div class="btn act" style="left:1897px;top:759px;width:22px;height:26px;"></div>
<span class="t " id="t34" style="top:765.60px;font-size:13px;color:#303030;left:1903.50px;letter-spacing:-1.122px;">...</span>
<div class="cb" style="left:1698px;top:795px;width:14px;height:14px;"></div>
<span class="t " id="t35" style="top:795.70px;font-size:13px;color:#303030;left:1719.40px;letter-spacing:0.053px;">Subtract baseline</span>
<svg class="abs" style="left:1832px;top:758px" width="30" height="32" viewBox="0 0 30 32"><path d="M9.6 6.8V23.6L13.0 20.5 15.4 24.6Q16.5 25.6 17.8 24.3L18 23.7 15.9 19.1 20.2 18.5z" fill="#fff" stroke="#000" stroke-width="1.35" stroke-linejoin="round"/></svg>
<div class="line" style="left:1695px;top:1114px;width:225px;height:1px"></div>
<div class="abs" style="left:1695px;top:1114px;width:64px;height:29px;background:#fff;border:1px solid #dcdcdc;border-top-color:#cfcfcf"></div>
<span class="t " id="t36" style="top:1122.50px;font-size:13px;color:#303030;left:1702.70px;letter-spacing:0.202px;">Settings</span>
<span class="t " id="t37" style="top:1121.60px;font-size:13px;color:#303030;left:1766.90px;letter-spacing:-0.296px;">Levels</span>
<span class="t " id="t38" style="top:1151.70px;font-size:13px;color:#303030;left:6.00px;letter-spacing:-0.088px;">Frequency hops: 1911 | Total time: 48 min 51 s | Sweep time: 145.08 s (0.01 FPS)</span>
<div class="abs" style="left:1667px;top:1145px;width:252px;height:25px;border:1px solid #cfcfcf;background:#f6f6f6"></div>
<div class="abs" style="left:1670px;top:1147px;width:248px;height:22px;border-radius:3.5px;background:#cfcfcf"></div>
<div class="abs" style="left:1670px;top:1147px;width:81px;height:22px;border-radius:3.5px;background:#92b372"></div>
<div class="abs" style="left:0;top:1171.5px;width:1920px;height:1.5px;background:#e2e2e2"></div>
</body></html>
